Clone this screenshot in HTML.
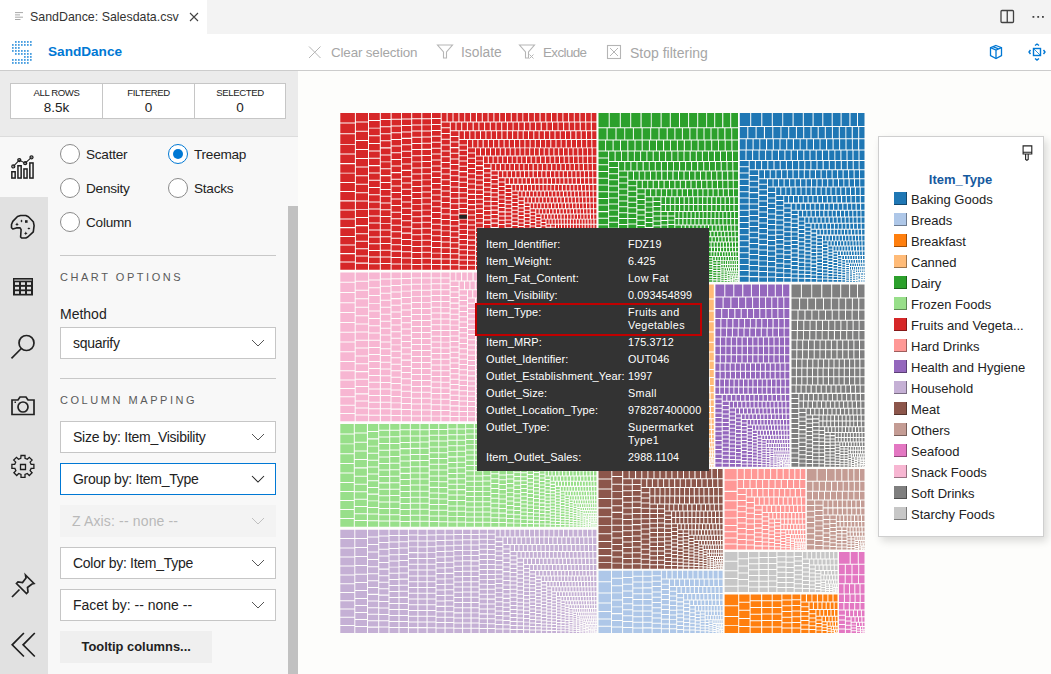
<!DOCTYPE html>
<html><head><meta charset="utf-8">
<style>
*{box-sizing:border-box;margin:0;padding:0}
html,body{width:1051px;height:674px;overflow:hidden;background:#fff;font-family:"Liberation Sans",sans-serif;color:#222}
.a{position:absolute}
.t{position:absolute;white-space:nowrap;line-height:1}
#tabbar{left:0;top:0;width:1051px;height:34px;background:#f3f3f3}
#tab{left:0;top:0;width:207px;height:34px;background:#fff}
#hdr{left:0;top:34px;width:1051px;height:37px;background:#fff;border-bottom:1px solid #cccccc}
.tb{color:#a6a6a6;font-size:14px}
#stats{left:0;top:71px;width:298px;height:66px;background:#ebebeb;border-bottom:1px solid #dcdcdc}
.box{position:absolute;top:83px;height:36px;background:#fff;border:1px solid #c6c6c6}
.box .l{position:absolute;left:0;right:0;top:3.7px;text-align:center;font-size:9.6px;letter-spacing:-0.4px;color:#222;line-height:1}
.box .v{position:absolute;left:0;right:0;top:16.8px;text-align:center;font-size:13.5px;color:#222;line-height:1}
#side{left:0;top:137px;width:48px;height:537px;background:#e1e1e1}
#sideact{left:0;top:137px;width:48px;height:60px;background:#f8f8f8}
#panel{left:48px;top:137px;width:250px;height:537px;background:#f8f8f8}
#sb{left:288px;top:206px;width:10px;height:468px;background:#c1c1c1}
#sbtrack{left:288px;top:137px;width:10px;height:537px;background:#f8f8f8}
.radio{position:absolute;width:20px;height:20px;border:1px solid #8a8a8a;border-radius:50%;background:#fff}
.radio.on{border-color:#0078d4}
.radio.on::after{content:"";position:absolute;left:4px;top:4px;width:10px;height:10px;border-radius:50%;background:#0078d4}
.rl{position:absolute;font-size:13.6px;letter-spacing:-0.25px;color:#222;line-height:1;white-space:nowrap}
.sep{position:absolute;left:60px;width:216px;height:1px;background:#c8c8c8}
.cap{position:absolute;left:60px;font-size:11px;letter-spacing:2.55px;color:#5a5a5a;line-height:1;white-space:nowrap}
.dd{position:absolute;left:60px;width:216px;height:32px;background:#fff;border:1px solid #c6c6c6}
.dd .x{position:absolute;left:12px;top:8.4px;font-size:14px;color:#222;line-height:1;white-space:nowrap}
.dd svg{position:absolute;left:189px;top:10px}
.leg{position:absolute;left:878px;top:136px;width:166px;height:401px;background:#fff;border:1px solid #cfcfcf;box-shadow:3px 4px 8px rgba(0,0,0,.14)}
.sw{position:absolute;left:15px;width:13px;height:13px;border-right:1.5px solid rgba(0,0,0,.38);border-bottom:1.5px solid rgba(0,0,0,.38)}
.ll{position:absolute;left:32px;font-size:13px;color:#222;line-height:1;white-space:nowrap}
#tip{left:477px;top:228px;width:232px;height:243px;background:#333333;color:#fff}
.tk{position:absolute;left:9px;font-size:11px;letter-spacing:0.1px;margin-top:-1px;line-height:1;white-space:nowrap;color:#fff}
.tv{position:absolute;left:151px;font-size:10.8px;letter-spacing:0.1px;line-height:13px;white-space:nowrap;color:#fff}
</style></head><body>
<div class="a" style="left:298px;top:71px;width:753px;height:603px;background:#fdfdfb"></div><div id="tabbar" class="a"></div>
<div id="tab" class="a"></div>
<div id="hdr" class="a"></div>
<div id="stats" class="a"></div>
<div id="side" class="a"></div>
<div id="sideact" class="a"></div>
<div id="panel" class="a"></div>
<div id="sbtrack" class="a"></div>
<div id="sb" class="a"></div>
<!-- tab -->
<svg class="a" style="left:14px;top:11px" width="10" height="10" viewBox="0 0 10 10"><g stroke="#a8a8a8" stroke-width="1"><path d="M1 1.6h8M1 3.9h5M1 6.2h8M1 8.5h5.5"/></g></svg>
<div class="t" style="left:30px;top:10.6px;font-size:12.4px;color:#333">SandDance: Salesdata.csv</div>
<svg class="a" style="left:189px;top:12px" width="10" height="10" viewBox="0 0 10 10"><path d="M1 1l8 8M9 1L1 9" stroke="#424242" stroke-width="1.1"/></svg>
<!-- split + more -->
<svg class="a" style="left:1000px;top:9px" width="15" height="15" viewBox="0 0 15 15"><rect x="1" y="1.5" width="12.5" height="12" rx="1" fill="none" stroke="#424242" stroke-width="1.3"/><path d="M7.25 1.5v12" stroke="#424242" stroke-width="1.3"/></svg>
<svg class="a" style="left:1030px;top:15px" width="16" height="4" viewBox="0 0 16 4"><rect x="2.5" y="1" width="1.8" height="1.8" fill="#424242"/><rect x="7.3" y="1" width="1.8" height="1.8" fill="#424242"/><rect x="12" y="1" width="1.8" height="1.8" fill="#424242"/></svg>
<!-- logo -->
<svg class="a" style="left:11.2px;top:40.2px" width="24" height="26" viewBox="0 0 24 26" fill="#0078d4"><rect x="4.1" y="1.2" width="1.5" height="1.5"/><rect x="7.1" y="1.2" width="1.5" height="1.5"/><rect x="10.1" y="1.2" width="1.5" height="1.5"/><rect x="13.1" y="1.2" width="1.5" height="1.5"/><rect x="16.1" y="1.2" width="1.5" height="1.5"/><rect x="19.1" y="1.2" width="1.5" height="1.5"/><rect x="1.1" y="4.2" width="1.5" height="1.5"/><rect x="4.1" y="4.2" width="1.5" height="1.5"/><rect x="7.1" y="4.2" width="1.5" height="1.5"/><rect x="10.1" y="4.2" width="1.5" height="1.5"/><rect x="13.1" y="4.2" width="1.5" height="1.5"/><rect x="16.1" y="4.2" width="1.5" height="1.5"/><rect x="19.1" y="4.2" width="1.5" height="1.5"/><rect x="1.1" y="7.2" width="1.5" height="1.5"/><rect x="4.1" y="7.2" width="1.5" height="1.5"/><rect x="7.1" y="7.2" width="1.5" height="1.5"/><rect x="1.1" y="10.2" width="1.5" height="1.5"/><rect x="4.1" y="10.2" width="1.5" height="1.5"/><rect x="7.1" y="10.2" width="1.5" height="1.5"/><rect x="10.1" y="10.2" width="1.5" height="1.5"/><rect x="13.1" y="10.2" width="1.5" height="1.5"/><rect x="16.1" y="10.2" width="1.5" height="1.5"/><rect x="4.1" y="13.2" width="1.5" height="1.5"/><rect x="7.1" y="13.2" width="1.5" height="1.5"/><rect x="10.1" y="13.2" width="1.5" height="1.5"/><rect x="13.1" y="13.2" width="1.5" height="1.5"/><rect x="16.1" y="13.2" width="1.5" height="1.5"/><rect x="19.1" y="13.2" width="1.5" height="1.5"/><rect x="13.1" y="16.2" width="1.5" height="1.5"/><rect x="16.1" y="16.2" width="1.5" height="1.5"/><rect x="19.1" y="16.2" width="1.5" height="1.5"/><rect x="1.1" y="19.2" width="1.5" height="1.5"/><rect x="4.1" y="19.2" width="1.5" height="1.5"/><rect x="7.1" y="19.2" width="1.5" height="1.5"/><rect x="10.1" y="19.2" width="1.5" height="1.5"/><rect x="13.1" y="19.2" width="1.5" height="1.5"/><rect x="16.1" y="19.2" width="1.5" height="1.5"/><rect x="19.1" y="19.2" width="1.5" height="1.5"/><rect x="1.1" y="22.2" width="1.5" height="1.5"/><rect x="4.1" y="22.2" width="1.5" height="1.5"/><rect x="7.1" y="22.2" width="1.5" height="1.5"/><rect x="10.1" y="22.2" width="1.5" height="1.5"/><rect x="13.1" y="22.2" width="1.5" height="1.5"/><rect x="16.1" y="22.2" width="1.5" height="1.5"/></svg>
<div class="t" style="left:48px;top:45.3px;font-size:13.6px;font-weight:bold;color:#0078d4">SandDance</div>
<!-- toolbar -->
<svg class="a" style="left:308px;top:45px" width="14" height="14" viewBox="0 0 14 14"><path d="M1 1.5l11.5 11.5M12.5 1.5L1 13" stroke="#b5b5b5" stroke-width="1"/></svg>
<div class="t tb" style="left:331px;top:46px;font-size:13.4px;letter-spacing:-0.15px">Clear selection</div>
<svg class="a" style="left:436px;top:44px" width="18" height="16" viewBox="0 0 18 16"><path d="M1.5 1h15L10.5 8v6H7.5V8z" fill="none" stroke="#b5b5b5" stroke-width="1.1"/></svg>
<div class="t tb" style="left:461px;top:46px;font-size:13.8px">Isolate</div>
<svg class="a" style="left:518px;top:44px" width="18" height="16" viewBox="0 0 18 16"><path d="M1.5 1h15L10.5 8v6H7.5V8z" fill="none" stroke="#b5b5b5" stroke-width="1.1"/><path d="M11.5 10.5l4 4M15.5 10.5l-4 4" stroke="#b5b5b5" stroke-width="1"/></svg>
<div class="t tb" style="left:543px;top:46px;font-size:13.4px;letter-spacing:-0.6px">Exclude</div>
<svg class="a" style="left:606px;top:44px" width="16" height="16" viewBox="0 0 16 16"><rect x="1.5" y="1.5" width="13" height="13" fill="none" stroke="#b5b5b5" stroke-width="1.1"/><path d="M4 4l8 8M12 4l-8 8" stroke="#b5b5b5" stroke-width="1"/></svg>
<div class="t tb" style="left:630px;top:46px;font-size:14px">Stop filtering</div>
<!-- right blue icons -->
<svg class="a" style="left:988px;top:44px" width="16" height="16" viewBox="0 0 16 16"><g fill="none" stroke="#0078d4" stroke-width="1.3"><path d="M8 1.5l5.5 2.2v8L8 14.5 2.5 11.7v-8z"/><path d="M2.5 3.7L8 6l5.5-2.3M8 6v8.5M5 2.6l5.5 2.3"/></g></svg>
<svg class="a" style="left:1028px;top:43px" width="18" height="18" viewBox="0 0 18 18"><g fill="none" stroke="#0078d4" stroke-width="1.4"><rect x="5.5" y="5.5" width="7" height="7"/><path d="M7 2.5l2-1.5 2 1.5M7 15.5l2 1.5 2-1.5M2.5 7L1 9l1.5 2M15.5 7l1.5 2-1.5 2"/></g><path d="M6 6l6 6" stroke="#0078d4" stroke-width="0.8"/></svg>
<!-- stats -->
<div class="box" style="left:10px;width:93px"><div class="l">ALL ROWS</div><div class="v">8.5k</div></div>
<div class="box" style="left:102px;width:93px"><div class="l">FILTERED</div><div class="v">0</div></div>
<div class="box" style="left:194px;width:92px"><div class="l">SELECTED</div><div class="v">0</div></div>
<!-- side icons -->
<svg class="a" style="left:9px;top:154px" width="28" height="28" viewBox="0 0 28 28"><g fill="none" stroke="#1e1e1e" stroke-width="1.5"><rect x="2.85" y="17.75" width="3.3" height="6.3"/><rect x="8.95" y="11.75" width="3.2" height="12.3"/><rect x="14.95" y="14.95" width="3.1" height="9.1"/><rect x="20.85" y="8.95" width="3.2" height="15.1"/><path d="M4.3 12.4L10.3 6.1L16.2 9.2L22.5 3.3" stroke-width="1.1"/><circle cx="4.3" cy="12.4" r="1.5" stroke-width="1.3"/><circle cx="10.3" cy="6.1" r="1.5" stroke-width="1.3"/><circle cx="16.2" cy="9.2" r="1.5" stroke-width="1.3"/><circle cx="22.5" cy="3.3" r="1.5" stroke-width="1.3"/></g></svg>
<svg class="a" style="left:9px;top:213px" width="28" height="28" viewBox="0 0 28 28"><path d="M11.6 2.5H16.8L19.4 3.8L24.3 8.7L25.1 12.6L24.3 18.8L18.8 24L16.8 25H12.6L11.6 24L12.1 16.7L11.1 14.9H7.4L3.8 16L2.5 14.7V11.5L3.8 8.4L8.5 3.5Z" fill="none" stroke="#1e1e1e" stroke-width="1.6" stroke-linejoin="round"/><g fill="#1e1e1e"><path d="M12.5 6.4l1 1.5-1 1.5-1-1.5z"/><rect x="16" y="7.2" width="2.6" height="2.6"/><path d="M8 9.6l.6 1.2 1.2.6-1.2.6-.6 1.2-.6-1.2-1.2-.6 1.2-.6z"/><path d="M19.9 14.4l1.5 1-1.5 1-1.5-1z"/><path d="M16.8 18.6l.6 1.2 1.2.6-1.2.6-.6 1.2-.6-1.2-1.2-.6 1.2-.6z"/></g></svg>
<svg class="a" style="left:12px;top:277px" width="22" height="20" viewBox="0 0 22 20"><rect x="1" y="1" width="20" height="17.5" fill="#222"/><rect x="2.3" y="2.6" width="17.4" height="1" fill="#e1e1e1"/><g fill="#e1e1e1"><rect x="3" y="5.3" width="4" height="2.6"/><rect x="9" y="5.3" width="4" height="2.6"/><rect x="15" y="5.3" width="4" height="2.6"/><rect x="3" y="9.8" width="4" height="2.6"/><rect x="9" y="9.8" width="4" height="2.6"/><rect x="15" y="9.8" width="4" height="2.6"/><rect x="3" y="14.2" width="4" height="2.6"/><rect x="9" y="14.2" width="4" height="2.6"/><rect x="15" y="14.2" width="4" height="2.6"/></g></svg>
<svg class="a" style="left:9px;top:333px" width="28" height="28" viewBox="0 0 28 28"><g fill="none" stroke="#222" stroke-width="1.7"><circle cx="17.5" cy="10" r="7.5"/><path d="M12.3 15.5L2.5 25.3"/></g></svg>
<svg class="a" style="left:9px;top:393px" width="28" height="26" viewBox="0 0 28 26"><g fill="none" stroke="#222" stroke-width="1.7"><path d="M3 7h6l2-3h6l2 3h6v14.5H3z"/><circle cx="14" cy="14" r="5"/></g><rect x="5.5" y="8.5" width="1.5" height="1.5" fill="#222"/></svg>
<svg class="a" style="left:9px;top:453px" width="28" height="28" viewBox="0 0 28 28"><g fill="none" stroke="#1e1e1e" stroke-width="1.3"><path d="M12 2.5h4v2.8l2.3 1 2-2 2.8 2.8-2 2 1 2.3h2.8v4h-2.8l-1 2.3 2 2-2.8 2.8-2-2-2.3 1v2.8h-4v-2.8l-2.3-1-2 2-2.8-2.8 2-2-1-2.3H2.9v-4h2.8l1-2.3-2-2 2.8-2.8 2 2 2.3-1z"/><path d="M11.5 11.5h5v5h-5z"/></g></svg>
<svg class="a" style="left:9px;top:572px" width="28" height="28" viewBox="0 0 28 28"><g fill="none" stroke="#222" stroke-width="1.7"><path d="M16.5 3l8.5 8.5-2 .5-4.5 3.5.5 4.5-1.5 1.5-10-10 1.5-1.5 4.5.5L17 6z"/><path d="M10.5 17.5L3 25"/></g></svg>
<svg class="a" style="left:10px;top:631px" width="28" height="28" viewBox="0 0 28 28"><g fill="none" stroke="#1e1e1e" stroke-width="1.7"><path d="M13.9 2L2.2 13.8l11.7 11.7M24.8 2L13.1 13.8l11.7 11.7"/></g></svg>
<!-- radios -->
<div class="radio" style="left:60px;top:144px"></div><div class="rl" style="left:86px;top:147.7px">Scatter</div>
<div class="radio on" style="left:168px;top:144px"></div><div class="rl" style="left:194px;top:147.7px">Treemap</div>
<div class="radio" style="left:60px;top:178px"></div><div class="rl" style="left:86px;top:181.7px">Density</div>
<div class="radio" style="left:168px;top:178px"></div><div class="rl" style="left:194px;top:181.7px">Stacks</div>
<div class="radio" style="left:60px;top:212px"></div><div class="rl" style="left:86px;top:215.7px">Column</div>
<div class="sep" style="top:255px"></div>
<div class="cap" style="top:272px">CHART OPTIONS</div>
<div class="t" style="left:60px;top:307px;font-size:14px;color:#222">Method</div>
<div class="dd" style="top:327px"><div class="x" style="letter-spacing:-0.3px">squarify</div><svg width="16" height="10" viewBox="0 0 16 10"><path d="M2 2l6 6 6-6" fill="none" stroke="#555" stroke-width="1"/></svg></div>
<div class="sep" style="top:378px"></div>
<div class="cap" style="top:395px">COLUMN MAPPING</div>
<div class="dd" style="top:421px"><div class="x" style="letter-spacing:-0.27px">Size by: Item_Visibility</div><svg width="16" height="10" viewBox="0 0 16 10"><path d="M2 2l6 6 6-6" fill="none" stroke="#555" stroke-width="1"/></svg></div>
<div class="dd" style="top:463px;border-color:#0078d4"><div class="x" style="letter-spacing:-0.28px">Group by: Item_Type</div><svg width="16" height="10" viewBox="0 0 16 10"><path d="M2 2l6 6 6-6" fill="none" stroke="#222" stroke-width="1.05"/></svg></div>
<div class="dd" style="top:505px;background:#f3f3f3;border-color:#f3f3f3"><div class="x" style="color:#b9b9b9;letter-spacing:0.15px;left:11px;top:8px">Z Axis: -- none --</div><svg width="16" height="10" viewBox="0 0 16 10"><path d="M2 2l6 6 6-6" fill="none" stroke="#c0c0c0" stroke-width="1"/></svg></div>
<div class="dd" style="top:547px"><div class="x" style="letter-spacing:-0.28px">Color by: Item_Type</div><svg width="16" height="10" viewBox="0 0 16 10"><path d="M2 2l6 6 6-6" fill="none" stroke="#555" stroke-width="1"/></svg></div>
<div class="dd" style="top:589px"><div class="x">Facet by: -- none --</div><svg width="16" height="10" viewBox="0 0 16 10"><path d="M2 2l6 6 6-6" fill="none" stroke="#555" stroke-width="1"/></svg></div>
<div class="a" style="left:60px;top:631px;width:152px;height:32px;background:#efefef"></div>
<div class="t" style="left:81.5px;top:640.5px;font-size:12.9px;font-weight:bold;color:#222">Tooltip columns...</div>
<svg class="a" style="left:0;top:0" width="1051" height="674"><path fill="#d62728" d="M340.3 113h14.6v9.6h-14.6zM340.3 123.6h14.6v9.6h-14.6zM340.3 134.3h14.6v9.6h-14.6zM340.3 144.8h14.6v8.7h-14.6zM340.3 154.5h14.6v8.6h-14.6zM340.3 164.2h14.6v8.5h-14.6zM340.3 173.6h14.6v8.3h-14.6zM340.3 182.9h14.6v8.2h-14.6zM340.3 192.1h14.6v8.2h-14.6zM340.3 201.4h14.6v8.1h-14.6zM340.3 210.5h14.6v8h-14.6zM340.3 219.4h14.6v7.7h-14.6zM340.3 228.2h14.6v7.7h-14.6zM340.3 236.9h14.6v7.7h-14.6zM340.3 245.5h14.6v7.6h-14.6zM340.3 254.2h14.6v7.3h-14.6zM340.3 262.5h14.6v7.3h-14.6zM355.9 113h12.1v8.5h-12.1zM355.9 122.5h12.1v8.3h-12.1zM355.9 131.8h12.1v8.2h-12.1zM355.9 141h12.1v8h-12.1zM355.9 150h12.1v8h-12.1zM355.9 159h12.1v7.6h-12.1zM355.9 167.6h12.1v7.6h-12.1zM355.9 176.2h12.1v7.6h-12.1zM355.9 184.8h12.1v7.5h-12.1zM355.9 193.3h12.1v7.3h-12.1zM355.9 201.6h12.1v7.3h-12.1zM355.9 209.8h12.1v7.2h-12.1zM355.9 218h12.1v7.1h-12.1zM355.9 226.2h12.1v7h-12.1zM355.9 234.2h12.1v6.6h-12.1zM355.9 241.8h12.1v6.4h-12.1zM355.9 249.2h12.1v6.3h-12.1zM355.9 256.5h12.1v6.1h-12.1zM355.9 263.7h12.1v6.1h-12.1zM369 113h10.8v6.9h-10.8zM369 120.9h10.8v6.8h-10.8zM369 128.6h10.8v6.7h-10.8zM369 136.3h10.8v6.6h-10.8zM369 143.9h10.8v6.5h-10.8zM369 151.4h10.8v6.4h-10.8zM369 158.8h10.8v6.3h-10.8zM369 166.2h10.8v6.3h-10.8zM369 173.5h10.8v6.3h-10.8zM369 180.8h10.8v6.3h-10.8zM369 188h10.8v6.2h-10.8zM369 195.3h10.8v6.1h-10.8zM369 202.4h10.8v6.1h-10.8zM369 209.5h10.8v6.1h-10.8zM369 216.6h10.8v6h-10.8zM369 223.6h10.8v5.9h-10.8zM369 230.5h10.8v5.9h-10.8zM369 237.4h10.8v5.8h-10.8zM369 244.3h10.8v5.7h-10.8zM369 250.9h10.8v5.6h-10.8zM369 257.6h10.8v5.6h-10.8zM369 264.2h10.8v5.6h-10.8zM380.8 113h9.8v6.1h-9.8zM380.8 120.1h9.8v6.1h-9.8zM380.8 127.2h9.8v6.1h-9.8zM380.8 134.3h9.8v6h-9.8zM380.8 141.3h9.8v6h-9.8zM380.8 148.4h9.8v6h-9.8zM380.8 155.4h9.8v6h-9.8zM380.8 162.3h9.8v5.9h-9.8zM380.8 169.2h9.8v5.9h-9.8zM380.8 176.2h9.8v5.9h-9.8zM380.8 183h9.8v5.9h-9.8zM380.8 189.9h9.8v5.8h-9.8zM380.8 196.7h9.8v5.8h-9.8zM380.8 203.5h9.8v5.8h-9.8zM380.8 210.3h9.8v5.8h-9.8zM380.8 217.1h9.8v5.8h-9.8zM380.8 223.8h9.8v5.7h-9.8zM380.8 230.6h9.8v5.7h-9.8zM380.8 237.3h9.8v5.7h-9.8zM380.8 244h9.8v5.7h-9.8zM380.8 250.7h9.8v5.7h-9.8zM380.8 257.4h9.8v5.7h-9.8zM380.8 264.1h9.8v5.7h-9.8zM391.6 113h9.5v5.8h-9.5zM391.6 119.8h9.5v5.8h-9.5zM391.6 126.5h9.5v5.7h-9.5zM391.6 133.3h9.5v5.7h-9.5zM391.6 139.9h9.5v5.7h-9.5zM391.6 146.6h9.5v5.7h-9.5zM391.6 153.3h9.5v5.6h-9.5zM391.6 159.9h9.5v5.6h-9.5zM391.6 166.5h9.5v5.6h-9.5zM391.6 173.2h9.5v5.6h-9.5zM391.6 179.8h9.5v5.6h-9.5zM391.6 186.4h9.5v5.6h-9.5zM391.6 193h9.5v5.6h-9.5zM391.6 199.5h9.5v5.6h-9.5zM391.6 206.1h9.5v5.6h-9.5zM391.6 212.7h9.5v5.6h-9.5zM391.6 219.2h9.5v5.5h-9.5zM391.6 225.8h9.5v5.5h-9.5zM391.6 232.3h9.5v5.5h-9.5zM391.6 238.8h9.5v5.5h-9.5zM391.6 245.2h9.5v5.4h-9.5zM391.6 251.7h9.5v5.4h-9.5zM391.6 258.1h9.5v5.4h-9.5zM391.6 264.5h9.5v5.3h-9.5zM402 113h9.2v5.5h-9.2zM402 119.5h9.2v5.5h-9.2zM402 126h9.2v5.5h-9.2zM402 132.4h9.2v5.4h-9.2zM402 138.9h9.2v5.4h-9.2zM402 145.3h9.2v5.4h-9.2zM402 151.8h9.2v5.4h-9.2zM402 158.1h9.2v5.4h-9.2zM402 164.5h9.2v5.3h-9.2zM402 170.9h9.2v5.3h-9.2zM402 177.2h9.2v5.3h-9.2zM402 183.5h9.2v5.3h-9.2zM402 189.8h9.2v5.3h-9.2zM402 196.1h9.2v5.3h-9.2zM402 202.4h9.2v5.3h-9.2zM402 208.7h9.2v5.3h-9.2zM402 214.9h9.2v5.3h-9.2zM402 221.2h9.2v5.2h-9.2zM402 227.4h9.2v5.2h-9.2zM402 233.7h9.2v5.2h-9.2zM402 239.9h9.2v5.2h-9.2zM402 246.1h9.2v5.2h-9.2zM402 252.3h9.2v5.2h-9.2zM402 258.5h9.2v5.2h-9.2zM402 264.6h9.2v5.2h-9.2zM412.2 113h9.1v5.2h-9.1zM412.2 119.2h9.1v5.2h-9.1zM412.2 125.4h9.1v5.2h-9.1zM412.2 131.5h9.1v5.2h-9.1zM412.2 137.7h9.1v5.2h-9.1zM412.2 143.9h9.1v5.2h-9.1zM412.2 150h9.1v5.2h-9.1zM412.2 156.2h9.1v5.2h-9.1zM412.2 162.3h9.1v5.1h-9.1zM412.2 168.5h9.1v5.1h-9.1zM412.2 174.6h9.1v5.1h-9.1zM412.2 180.8h9.1v5.1h-9.1zM412.2 186.9h9.1v5.1h-9.1zM412.2 193h9.1v5.1h-9.1zM412.2 199.1h9.1v5.1h-9.1zM412.2 205.1h9.1v5.1h-9.1zM412.2 211.2h9.1v5h-9.1zM412.2 217.2h9.1v5h-9.1zM412.2 223.2h9.1v5h-9.1zM412.2 229.2h9.1v5h-9.1zM412.2 235.2h9.1v5h-9.1zM412.2 241.1h9.1v5h-9.1zM412.2 247.1h9.1v4.9h-9.1zM412.2 253h9.1v4.9h-9.1zM412.2 259h9.1v4.9h-9.1zM412.2 264.9h9.1v4.9h-9.1zM422.3 113h8.7v5.2h-8.7zM422.3 119.2h8.7v5.2h-8.7zM422.3 125.3h8.7v5.1h-8.7zM422.3 131.5h8.7v5.1h-8.7zM422.3 137.6h8.7v5.1h-8.7zM422.3 143.7h8.7v5.1h-8.7zM422.3 149.9h8.7v5.1h-8.7zM422.3 156h8.7v5.1h-8.7zM422.3 162.1h8.7v5.1h-8.7zM422.3 168.2h8.7v5.1h-8.7zM422.3 174.3h8.7v5.1h-8.7zM422.3 180.3h8.7v5.1h-8.7zM422.3 186.4h8.7v5.1h-8.7zM422.3 192.5h8.7v5.1h-8.7zM422.3 198.5h8.7v5.1h-8.7zM422.3 204.6h8.7v5.1h-8.7zM422.3 210.6h8.7v5h-8.7zM422.3 216.7h8.7v5h-8.7zM422.3 222.7h8.7v5h-8.7zM422.3 228.8h8.7v5h-8.7zM422.3 234.8h8.7v5h-8.7zM422.3 240.8h8.7v5h-8.7zM422.3 246.8h8.7v5h-8.7zM422.3 252.8h8.7v5h-8.7zM422.3 258.8h8.7v5h-8.7zM422.3 264.8h8.7v5h-8.7zM432 113h8.7v5h-8.7zM432 119h8.7v5h-8.7zM432 124.9h8.7v5h-8.7zM432 130.9h8.7v4.9h-8.7zM432 136.8h8.7v4.9h-8.7zM432 142.8h8.7v4.9h-8.7zM432 148.7h8.7v4.9h-8.7zM432 154.6h8.7v4.9h-8.7zM432 160.5h8.7v4.9h-8.7zM432 166.4h8.7v4.9h-8.7zM432 172.2h8.7v4.9h-8.7zM432 178.1h8.7v4.9h-8.7zM432 184h8.7v4.8h-8.7zM432 189.8h8.7v4.8h-8.7zM432 195.6h8.7v4.8h-8.7zM432 201.4h8.7v4.8h-8.7zM432 207.3h8.7v4.8h-8.7zM432 213.1h8.7v4.8h-8.7zM432 218.9h8.7v4.8h-8.7zM432 224.7h8.7v4.8h-8.7zM432 230.5h8.7v4.8h-8.7zM432 236.3h8.7v4.8h-8.7zM432 242.1h8.7v4.8h-8.7zM432 247.9h8.7v4.8h-8.7zM432 253.6h8.7v4.7h-8.7zM432 259.4h8.7v4.7h-8.7zM432 265.1h8.7v4.7h-8.7zM441.7 113h4.9v8.4h-4.9zM447.6 113h4.9v8.4h-4.9zM453.5 113h4.9v8.4h-4.9zM459.4 113h4.9v8.4h-4.9zM465.2 113h4.9v8.4h-4.9zM471.1 113h4.8v8.4h-4.8zM477 113h4.8v8.4h-4.8zM482.8 113h4.8v8.4h-4.8zM488.6 113h4.8v8.4h-4.8zM494.4 113h4.8v8.4h-4.8zM500.2 113h4.8v8.4h-4.8zM506 113h4.8v8.4h-4.8zM511.8 113h4.8v8.4h-4.8zM517.6 113h4.8v8.4h-4.8zM523.3 113h4.8v8.4h-4.8zM529.1 113h4.8v8.4h-4.8zM534.8 113h4.7v8.4h-4.7zM540.6 113h4.7v8.4h-4.7zM546.3 113h4.7v8.4h-4.7zM552 113h4.7v8.4h-4.7zM557.7 113h4.7v8.4h-4.7zM563.4 113h4.7v8.4h-4.7zM569.1 113h4.7v8.4h-4.7zM574.7 113h4.7v8.4h-4.7zM580.4 113h4.7v8.4h-4.7zM586.1 113h4.7v8.4h-4.7zM591.7 113h4.7v8.4h-4.7zM441.7 122.4h8.1v4.8h-8.1zM441.7 128.2h8.1v4.8h-8.1zM441.7 134h8.1v4.8h-8.1zM441.7 139.8h8.1v4.8h-8.1zM441.7 145.6h8.1v4.8h-8.1zM441.7 151.4h8.1v4.8h-8.1zM441.7 157.2h8.1v4.8h-8.1zM441.7 162.9h8.1v4.8h-8.1zM441.7 168.7h8.1v4.8h-8.1zM441.7 174.5h8.1v4.7h-8.1zM441.7 180.2h8.1v4.7h-8.1zM441.7 185.9h8.1v4.7h-8.1zM441.7 191.6h8.1v4.7h-8.1zM441.7 197.3h8.1v4.7h-8.1zM441.7 203h8.1v4.7h-8.1zM441.7 208.7h8.1v4.7h-8.1zM441.7 214.4h8.1v4.7h-8.1zM441.7 220h8.1v4.7h-8.1zM441.7 225.7h8.1v4.7h-8.1zM441.7 231.3h8.1v4.7h-8.1zM441.7 237h8.1v4.6h-8.1zM441.7 242.6h8.1v4.6h-8.1zM441.7 248.3h8.1v4.6h-8.1zM441.7 253.9h8.1v4.6h-8.1zM441.7 259.5h8.1v4.6h-8.1zM441.7 265.2h8.1v4.6h-8.1zM450.8 122.4h4.7v7.9h-4.7zM456.5 122.4h4.7v7.9h-4.7zM462.2 122.4h4.7v7.9h-4.7zM467.9 122.4h4.7v7.9h-4.7zM473.7 122.4h4.7v7.9h-4.7zM479.4 122.4h4.7v7.9h-4.7zM485.1 122.4h4.7v7.9h-4.7zM490.8 122.4h4.7v7.9h-4.7zM496.5 122.4h4.7v7.9h-4.7zM502.2 122.4h4.7v7.9h-4.7zM507.9 122.4h4.7v7.9h-4.7zM513.5 122.4h4.7v7.9h-4.7zM519.2 122.4h4.6v7.9h-4.6zM524.9 122.4h4.6v7.9h-4.6zM530.5 122.4h4.6v7.9h-4.6zM536.1 122.4h4.6v7.9h-4.6zM541.8 122.4h4.6v7.9h-4.6zM547.4 122.4h4.6v7.9h-4.6zM553 122.4h4.6v7.9h-4.6zM558.5 122.4h4.6v7.9h-4.6zM564.1 122.4h4.6v7.9h-4.6zM569.7 122.4h4.6v7.9h-4.6zM575.2 122.4h4.5v7.9h-4.5zM580.8 122.4h4.5v7.9h-4.5zM586.3 122.4h4.5v7.9h-4.5zM591.9 122.4h4.5v7.9h-4.5zM450.8 131.2h7.7v4.7h-7.7zM450.8 136.9h7.7v4.6h-7.7zM450.8 142.5h7.7v4.6h-7.7zM450.8 148.2h7.7v4.6h-7.7zM450.8 153.8h7.7v4.6h-7.7zM450.8 159.5h7.7v4.6h-7.7zM450.8 165.1h7.7v4.6h-7.7zM450.8 170.7h7.7v4.6h-7.7zM450.8 176.3h7.7v4.6h-7.7zM450.8 181.9h7.7v4.6h-7.7zM450.8 187.5h7.7v4.6h-7.7zM450.8 193.1h7.7v4.6h-7.7zM450.8 198.7h7.7v4.6h-7.7zM450.8 204.3h7.7v4.6h-7.7zM450.8 209.9h7.7v4.6h-7.7zM450.8 215.5h7.7v4.6h-7.7zM450.8 221h7.7v4.6h-7.7zM450.8 226.6h7.7v4.6h-7.7zM450.8 232.2h7.7v4.5h-7.7zM450.8 237.7h7.7v4.5h-7.7zM450.8 243.3h7.7v4.5h-7.7zM450.8 248.8h7.7v4.5h-7.7zM450.8 254.3h7.7v4.5h-7.7zM450.8 259.8h7.7v4.5h-7.7zM450.8 265.3h7.7v4.5h-7.7zM459.5 131.2h4.4v7.8h-4.4zM464.9 131.2h4.4v7.8h-4.4zM470.3 131.2h4.4v7.8h-4.4zM475.6 131.2h4.4v7.8h-4.4zM481 131.2h4.4v7.8h-4.4zM486.4 131.2h4.4v7.8h-4.4zM491.7 131.2h4.4v7.8h-4.4zM497.1 131.2h4.3v7.8h-4.3zM502.4 131.2h4.3v7.8h-4.3zM507.8 131.2h4.3v7.8h-4.3zM513.1 131.2h4.3v7.8h-4.3zM518.4 131.2h4.3v7.8h-4.3zM523.7 131.2h4.3v7.8h-4.3zM529 131.2h4.3v7.8h-4.3zM534.3 131.2h4.3v7.8h-4.3zM539.6 131.2h4.3v7.8h-4.3zM544.9 131.2h4.3v7.8h-4.3zM550.2 131.2h4.3v7.8h-4.3zM555.5 131.2h4.3v7.8h-4.3zM560.7 131.2h4.3v7.8h-4.3zM566 131.2h4.2v7.8h-4.2zM571.2 131.2h4.2v7.8h-4.2zM576.5 131.2h4.2v7.8h-4.2zM581.7 131.2h4.2v7.8h-4.2zM587 131.2h4.2v7.8h-4.2zM592.2 131.2h4.2v7.8h-4.2zM459.5 140.1h7.5v4.4h-7.5zM459.5 145.4h7.5v4.4h-7.5zM459.5 150.8h7.5v4.4h-7.5zM459.5 156.2h7.5v4.3h-7.5zM459.5 161.5h7.5v4.3h-7.5zM459.5 166.8h7.5v4.3h-7.5zM459.5 172.2h7.5v4.3h-7.5zM459.5 177.4h7.5v4.3h-7.5zM459.5 182.7h7.5v4.3h-7.5zM459.5 188h7.5v4.3h-7.5zM459.5 193.3h7.5v4.3h-7.5zM459.5 198.5h7.5v4.3h-7.5zM459.5 203.8h7.5v4.2h-7.5zM459.5 209h7.5v4.2h-7.5zM459.5 214.3h7.5v4.2h-7.5zM459.5 219.5h7.5v4.2h-7.5zM459.5 224.7h7.5v4.2h-7.5zM459.5 229.8h7.5v4.1h-7.5zM459.5 235h7.5v4.1h-7.5zM459.5 240.1h7.5v4.1h-7.5zM459.5 245.2h7.5v4.1h-7.5zM459.5 250.3h7.5v4.1h-7.5zM459.5 255.5h7.5v4.1h-7.5zM459.5 260.6h7.5v4.1h-7.5zM459.5 265.7h7.5v4.1h-7.5zM468 140.1h4.2v7.3h-4.2zM473.2 140.1h4.2v7.3h-4.2zM478.4 140.1h4.2v7.3h-4.2zM483.7 140.1h4.2v7.3h-4.2zM488.9 140.1h4.2v7.3h-4.2zM494.1 140.1h4.2v7.3h-4.2zM499.4 140.1h4.2v7.3h-4.2zM504.6 140.1h4.2v7.3h-4.2zM509.8 140.1h4.2v7.3h-4.2zM515 140.1h4.2v7.3h-4.2zM520.2 140.1h4.2v7.3h-4.2zM525.4 140.1h4.2v7.3h-4.2zM530.6 140.1h4.2v7.3h-4.2zM535.8 140.1h4.2v7.3h-4.2zM541 140.1h4.2v7.3h-4.2zM546.1 140.1h4.2v7.3h-4.2zM551.3 140.1h4.2v7.3h-4.2zM556.5 140.1h4.2v7.3h-4.2zM561.6 140.1h4.1v7.3h-4.1zM566.8 140.1h4.1v7.3h-4.1zM571.9 140.1h4.1v7.3h-4.1zM577 140.1h4.1v7.3h-4.1zM582.1 140.1h4.1v7.3h-4.1zM587.2 140.1h4.1v7.3h-4.1zM592.3 140.1h4.1v7.3h-4.1zM468 148.3h7.1v4.2h-7.1zM468 153.6h7.1v4.2h-7.1zM468 158.8h7.1v4.2h-7.1zM468 163.9h7.1v4.2h-7.1zM468 169.1h7.1v4.2h-7.1zM468 174.3h7.1v4.2h-7.1zM468 179.4h7.1v4.2h-7.1zM468 184.6h7.1v4.1h-7.1zM468 189.7h7.1v4.1h-7.1zM468 194.9h7.1v4.1h-7.1zM468 200h7.1v4.1h-7.1zM468 205.2h7.1v4.1h-7.1zM468 210.3h7.1v4.1h-7.1zM468 215.4h7.1v4.1h-7.1zM468 220.4h7.1v4.1h-7.1zM468 225.5h7.1v4.1h-7.1zM468 230.6h7.1v4.1h-7.1zM468 235.6h7.1v4h-7.1zM468 240.7h7.1v4h-7.1zM468 245.7h7.1v4h-7.1zM468 250.8h7.1v4h-7.1zM468 255.8h7.1v4h-7.1zM468 260.8h7.1v4h-7.1zM468 265.8h7.1v4h-7.1zM476 148.3h4v7.1h-4zM481 148.3h4v7.1h-4zM486 148.3h4v7.1h-4zM491 148.3h4v7.1h-4zM495.9 148.3h3.9v7.1h-3.9zM500.8 148.3h3.9v7.1h-3.9zM505.8 148.3h3.9v7.1h-3.9zM510.7 148.3h3.9v7.1h-3.9zM515.6 148.3h3.9v7.1h-3.9zM520.5 148.3h3.9v7.1h-3.9zM525.3 148.3h3.9v7.1h-3.9zM530.2 148.3h3.9v7.1h-3.9zM535 148.3h3.8v7.1h-3.8zM539.9 148.3h3.8v7.1h-3.8zM544.7 148.3h3.8v7.1h-3.8zM549.6 148.3h3.8v7.1h-3.8zM554.4 148.3h3.8v7.1h-3.8zM559.2 148.3h3.8v7.1h-3.8zM564 148.3h3.8v7.1h-3.8zM568.8 148.3h3.8v7.1h-3.8zM573.6 148.3h3.8v7.1h-3.8zM578.4 148.3h3.8v7.1h-3.8zM583.2 148.3h3.8v7.1h-3.8zM587.9 148.3h3.7v7.1h-3.7zM592.7 148.3h3.7v7.1h-3.7zM476 156.5h6.9v3.9h-6.9zM476 161.3h6.9v3.8h-6.9zM476 166.2h6.9v3.8h-6.9zM476 171h6.9v3.8h-6.9zM476 175.8h6.9v3.8h-6.9zM476 180.6h6.9v3.8h-6.9zM476 185.4h6.9v3.8h-6.9zM476 190.2h6.9v3.8h-6.9zM476 195h6.9v3.8h-6.9zM476 199.8h6.9v3.8h-6.9zM476 204.5h6.9v3.8h-6.9zM476 209.3h6.9v3.8h-6.9zM476 214.1h6.9v3.8h-6.9zM476 218.8h6.9v3.8h-6.9zM476 223.6h6.9v3.8h-6.9zM476 228.3h6.9v3.7h-6.9zM476 233.1h6.9v3.7h-6.9zM476 237.8h6.9v3.7h-6.9zM476 242.6h6.9v3.7h-6.9zM476 247.3h6.9v3.7h-6.9zM476 252h6.9v3.7h-6.9zM476 256.7h6.9v3.7h-6.9zM476 261.4h6.9v3.7h-6.9zM476 266.1h6.9v3.7h-6.9zM484 156.5h3.8v6.7h-3.8zM488.8 156.5h3.8v6.7h-3.8zM493.6 156.5h3.8v6.7h-3.8zM498.4 156.5h3.8v6.7h-3.8zM503.2 156.5h3.8v6.7h-3.8zM508 156.5h3.8v6.7h-3.8zM512.7 156.5h3.8v6.7h-3.8zM517.5 156.5h3.8v6.7h-3.8zM522.2 156.5h3.7v6.7h-3.7zM527 156.5h3.7v6.7h-3.7zM531.7 156.5h3.7v6.7h-3.7zM536.4 156.5h3.7v6.7h-3.7zM541.1 156.5h3.7v6.7h-3.7zM545.9 156.5h3.7v6.7h-3.7zM550.6 156.5h3.7v6.7h-3.7zM555.3 156.5h3.7v6.7h-3.7zM560 156.5h3.7v6.7h-3.7zM564.7 156.5h3.7v6.7h-3.7zM569.4 156.5h3.7v6.7h-3.7zM574 156.5h3.7v6.7h-3.7zM578.7 156.5h3.7v6.7h-3.7zM583.4 156.5h3.7v6.7h-3.7zM588.1 156.5h3.7v6.7h-3.7zM592.7 156.5h3.7v6.7h-3.7zM484 164.1h6.5v3.7h-6.5zM484 168.9h6.5v3.7h-6.5zM484 173.6h6.5v3.7h-6.5zM484 178.3h6.5v3.7h-6.5zM484 183.1h6.5v3.7h-6.5zM484 187.7h6.5v3.7h-6.5zM484 192.4h6.5v3.7h-6.5zM484 197.1h6.5v3.7h-6.5zM484 201.8h6.5v3.7h-6.5zM484 206.5h6.5v3.6h-6.5zM484 211.1h6.5v3.6h-6.5zM484 215.7h6.5v3.6h-6.5zM484 220.4h6.5v3.6h-6.5zM484 225h6.5v3.6h-6.5zM491.5 164.1h3.7v6.2h-3.7zM496.2 164.1h3.7v6.2h-3.7zM501 164.1h3.7v6.2h-3.7zM505.6 164.1h3.7v6.2h-3.7zM510.3 164.1h3.7v6.2h-3.7zM515 164.1h3.7v6.2h-3.7zM519.7 164.1h3.7v6.2h-3.7zM524.4 164.1h3.7v6.2h-3.7zM529 164.1h3.6v6.2h-3.6zM533.7 164.1h3.6v6.2h-3.6zM538.3 164.1h3.6v6.2h-3.6zM542.9 164.1h3.6v6.2h-3.6zM547.5 164.1h3.6v6.2h-3.6zM552.2 164.1h3.6v6.2h-3.6zM556.7 164.1h3.6v6.2h-3.6zM561.3 164.1h3.6v6.2h-3.6zM565.9 164.1h3.5v6.2h-3.5zM570.4 164.1h3.5v6.2h-3.5zM574.9 164.1h3.5v6.2h-3.5zM579.4 164.1h3.5v6.2h-3.5zM584 164.1h3.5v6.2h-3.5zM588.4 164.1h3.5v6.2h-3.5zM592.9 164.1h3.5v6.2h-3.5zM491.5 171.3h6.3v3.4h-6.3zM491.5 175.7h6.3v3.4h-6.3zM491.5 180.1h6.3v3.4h-6.3zM491.5 184.5h6.3v3.4h-6.3zM491.5 188.9h6.3v3.4h-6.3zM491.5 193.2h6.3v3.4h-6.3zM491.5 197.6h6.3v3.4h-6.3zM491.5 202h6.3v3.3h-6.3zM491.5 206.3h6.3v3.3h-6.3zM491.5 210.7h6.3v3.3h-6.3zM491.5 215h6.3v3.3h-6.3zM491.5 219.3h6.3v3.3h-6.3zM491.5 223.7h6.3v3.3h-6.3zM491.5 228h6.3v3.3h-6.3zM498.8 171.3h3.4v6h-3.4zM503.2 171.3h3.4v6h-3.4zM507.6 171.3h3.4v6h-3.4zM511.9 171.3h3.4v6h-3.4zM516.3 171.3h3.4v6h-3.4zM520.7 171.3h3.3v6h-3.3zM525 171.3h3.3v6h-3.3zM529.3 171.3h3.3v6h-3.3zM533.7 171.3h3.3v6h-3.3zM538 171.3h3.3v6h-3.3zM542.3 171.3h3.3v6h-3.3zM546.7 171.3h3.3v6h-3.3zM551 171.3h3.3v6h-3.3zM555.2 171.3h3.3v6h-3.3zM559.5 171.3h3.3v6h-3.3zM563.8 171.3h3.3v6h-3.3zM568.1 171.3h3.2v6h-3.2zM572.3 171.3h3.2v6h-3.2zM576.5 171.3h3.2v6h-3.2zM580.7 171.3h3.2v6h-3.2zM584.9 171.3h3.2v6h-3.2zM589.1 171.3h3.2v6h-3.2zM593.2 171.3h3.2v6h-3.2zM498.8 178.3h5.8v3.3h-5.8zM498.8 182.6h5.8v3.3h-5.8zM498.8 186.9h5.8v3.3h-5.8zM498.8 191.1h5.8v3.3h-5.8zM498.8 195.4h5.8v3.3h-5.8zM498.8 199.6h5.8v3.3h-5.8zM498.8 203.9h5.8v3.2h-5.8zM498.8 208.1h5.8v3.2h-5.8zM498.8 212.4h5.8v3.2h-5.8zM498.8 216.6h5.8v3.2h-5.8zM498.8 220.8h5.8v3.2h-5.8zM498.8 225h5.8v3.2h-5.8zM505.6 178.3h3.3v5.5h-3.3zM509.9 178.3h3.3v5.5h-3.3zM514.2 178.3h3.2v5.5h-3.2zM518.4 178.3h3.2v5.5h-3.2zM522.6 178.3h3.2v5.5h-3.2zM526.8 178.3h3.2v5.5h-3.2zM531 178.3h3.2v5.5h-3.2zM535.2 178.3h3.2v5.5h-3.2zM539.4 178.3h3.2v5.5h-3.2zM543.6 178.3h3.2v5.5h-3.2zM547.8 178.3h3.2v5.5h-3.2zM552 178.3h3.2v5.5h-3.2zM556.2 178.3h3.2v5.5h-3.2zM560.3 178.3h3.1v5.5h-3.1zM564.5 178.3h3.1v5.5h-3.1zM568.6 178.3h3.1v5.5h-3.1zM572.7 178.3h3.1v5.5h-3.1zM576.9 178.3h3.1v5.5h-3.1zM581 178.3h3.1v5.5h-3.1zM585.1 178.3h3.1v5.5h-3.1zM589.2 178.3h3.1v5.5h-3.1zM593.3 178.3h3.1v5.5h-3.1zM505.6 184.9h5.7v3h-5.7zM505.6 188.9h5.7v3h-5.7zM505.6 192.9h5.7v3h-5.7zM505.6 196.9h5.7v2.9h-5.7zM505.6 200.8h5.7v2.9h-5.7zM505.6 204.8h5.7v2.9h-5.7zM505.6 208.7h5.7v2.9h-5.7zM505.6 212.6h5.7v2.9h-5.7zM505.6 216.5h5.7v2.9h-5.7zM505.6 220.4h5.7v2.9h-5.7zM505.6 224.3h5.7v2.9h-5.7zM512.3 184.9h3v5.5h-3zM516.2 184.9h2.9v5.5h-2.9zM520.2 184.9h2.9v5.5h-2.9zM524.1 184.9h2.9v5.5h-2.9zM528 184.9h2.9v5.5h-2.9zM531.9 184.9h2.9v5.5h-2.9zM535.8 184.9h2.9v5.5h-2.9zM539.7 184.9h2.9v5.5h-2.9zM543.6 184.9h2.9v5.5h-2.9zM547.5 184.9h2.9v5.5h-2.9zM551.3 184.9h2.9v5.5h-2.9zM555.2 184.9h2.9v5.5h-2.9zM559 184.9h2.8v5.5h-2.8zM562.9 184.9h2.8v5.5h-2.8zM566.7 184.9h2.8v5.5h-2.8zM570.6 184.9h2.8v5.5h-2.8zM574.4 184.9h2.8v5.5h-2.8zM578.2 184.9h2.8v5.5h-2.8zM582.1 184.9h2.8v5.5h-2.8zM585.9 184.9h2.8v5.5h-2.8zM589.8 184.9h2.8v5.5h-2.8zM593.6 184.9h2.8v5.5h-2.8zM512.3 191.4h5.4v2.9h-5.4zM512.3 195.3h5.4v2.9h-5.4zM512.3 199.1h5.4v2.9h-5.4zM512.3 203h5.4v2.9h-5.4zM512.3 206.9h5.4v2.9h-5.4zM512.3 210.8h5.4v2.8h-5.4zM512.3 214.6h5.4v2.8h-5.4zM512.3 218.4h5.4v2.8h-5.4zM512.3 222.2h5.4v2.8h-5.4zM512.3 226h5.4v2.8h-5.4zM518.6 191.4h2.8v5.2h-2.8zM522.4 191.4h2.8v5.2h-2.8zM526.3 191.4h2.8v5.2h-2.8zM530.1 191.4h2.8v5.2h-2.8zM533.8 191.4h2.8v5.2h-2.8zM537.6 191.4h2.8v5.2h-2.8zM541.4 191.4h2.8v5.2h-2.8zM545.2 191.4h2.8v5.2h-2.8zM548.9 191.4h2.8v5.2h-2.8zM552.7 191.4h2.8v5.2h-2.8zM556.5 191.4h2.8v5.2h-2.8zM560.2 191.4h2.7v5.2h-2.7zM564 191.4h2.7v5.2h-2.7zM567.7 191.4h2.7v5.2h-2.7zM571.5 191.4h2.7v5.2h-2.7zM575.2 191.4h2.7v5.2h-2.7zM578.9 191.4h2.7v5.2h-2.7zM582.6 191.4h2.7v5.2h-2.7zM586.3 191.4h2.7v5.2h-2.7zM590 191.4h2.7v5.2h-2.7zM593.7 191.4h2.7v5.2h-2.7zM518.6 197.5h5.1v2.7h-5.1zM518.6 201.2h5.1v2.7h-5.1zM518.6 204.9h5.1v2.7h-5.1zM518.6 208.6h5.1v2.7h-5.1zM518.6 212.3h5.1v2.7h-5.1zM518.6 216h5.1v2.7h-5.1zM518.6 219.7h5.1v2.7h-5.1zM518.6 223.4h5.1v2.7h-5.1zM518.6 227h5.1v2.7h-5.1zM524.8 197.5h2.7v5h-2.7zM528.4 197.5h2.7v5h-2.7zM532.1 197.5h2.7v5h-2.7zM535.8 197.5h2.7v5h-2.7zM539.5 197.5h2.7v5h-2.7zM543.2 197.5h2.7v5h-2.7zM546.8 197.5h2.7v5h-2.7zM550.5 197.5h2.7v5h-2.7zM554.1 197.5h2.6v5h-2.6zM557.8 197.5h2.6v5h-2.6zM561.4 197.5h2.6v5h-2.6zM565.1 197.5h2.6v5h-2.6zM568.7 197.5h2.6v5h-2.6zM572.3 197.5h2.6v5h-2.6zM575.9 197.5h2.6v5h-2.6zM579.5 197.5h2.6v5h-2.6zM583.1 197.5h2.6v5h-2.6zM586.7 197.5h2.6v5h-2.6zM590.3 197.5h2.6v5h-2.6zM593.8 197.5h2.6v5h-2.6zM524.8 203.5h4.8v2.6h-4.8zM524.8 207.1h4.8v2.6h-4.8zM524.8 210.7h4.8v2.6h-4.8zM524.8 214.3h4.8v2.6h-4.8zM524.8 217.9h4.8v2.6h-4.8zM524.8 221.5h4.8v2.6h-4.8zM524.8 225.1h4.8v2.6h-4.8zM530.6 203.5h2.6v4.7h-2.6zM534.2 203.5h2.6v4.7h-2.6zM537.7 203.5h2.6v4.7h-2.6zM541.3 203.5h2.6v4.7h-2.6zM544.8 203.5h2.6v4.7h-2.6zM548.4 203.5h2.6v4.7h-2.6zM552 203.5h2.5v4.7h-2.5zM555.5 203.5h2.5v4.7h-2.5zM559 203.5h2.5v4.7h-2.5zM562.5 203.5h2.5v4.7h-2.5zM566.1 203.5h2.5v4.7h-2.5zM569.6 203.5h2.5v4.7h-2.5zM573.1 203.5h2.5v4.7h-2.5zM576.6 203.5h2.5v4.7h-2.5zM580 203.5h2.5v4.7h-2.5zM583.5 203.5h2.5v4.7h-2.5zM587 203.5h2.5v4.7h-2.5zM590.5 203.5h2.5v4.7h-2.5zM593.9 203.5h2.5v4.7h-2.5zM530.6 209.2h4.6v2.5h-4.6zM530.6 212.7h4.6v2.5h-4.6zM530.6 216.2h4.6v2.5h-4.6zM530.6 219.6h4.6v2.4h-4.6zM530.6 223.1h4.6v2.4h-4.6zM530.6 226.5h4.6v2.4h-4.6zM536.2 209.2h2.5v4.4h-2.5zM539.7 209.2h2.5v4.4h-2.5zM543.1 209.2h2.5v4.4h-2.5zM546.6 209.2h2.5v4.4h-2.5zM550 209.2h2.4v4.4h-2.4zM553.5 209.2h2.4v4.4h-2.4zM556.9 209.2h2.4v4.4h-2.4zM560.4 209.2h2.4v4.4h-2.4zM563.8 209.2h2.4v4.4h-2.4zM567.2 209.2h2.4v4.4h-2.4zM570.6 209.2h2.4v4.4h-2.4zM574 209.2h2.4v4.4h-2.4zM577.4 209.2h2.4v4.4h-2.4zM580.7 209.2h2.4v4.4h-2.4zM584.1 209.2h2.3v4.4h-2.3zM587.4 209.2h2.3v4.4h-2.3zM590.8 209.2h2.3v4.4h-2.3zM594.1 209.2h2.3v4.4h-2.3zM536.2 214.6h4.3v2.4h-4.3zM536.2 217.9h4.3v2.4h-4.3zM536.2 221.3h4.3v2.4h-4.3zM536.2 224.6h4.3v2.4h-4.3zM541.5 214.6h2.3v4.1h-2.3zM544.8 214.6h2.3v4.1h-2.3zM548.2 214.6h2.3v4.1h-2.3zM551.5 214.6h2.3v4.1h-2.3zM554.8 214.6h2.3v4.1h-2.3zM558.1 214.6h2.3v4.1h-2.3zM561.5 214.6h2.3v4.1h-2.3zM564.8 214.6h2.3v4.1h-2.3zM568.1 214.6h2.3v4.1h-2.3zM571.4 214.6h2.3v4.1h-2.3zM574.7 214.6h2.3v4.1h-2.3zM578 214.6h2.3v4.1h-2.3zM581.2 214.6h2.3v4.1h-2.3zM584.5 214.6h2.2v4.1h-2.2zM587.7 214.6h2.2v4.1h-2.2zM591 214.6h2.2v4.1h-2.2zM594.2 214.6h2.2v4.1h-2.2zM541.5 219.6h4v2.3h-4zM541.5 222.9h4v2.3h-4zM541.5 226.2h4v2.3h-4zM546.5 219.6h2.1v4.1h-2.1zM549.5 219.6h2.1v4.1h-2.1zM552.6 219.6h2.1v4.1h-2.1zM555.7 219.6h2.1v4.1h-2.1zM558.7 219.6h2v4.1h-2zM561.7 219.6h2v4.1h-2zM564.8 219.6h2v4.1h-2zM567.8 219.6h2v4.1h-2zM570.9 219.6h2v4.1h-2zM573.8 219.6h2v4.1h-2zM576.8 219.6h2v4.1h-2zM579.8 219.6h1.9v4.1h-1.9zM582.7 219.6h1.9v4.1h-1.9zM585.6 219.6h1.9v4.1h-1.9zM588.6 219.6h1.9v4.1h-1.9zM591.5 219.6h1.9v4.1h-1.9zM594.5 219.6h1.9v4.1h-1.9zM546.5 224.7h3.7v2.1h-3.7zM546.5 227.8h3.7v2.1h-3.7zM551.2 224.7h3.8v2h-3.8zM551.2 227.6h3.8v1.9h-3.8zM556 224.7h2v3.5h-2zM559 224.7h2v3.5h-2zM562 224.7h2v3.5h-2zM564.9 224.7h2v3.5h-2zM567.9 224.7h2v3.5h-2zM570.9 224.7h2v3.5h-2zM573.9 224.7h2v3.5h-2zM576.8 224.7h2v3.5h-2zM579.8 224.7h2v3.5h-2zM582.7 224.7h1.9v3.5h-1.9zM585.7 224.7h1.9v3.5h-1.9zM588.6 224.7h1.9v3.5h-1.9zM591.5 224.7h1.9v3.5h-1.9zM594.5 224.7h1.9v3.5h-1.9z"/><path fill="#f7b6d2" d="M340.3 272.5h14.4v9.3h-14.4zM340.3 282.8h14.4v9.3h-14.4zM340.3 293h14.4v9.2h-14.4zM340.3 303.2h14.4v8.9h-14.4zM340.3 313.1h14.4v8.9h-14.4zM340.3 323h14.4v8.8h-14.4zM340.3 332.8h14.4v8.8h-14.4zM340.3 342.5h14.4v8.7h-14.4zM340.3 352.3h14.4v8.6h-14.4zM340.3 361.9h14.4v8.4h-14.4zM340.3 371.3h14.4v8.1h-14.4zM340.3 380.4h14.4v7.5h-14.4zM340.3 388.9h14.4v7.4h-14.4zM340.3 397.3h14.4v7.4h-14.4zM340.3 405.8h14.4v7.3h-14.4zM340.3 414.1h14.4v7.2h-14.4zM355.7 272.5h12.5v8.2h-12.5zM355.7 281.7h12.5v8h-12.5zM355.7 290.7h12.5v7.6h-12.5zM355.7 299.3h12.5v7.5h-12.5zM355.7 307.8h12.5v7.4h-12.5zM355.7 316.2h12.5v7.3h-12.5zM355.7 324.4h12.5v7.2h-12.5zM355.7 332.6h12.5v7.1h-12.5zM355.7 340.7h12.5v6.9h-12.5zM355.7 348.6h12.5v6.9h-12.5zM355.7 356.5h12.5v6.8h-12.5zM355.7 364.3h12.5v6.8h-12.5zM355.7 372.2h12.5v6.5h-12.5zM355.7 379.7h12.5v6.4h-12.5zM355.7 387h12.5v6.3h-12.5zM355.7 394.4h12.5v6.1h-12.5zM355.7 401.5h12.5v6h-12.5zM355.7 408.5h12.5v6h-12.5zM355.7 415.4h12.5v5.9h-12.5zM369.1 272.5h10.7v6.9h-10.7zM369.1 280.4h10.7v6.8h-10.7zM369.1 288.2h10.7v6.8h-10.7zM369.1 296.1h10.7v6.8h-10.7zM369.1 303.8h10.7v6.7h-10.7zM369.1 311.5h10.7v6.4h-10.7zM369.1 318.9h10.7v6.4h-10.7zM369.1 326.3h10.7v6.3h-10.7zM369.1 333.6h10.7v6.2h-10.7zM369.1 340.7h10.7v6.2h-10.7zM369.1 347.9h10.7v6.1h-10.7zM369.1 355h10.7v6.1h-10.7zM369.1 362.1h10.7v5.9h-10.7zM369.1 369h10.7v5.9h-10.7zM369.1 375.9h10.7v5.8h-10.7zM369.1 382.7h10.7v5.7h-10.7zM369.1 389.4h10.7v5.7h-10.7zM369.1 396.1h10.7v5.6h-10.7zM369.1 402.7h10.7v5.5h-10.7zM369.1 409.3h10.7v5.5h-10.7zM369.1 415.8h10.7v5.5h-10.7zM380.9 272.5h9.6v6.1h-9.6zM380.9 279.6h9.6v6.1h-9.6zM380.9 286.7h9.6v6.1h-9.6zM380.9 293.8h9.6v6h-9.6zM380.9 300.8h9.6v6h-9.6zM380.9 307.8h9.6v6h-9.6zM380.9 314.8h9.6v6h-9.6zM380.9 321.8h9.6v5.9h-9.6zM380.9 328.7h9.6v5.9h-9.6zM380.9 335.6h9.6v5.8h-9.6zM380.9 342.4h9.6v5.8h-9.6zM380.9 349.2h9.6v5.8h-9.6zM380.9 356h9.6v5.8h-9.6zM380.9 362.8h9.6v5.7h-9.6zM380.9 369.5h9.6v5.7h-9.6zM380.9 376.2h9.6v5.7h-9.6zM380.9 382.9h9.6v5.6h-9.6zM380.9 389.5h9.6v5.6h-9.6zM380.9 396.1h9.6v5.6h-9.6zM380.9 402.7h9.6v5.6h-9.6zM380.9 409.3h9.6v5.5h-9.6zM380.9 415.8h9.6v5.5h-9.6zM391.5 272.5h9.3v5.7h-9.3zM391.5 279.2h9.3v5.7h-9.3zM391.5 285.9h9.3v5.6h-9.3zM391.5 292.5h9.3v5.6h-9.3zM391.5 299.2h9.3v5.6h-9.3zM391.5 305.8h9.3v5.6h-9.3zM391.5 312.4h9.3v5.6h-9.3zM391.5 319h9.3v5.6h-9.3zM391.5 325.6h9.3v5.6h-9.3zM391.5 332.2h9.3v5.6h-9.3zM391.5 338.8h9.3v5.6h-9.3zM391.5 345.3h9.3v5.5h-9.3zM391.5 351.8h9.3v5.5h-9.3zM391.5 358.3h9.3v5.5h-9.3zM391.5 364.8h9.3v5.5h-9.3zM391.5 371.3h9.3v5.4h-9.3zM391.5 377.7h9.3v5.4h-9.3zM391.5 384.1h9.3v5.4h-9.3zM391.5 390.6h9.3v5.4h-9.3zM391.5 397h9.3v5.4h-9.3zM391.5 403.3h9.3v5.3h-9.3zM391.5 409.7h9.3v5.3h-9.3zM391.5 416h9.3v5.3h-9.3zM401.8 272.5h9.1v5.4h-9.1zM401.8 278.9h9.1v5.4h-9.1zM401.8 285.3h9.1v5.4h-9.1zM401.8 291.6h9.1v5.3h-9.1zM401.8 298h9.1v5.3h-9.1zM401.8 304.3h9.1v5.3h-9.1zM401.8 310.6h9.1v5.3h-9.1zM401.8 316.9h9.1v5.3h-9.1zM401.8 323.2h9.1v5.3h-9.1zM401.8 329.5h9.1v5.3h-9.1zM401.8 335.7h9.1v5.2h-9.1zM401.8 342h9.1v5.2h-9.1zM401.8 348.2h9.1v5.2h-9.1zM401.8 354.4h9.1v5.2h-9.1zM401.8 360.7h9.1v5.2h-9.1zM401.8 366.9h9.1v5.2h-9.1zM401.8 373.1h9.1v5.2h-9.1zM401.8 379.3h9.1v5.2h-9.1zM401.8 385.5h9.1v5.2h-9.1zM401.8 391.7h9.1v5.2h-9.1zM401.8 397.8h9.1v5.2h-9.1zM401.8 404h9.1v5.1h-9.1zM401.8 410.1h9.1v5.1h-9.1zM401.8 416.3h9.1v5h-9.1zM411.9 272.5h9.1v5.1h-9.1zM411.9 278.6h9.1v5.1h-9.1zM411.9 284.7h9.1v5.1h-9.1zM411.9 290.8h9.1v5.1h-9.1zM411.9 296.8h9.1v5.1h-9.1zM411.9 302.9h9.1v5.1h-9.1zM411.9 308.9h9.1v5h-9.1zM411.9 315h9.1v5h-9.1zM411.9 321h9.1v5h-9.1zM411.9 327.1h9.1v5h-9.1zM411.9 333.1h9.1v5h-9.1zM411.9 339.1h9.1v5h-9.1zM411.9 345.1h9.1v5h-9.1zM411.9 351.1h9.1v5h-9.1zM411.9 357.1h9.1v5h-9.1zM411.9 363.1h9.1v5h-9.1zM411.9 369.1h9.1v5h-9.1zM411.9 375h9.1v4.9h-9.1zM411.9 381h9.1v4.9h-9.1zM411.9 386.9h9.1v4.9h-9.1zM411.9 392.8h9.1v4.9h-9.1zM411.9 398.7h9.1v4.9h-9.1zM411.9 404.6h9.1v4.9h-9.1zM411.9 410.5h9.1v4.9h-9.1zM411.9 416.4h9.1v4.9h-9.1zM422 272.5h8.7v5.1h-8.7zM422 278.6h8.7v5.1h-8.7zM422 284.6h8.7v5.1h-8.7zM422 290.7h8.7v5.1h-8.7zM422 296.8h8.7v5.1h-8.7zM422 302.8h8.7v5.1h-8.7zM422 308.9h8.7v5h-8.7zM422 314.9h8.7v5h-8.7zM422 320.9h8.7v5h-8.7zM422 327h8.7v5h-8.7zM422 333h8.7v5h-8.7zM422 339h8.7v5h-8.7zM422 345.1h8.7v5h-8.7zM422 351.1h8.7v5h-8.7zM422 357.1h8.7v5h-8.7zM422 363h8.7v5h-8.7zM422 369h8.7v5h-8.7zM422 375h8.7v5h-8.7zM422 380.9h8.7v4.9h-8.7zM422 386.9h8.7v4.9h-8.7zM422 392.8h8.7v4.9h-8.7zM422 398.7h8.7v4.9h-8.7zM422 404.6h8.7v4.9h-8.7zM422 410.5h8.7v4.9h-8.7zM422 416.4h8.7v4.9h-8.7zM431.7 272.5h8.7v4.9h-8.7zM431.7 278.4h8.7v4.9h-8.7zM431.7 284.3h8.7v4.9h-8.7zM431.7 290.2h8.7v4.9h-8.7zM431.7 296.1h8.7v4.9h-8.7zM431.7 302h8.7v4.8h-8.7zM431.7 307.8h8.7v4.8h-8.7zM431.7 313.6h8.7v4.8h-8.7zM431.7 319.4h8.7v4.8h-8.7zM431.7 325.2h8.7v4.8h-8.7zM431.7 331h8.7v4.8h-8.7zM431.7 336.8h8.7v4.8h-8.7zM431.7 342.5h8.7v4.8h-8.7zM431.7 348.3h8.7v4.8h-8.7zM431.7 354.1h8.7v4.7h-8.7zM431.7 359.8h8.7v4.7h-8.7zM431.7 365.5h8.7v4.7h-8.7zM431.7 371.2h8.7v4.7h-8.7zM431.7 376.9h8.7v4.7h-8.7zM431.7 382.6h8.7v4.7h-8.7zM431.7 388.3h8.7v4.7h-8.7zM431.7 394h8.7v4.7h-8.7zM431.7 399.6h8.7v4.7h-8.7zM431.7 405.3h8.7v4.7h-8.7zM431.7 411h8.7v4.7h-8.7zM431.7 416.6h8.7v4.7h-8.7zM441.4 272.5h8.2v4.9h-8.2zM441.4 278.4h8.2v4.9h-8.2zM441.4 284.3h8.2v4.9h-8.2zM441.4 290.2h8.2v4.9h-8.2zM441.4 296.1h8.2v4.9h-8.2zM441.4 302h8.2v4.9h-8.2zM441.4 307.8h8.2v4.8h-8.2zM441.4 313.7h8.2v4.8h-8.2zM441.4 319.5h8.2v4.8h-8.2zM441.4 325.3h8.2v4.8h-8.2zM441.4 331.1h8.2v4.8h-8.2zM441.4 336.9h8.2v4.8h-8.2zM441.4 342.6h8.2v4.8h-8.2zM441.4 348.4h8.2v4.7h-8.2zM441.4 354.1h8.2v4.7h-8.2zM441.4 359.8h8.2v4.7h-8.2zM441.4 365.6h8.2v4.7h-8.2zM441.4 371.3h8.2v4.7h-8.2zM441.4 377h8.2v4.7h-8.2zM441.4 382.7h8.2v4.7h-8.2zM441.4 388.4h8.2v4.7h-8.2zM441.4 394h8.2v4.7h-8.2zM441.4 399.7h8.2v4.7h-8.2zM441.4 405.4h8.2v4.7h-8.2zM441.4 411h8.2v4.6h-8.2zM441.4 416.7h8.2v4.6h-8.2zM450.6 272.5h4.8v8h-4.8zM456.3 272.5h4.7v8h-4.7zM462.1 272.5h4.7v8h-4.7zM467.8 272.5h4.7v8h-4.7zM473.6 272.5h4.7v8h-4.7zM450.6 281.5h8v4.6h-8zM450.6 287.1h8v4.5h-8zM450.6 292.6h8v4.5h-8zM450.6 298.1h8v4.5h-8zM450.6 303.7h8v4.5h-8zM450.6 309.2h8v4.5h-8zM450.6 314.7h8v4.5h-8zM450.6 320.2h8v4.5h-8zM450.6 325.6h8v4.5h-8zM450.6 331.1h8v4.5h-8zM450.6 336.6h8v4.5h-8zM450.6 342h8v4.4h-8zM450.6 347.4h8v4.4h-8zM450.6 352.8h8v4.4h-8zM450.6 358.2h8v4.4h-8zM450.6 363.6h8v4.4h-8zM450.6 368.9h8v4.4h-8zM450.6 374.3h8v4.4h-8zM450.6 379.7h8v4.4h-8zM450.6 385h8v4.3h-8zM450.6 390.4h8v4.3h-8zM450.6 395.7h8v4.3h-8zM450.6 401h8v4.3h-8zM450.6 406.4h8v4.3h-8zM450.6 411.7h8v4.3h-8zM450.6 417h8v4.3h-8zM459.6 281.5h4.4v7.8h-4.4zM465 281.5h4.4v7.8h-4.4zM470.4 281.5h4.4v7.8h-4.4zM475.8 281.5h4.4v7.8h-4.4zM459.6 290.3h7.4v4.4h-7.4zM459.6 295.7h7.4v4.4h-7.4zM459.6 301.1h7.4v4.4h-7.4zM459.6 306.5h7.4v4.4h-7.4zM459.6 311.9h7.4v4.4h-7.4zM459.6 317.3h7.4v4.3h-7.4zM459.6 322.6h7.4v4.3h-7.4zM459.6 327.9h7.4v4.3h-7.4zM459.6 333.2h7.4v4.3h-7.4zM459.6 338.6h7.4v4.3h-7.4zM459.6 343.9h7.4v4.3h-7.4zM459.6 349.2h7.4v4.3h-7.4zM459.6 354.5h7.4v4.3h-7.4zM459.6 359.7h7.4v4.3h-7.4zM459.6 365h7.4v4.3h-7.4zM459.6 370.3h7.4v4.2h-7.4zM459.6 375.5h7.4v4.2h-7.4zM459.6 380.8h7.4v4.2h-7.4zM459.6 386h7.4v4.2h-7.4zM459.6 391.2h7.4v4.2h-7.4zM459.6 396.4h7.4v4.2h-7.4zM459.6 401.6h7.4v4.2h-7.4zM459.6 406.8h7.4v4.2h-7.4zM459.6 412h7.4v4.2h-7.4zM459.6 417.1h7.4v4.2h-7.4zM468 290.3h4.2v7.3h-4.2zM473.2 290.3h4.2v7.3h-4.2zM468 298.6h7v4.2h-7zM468 303.8h7v4.2h-7zM468 309h7v4.2h-7zM468 314.3h7v4.2h-7zM468 319.5h7v4.2h-7zM468 324.7h7v4.2h-7zM468 329.9h7v4.2h-7zM468 335.1h7v4.2h-7zM468 340.2h7v4.2h-7zM468 345.4h7v4.2h-7zM468 350.6h7v4.2h-7zM468 355.8h7v4.1h-7zM468 360.9h7v4.1h-7zM468 366.1h7v4.1h-7zM468 371.2h7v4.1h-7zM468 376.4h7v4.1h-7zM468 381.5h7v4.1h-7zM468 386.6h7v4.1h-7zM468 391.7h7v4.1h-7zM468 396.8h7v4.1h-7zM468 402h7v4.1h-7zM468 407.1h7v4.1h-7zM468 412.1h7v4.1h-7zM468 417.2h7v4.1h-7zM476 298.6h4.1v6.9h-4.1zM476 306.5h7v3.9h-7zM476 311.5h7v3.9h-7zM476 316.4h7v3.9h-7zM476 321.3h7v3.9h-7zM476 326.2h7v3.9h-7zM476 331.1h7v3.9h-7zM476 335.9h7v3.9h-7zM476 340.8h7v3.9h-7zM476 345.7h7v3.9h-7zM476 350.6h7v3.9h-7zM476 355.4h7v3.9h-7zM476 360.3h7v3.9h-7zM476 365.2h7v3.8h-7zM476 370h7v3.8h-7zM476 374.8h7v3.8h-7zM476 379.6h7v3.8h-7zM476 384.4h7v3.8h-7zM476 389.1h7v3.8h-7zM476 393.9h7v3.8h-7zM476 398.7h7v3.7h-7zM476 403.4h7v3.7h-7zM476 408.1h7v3.7h-7zM476 412.9h7v3.7h-7zM476 417.6h7v3.7h-7z"/><path fill="#98df8a" d="M340.3 424h13.5v9.4h-13.5zM340.3 434.4h13.5v9h-13.5zM340.3 444.3h13.5v8.9h-13.5zM340.3 454.2h13.5v8.8h-13.5zM340.3 464h13.5v8.6h-13.5zM340.3 473.6h13.5v8.3h-13.5zM340.3 482.9h13.5v8.1h-13.5zM340.3 492h13.5v8.1h-13.5zM340.3 501.1h13.5v8h-13.5zM340.3 510.1h13.5v7.9h-13.5zM340.3 519h13.5v7.8h-13.5zM354.8 424h12.1v8.5h-12.1zM354.8 433.5h12.1v8.3h-12.1zM354.8 442.8h12.1v7.7h-12.1zM354.8 451.6h12.1v7.5h-12.1zM354.8 460h12.1v7.3h-12.1zM354.8 468.4h12.1v7.3h-12.1zM354.8 476.7h12.1v7.1h-12.1zM354.8 484.7h12.1v6.6h-12.1zM354.8 492.3h12.1v6.5h-12.1zM354.8 499.8h12.1v6.3h-12.1zM354.8 507.1h12.1v6.1h-12.1zM354.8 514.2h12.1v5.8h-12.1zM354.8 521h12.1v5.8h-12.1zM368 424h10.2v6.9h-10.2zM368 431.9h10.2v6.4h-10.2zM368 439.4h10.2v6.3h-10.2zM368 446.6h10.2v6.2h-10.2zM368 453.8h10.2v5.9h-10.2zM368 460.7h10.2v5.9h-10.2zM368 467.5h10.2v5.9h-10.2zM368 474.4h10.2v5.8h-10.2zM368 481.2h10.2v5.7h-10.2zM368 487.9h10.2v5.7h-10.2zM368 494.7h10.2v5.7h-10.2zM368 501.3h10.2v5.6h-10.2zM368 508h10.2v5.6h-10.2zM368 514.6h10.2v5.6h-10.2zM368 521.2h10.2v5.6h-10.2zM379.2 424h10v5.7h-10zM379.2 430.7h10v5.7h-10zM379.2 437.4h10v5.7h-10zM379.2 444.1h10v5.7h-10zM379.2 450.8h10v5.6h-10zM379.2 457.5h10v5.5h-10zM379.2 464h10v5.5h-10zM379.2 470.5h10v5.5h-10zM379.2 476.9h10v5.4h-10zM379.2 483.4h10v5.4h-10zM379.2 489.8h10v5.4h-10zM379.2 496.2h10v5.4h-10zM379.2 502.6h10v5.4h-10zM379.2 508.9h10v5.3h-10zM379.2 515.3h10v5.3h-10zM379.2 521.5h10v5.3h-10zM390.2 424h9.3v5.7h-9.3zM390.2 430.7h9.3v5.6h-9.3zM390.2 437.3h9.3v5.6h-9.3zM390.2 443.9h9.3v5.6h-9.3zM390.2 450.5h9.3v5.6h-9.3zM390.2 457.1h9.3v5.6h-9.3zM390.2 463.7h9.3v5.5h-9.3zM390.2 470.2h9.3v5.5h-9.3zM390.2 476.7h9.3v5.5h-9.3zM390.2 483.2h9.3v5.5h-9.3zM390.2 489.7h9.3v5.4h-9.3zM390.2 496.1h9.3v5.4h-9.3zM390.2 502.5h9.3v5.4h-9.3zM390.2 508.9h9.3v5.3h-9.3zM390.2 515.2h9.3v5.3h-9.3zM390.2 521.5h9.3v5.3h-9.3zM400.5 424h9.3v5.3h-9.3zM400.5 430.3h9.3v5.3h-9.3zM400.5 436.6h9.3v5.3h-9.3zM400.5 442.9h9.3v5.2h-9.3zM400.5 449.2h9.3v5.2h-9.3zM400.5 455.4h9.3v5.2h-9.3zM400.5 461.6h9.3v5.1h-9.3zM400.5 467.7h9.3v5.1h-9.3zM400.5 473.9h9.3v5.1h-9.3zM400.5 479.9h9.3v5.1h-9.3zM400.5 486h9.3v5.1h-9.3zM400.5 492.1h9.3v5h-9.3zM400.5 498.1h9.3v5h-9.3zM400.5 504.1h9.3v5h-9.3zM400.5 510.1h9.3v4.9h-9.3zM400.5 516h9.3v4.9h-9.3zM400.5 521.9h9.3v4.9h-9.3zM410.8 424h8.7v5.3h-8.7zM410.8 430.3h8.7v5.2h-8.7zM410.8 436.5h8.7v5.2h-8.7zM410.8 442.7h8.7v5.1h-8.7zM410.8 448.9h8.7v5.1h-8.7zM410.8 455h8.7v5.1h-8.7zM410.8 461.2h8.7v5.1h-8.7zM410.8 467.3h8.7v5.1h-8.7zM410.8 473.4h8.7v5.1h-8.7zM410.8 479.5h8.7v5.1h-8.7zM410.8 485.6h8.7v5.1h-8.7zM410.8 491.7h8.7v5.1h-8.7zM410.8 497.8h8.7v5h-8.7zM410.8 503.8h8.7v5h-8.7zM410.8 509.8h8.7v5h-8.7zM410.8 515.8h8.7v5h-8.7zM410.8 521.8h8.7v5h-8.7zM420.4 424h8.3v5.2h-8.3zM420.4 430.2h8.3v5.2h-8.3zM420.4 436.4h8.3v5.2h-8.3zM420.4 442.6h8.3v5.2h-8.3zM420.4 448.8h8.3v5.2h-8.3zM420.4 454.9h8.3v5.2h-8.3zM420.4 461.1h8.3v5.2h-8.3zM420.4 467.2h8.3v5.2h-8.3zM420.4 473.4h8.3v5.1h-8.3zM420.4 479.5h8.3v5.1h-8.3zM420.4 485.6h8.3v5.1h-8.3zM420.4 491.7h8.3v5.1h-8.3zM420.4 497.7h8.3v5h-8.3zM420.4 503.8h8.3v5h-8.3zM420.4 509.8h8.3v5h-8.3zM420.4 515.8h8.3v5h-8.3zM420.4 521.8h8.3v5h-8.3zM429.8 424h8.5v4.9h-8.5zM429.8 429.9h8.5v4.9h-8.5zM429.8 435.7h8.5v4.8h-8.5zM429.8 441.6h8.5v4.8h-8.5zM429.8 447.4h8.5v4.8h-8.5zM429.8 453.2h8.5v4.8h-8.5zM429.8 459h8.5v4.8h-8.5zM429.8 464.8h8.5v4.8h-8.5zM429.8 470.6h8.5v4.8h-8.5zM429.8 476.4h8.5v4.8h-8.5zM429.8 482.1h8.5v4.7h-8.5zM429.8 487.9h8.5v4.7h-8.5zM429.8 493.6h8.5v4.7h-8.5zM429.8 499.3h8.5v4.7h-8.5zM429.8 505h8.5v4.7h-8.5zM429.8 510.7h8.5v4.7h-8.5zM429.8 516.4h8.5v4.7h-8.5zM429.8 522.1h8.5v4.7h-8.5zM439.2 424h8.1v4.9h-8.1zM439.2 429.9h8.1v4.9h-8.1zM439.2 435.7h8.1v4.8h-8.1zM439.2 441.6h8.1v4.8h-8.1zM439.2 447.4h8.1v4.8h-8.1zM439.2 453.2h8.1v4.8h-8.1zM439.2 459h8.1v4.8h-8.1zM439.2 464.8h8.1v4.8h-8.1zM439.2 470.6h8.1v4.8h-8.1zM439.2 476.4h8.1v4.8h-8.1zM439.2 482.2h8.1v4.8h-8.1zM439.2 488h8.1v4.7h-8.1zM439.2 493.7h8.1v4.7h-8.1zM439.2 499.4h8.1v4.7h-8.1zM439.2 505.1h8.1v4.7h-8.1zM439.2 510.8h8.1v4.7h-8.1zM439.2 516.5h8.1v4.7h-8.1zM439.2 522.2h8.1v4.6h-8.1zM448.3 424h8.2v4.6h-8.2zM448.3 429.6h8.2v4.6h-8.2zM448.3 435.2h8.2v4.6h-8.2zM448.3 440.7h8.2v4.6h-8.2zM448.3 446.3h8.2v4.6h-8.2zM448.3 451.8h8.2v4.5h-8.2zM448.3 457.4h8.2v4.5h-8.2zM448.3 462.9h8.2v4.5h-8.2zM448.3 468.4h8.2v4.5h-8.2zM448.3 473.9h8.2v4.4h-8.2zM448.3 479.4h8.2v4.4h-8.2zM448.3 484.8h8.2v4.4h-8.2zM448.3 490.2h8.2v4.4h-8.2zM448.3 495.6h8.2v4.4h-8.2zM448.3 501h8.2v4.4h-8.2zM448.3 506.4h8.2v4.4h-8.2zM448.3 511.8h8.2v4.4h-8.2zM448.3 517.1h8.2v4.3h-8.2zM448.3 522.5h8.2v4.3h-8.2zM457.5 424h7.7v4.6h-7.7zM457.5 429.6h7.7v4.6h-7.7zM457.5 435.2h7.7v4.6h-7.7zM457.5 440.7h7.7v4.5h-7.7zM457.5 446.2h7.7v4.5h-7.7zM457.5 451.8h7.7v4.5h-7.7zM457.5 457.3h7.7v4.5h-7.7zM457.5 462.8h7.7v4.5h-7.7zM457.5 468.3h7.7v4.5h-7.7zM457.5 473.8h7.7v4.5h-7.7zM457.5 479.3h7.7v4.5h-7.7zM457.5 484.7h7.7v4.4h-7.7zM457.5 490.2h7.7v4.4h-7.7zM457.5 495.6h7.7v4.4h-7.7zM457.5 501h7.7v4.4h-7.7zM457.5 506.4h7.7v4.4h-7.7zM457.5 511.7h7.7v4.4h-7.7zM457.5 517.1h7.7v4.4h-7.7zM457.5 522.5h7.7v4.3h-7.7zM466.1 424h7.7v4.3h-7.7zM466.1 429.3h7.7v4.3h-7.7zM466.1 434.6h7.7v4.3h-7.7zM466.1 439.9h7.7v4.3h-7.7zM466.1 445.1h7.7v4.3h-7.7zM466.1 450.4h7.7v4.2h-7.7zM466.1 455.6h7.7v4.2h-7.7zM466.1 460.8h7.7v4.2h-7.7zM466.1 466.1h7.7v4.2h-7.7zM466.1 471.3h7.7v4.2h-7.7zM466.1 476.5h7.7v4.2h-7.7zM466.1 481.7h7.7v4.2h-7.7zM466.1 486.8h7.7v4.2h-7.7zM466.1 492h7.7v4.1h-7.7zM466.1 497.1h7.7v4.1h-7.7zM466.1 502.3h7.7v4.1h-7.7zM466.1 507.4h7.7v4.1h-7.7zM466.1 512.5h7.7v4.1h-7.7zM466.1 517.6h7.7v4.1h-7.7zM466.1 522.7h7.7v4.1h-7.7zM474.9 424h7.4v4.3h-7.4zM474.9 429.3h7.4v4.3h-7.4zM474.9 434.6h7.4v4.3h-7.4zM474.9 439.9h7.4v4.3h-7.4zM474.9 445.1h7.4v4.3h-7.4zM474.9 450.4h7.4v4.2h-7.4zM474.9 455.6h7.4v4.2h-7.4zM474.9 460.8h7.4v4.2h-7.4zM474.9 466.1h7.4v4.2h-7.4zM474.9 471.3h7.4v4.2h-7.4zM474.9 476.5h7.4v4.2h-7.4zM474.9 481.7h7.4v4.2h-7.4zM474.9 486.8h7.4v4.2h-7.4zM474.9 492h7.4v4.2h-7.4zM474.9 497.1h7.4v4.1h-7.4zM474.9 502.3h7.4v4.1h-7.4zM474.9 507.4h7.4v4.1h-7.4zM474.9 512.5h7.4v4.1h-7.4zM474.9 517.6h7.4v4.1h-7.4zM474.9 522.7h7.4v4.1h-7.4zM483.3 471.1h7.1v4.2h-7.1zM483.3 476.3h7.1v4.2h-7.1zM483.3 481.5h7.1v4.2h-7.1zM483.3 486.7h7.1v4.2h-7.1zM483.3 491.8h7.1v4.2h-7.1zM483.3 497h7.1v4.2h-7.1zM483.3 502.2h7.1v4.1h-7.1zM483.3 507.3h7.1v4.1h-7.1zM483.3 512.5h7.1v4.1h-7.1zM483.3 517.6h7.1v4.1h-7.1zM483.3 522.7h7.1v4.1h-7.1zM491.3 469.2h7.1v4h-7.1zM491.3 474.2h7.1v4h-7.1zM491.3 479.2h7.1v3.9h-7.1zM491.3 484.1h7.1v3.9h-7.1zM491.3 489h7.1v3.9h-7.1zM491.3 493.9h7.1v3.9h-7.1zM491.3 498.8h7.1v3.9h-7.1zM491.3 503.7h7.1v3.9h-7.1zM491.3 508.6h7.1v3.8h-7.1zM491.3 513.4h7.1v3.8h-7.1zM491.3 518.2h7.1v3.8h-7.1zM491.3 523h7.1v3.8h-7.1zM499.4 470.7h6.5v3.8h-6.5zM499.4 475.5h6.5v3.8h-6.5zM499.4 480.3h6.5v3.8h-6.5zM499.4 485.1h6.5v3.8h-6.5zM499.4 489.9h6.5v3.8h-6.5zM499.4 494.6h6.5v3.8h-6.5zM499.4 499.4h6.5v3.8h-6.5zM499.4 504.2h6.5v3.8h-6.5zM499.4 508.9h6.5v3.7h-6.5zM499.4 513.7h6.5v3.7h-6.5zM499.4 518.4h6.5v3.7h-6.5zM499.4 523.1h6.5v3.7h-6.5zM506.9 470.8h6.4v3.4h-6.4zM506.9 475.2h6.4v3.4h-6.4zM506.9 479.6h6.4v3.4h-6.4zM506.9 484h6.4v3.4h-6.4zM506.9 488.5h6.4v3.4h-6.4zM506.9 492.8h6.4v3.4h-6.4zM506.9 497.2h6.4v3.4h-6.4zM506.9 501.6h6.4v3.4h-6.4zM506.9 506h6.4v3.4h-6.4zM506.9 510.4h6.4v3.4h-6.4zM506.9 514.7h6.4v3.4h-6.4zM506.9 519.1h6.4v3.4h-6.4zM506.9 523.5h6.4v3.3h-6.4zM514.3 468.4h5.9v3.3h-5.9zM514.3 472.7h5.9v3.3h-5.9zM514.3 477h5.9v3.3h-5.9zM514.3 481.4h5.9v3.3h-5.9zM514.3 485.7h5.9v3.3h-5.9zM514.3 489.9h5.9v3.3h-5.9zM514.3 494.2h5.9v3.2h-5.9zM514.3 498.5h5.9v3.2h-5.9zM514.3 502.7h5.9v3.2h-5.9zM514.3 506.9h5.9v3.2h-5.9zM514.3 511.1h5.9v3.2h-5.9zM514.3 515.3h5.9v3.2h-5.9zM514.3 519.5h5.9v3.2h-5.9zM514.3 523.6h5.9v3.2h-5.9zM521.2 469.2h5.6v3h-5.6zM521.2 473.2h5.6v3h-5.6zM521.2 477.2h5.6v3h-5.6zM521.2 481.2h5.6v2.9h-5.6zM521.2 485.1h5.6v2.9h-5.6zM521.2 489h5.6v2.9h-5.6zM521.2 492.9h5.6v2.9h-5.6zM521.2 496.8h5.6v2.9h-5.6zM521.2 500.7h5.6v2.9h-5.6zM521.2 504.6h5.6v2.9h-5.6zM521.2 508.5h5.6v2.9h-5.6zM521.2 512.4h5.6v2.9h-5.6zM521.2 516.3h5.6v2.9h-5.6zM521.2 520.1h5.6v2.9h-5.6zM521.2 524h5.6v2.8h-5.6zM527.8 471.2h5.2v2.9h-5.2zM527.8 475.1h5.2v2.8h-5.2zM527.8 478.9h5.2v2.8h-5.2zM527.8 482.7h5.2v2.8h-5.2zM527.8 486.5h5.2v2.8h-5.2zM527.8 490.3h5.2v2.8h-5.2zM527.8 494.1h5.2v2.8h-5.2zM527.8 497.9h5.2v2.8h-5.2zM527.8 501.6h5.2v2.8h-5.2zM527.8 505.4h5.2v2.8h-5.2zM527.8 509.1h5.2v2.8h-5.2zM527.8 512.9h5.2v2.7h-5.2zM527.8 516.6h5.2v2.7h-5.2zM527.8 520.4h5.2v2.7h-5.2zM527.8 524.1h5.2v2.7h-5.2zM534 469.3h4.9v2.8h-4.9zM534 473h4.9v2.7h-4.9zM534 476.8h4.9v2.7h-4.9zM534 480.5h4.9v2.7h-4.9zM534 484.2h4.9v2.7h-4.9zM534 487.9h4.9v2.7h-4.9zM534 491.6h4.9v2.7h-4.9zM534 495.3h4.9v2.7h-4.9zM534 499h4.9v2.7h-4.9zM534 502.7h4.9v2.7h-4.9zM534 506.3h4.9v2.6h-4.9zM534 510h4.9v2.6h-4.9zM534 513.6h4.9v2.6h-4.9zM534 517.1h4.9v2.6h-4.9zM534 520.7h4.9v2.6h-4.9zM534 524.3h4.9v2.5h-4.9zM539.9 471.2h4.6v2.6h-4.6zM539.9 474.8h4.6v2.6h-4.6zM539.9 478.4h4.6v2.6h-4.6zM539.9 482h4.6v2.6h-4.6zM539.9 485.6h4.6v2.6h-4.6zM539.9 489.2h4.6v2.6h-4.6zM539.9 492.7h4.6v2.6h-4.6zM539.9 496.3h4.6v2.5h-4.6zM539.9 499.8h4.6v2.5h-4.6zM539.9 503.4h4.6v2.5h-4.6zM539.9 506.9h4.6v2.5h-4.6zM539.9 510.4h4.6v2.5h-4.6zM539.9 513.9h4.6v2.5h-4.6zM539.9 517.4h4.6v2.5h-4.6zM539.9 520.9h4.6v2.5h-4.6zM539.9 524.3h4.6v2.5h-4.6zM545.5 471.2h2.6v4.4h-2.6zM549 471.2h2.5v4.4h-2.5zM552.5 471.2h2.5v4.4h-2.5zM556 471.2h2.5v4.4h-2.5zM559.5 471.2h2.5v4.4h-2.5zM563 471.2h2.5v4.4h-2.5zM566.5 471.2h2.5v4.4h-2.5zM570 471.2h2.5v4.4h-2.5zM573.4 471.2h2.5v4.4h-2.5zM576.9 471.2h2.5v4.4h-2.5zM580.3 471.2h2.4v4.4h-2.4zM583.8 471.2h2.4v4.4h-2.4zM587.2 471.2h2.4v4.4h-2.4zM590.6 471.2h2.4v4.4h-2.4zM594 471.2h2.4v4.4h-2.4zM545.5 476.6h4.3v2.5h-4.3zM545.5 480.1h4.3v2.5h-4.3zM545.5 483.6h4.3v2.5h-4.3zM545.5 487.1h4.3v2.5h-4.3zM545.5 490.5h4.3v2.4h-4.3zM545.5 494h4.3v2.4h-4.3zM545.5 497.4h4.3v2.4h-4.3zM545.5 500.8h4.3v2.4h-4.3zM545.5 504.2h4.3v2.4h-4.3zM545.5 507.7h4.3v2.4h-4.3zM545.5 511h4.3v2.4h-4.3zM545.5 514.4h4.3v2.4h-4.3zM545.5 517.8h4.3v2.4h-4.3zM545.5 521.1h4.3v2.3h-4.3zM545.5 524.5h4.3v2.3h-4.3zM550.7 476.6h2.4v4.1h-2.4zM554.2 476.6h2.4v4.1h-2.4zM557.6 476.6h2.4v4.1h-2.4zM561 476.6h2.4v4.1h-2.4zM564.3 476.6h2.4v4.1h-2.4zM567.7 476.6h2.4v4.1h-2.4zM571.1 476.6h2.4v4.1h-2.4zM574.5 476.6h2.3v4.1h-2.3zM577.8 476.6h2.3v4.1h-2.3zM581.1 476.6h2.3v4.1h-2.3zM584.4 476.6h2.3v4.1h-2.3zM587.7 476.6h2.3v4.1h-2.3zM590.9 476.6h2.3v4.1h-2.3zM594.2 476.6h2.2v4.1h-2.2zM550.7 481.7h4.2v2.1h-4.2zM550.7 484.9h4.2v2.1h-4.2zM550.7 488h4.2v2.1h-4.2zM550.7 491.2h4.2v2.1h-4.2zM550.7 494.3h4.2v2.1h-4.2zM550.7 497.4h4.2v2.1h-4.2zM550.7 500.5h4.2v2.1h-4.2zM550.7 503.6h4.2v2.1h-4.2zM550.7 506.7h4.2v2.1h-4.2zM550.7 509.7h4.2v2h-4.2zM550.7 512.8h4.2v2h-4.2zM550.7 515.8h4.2v2h-4.2zM550.7 518.8h4.2v2h-4.2zM550.7 521.8h4.2v2h-4.2zM550.7 524.8h4.2v2h-4.2zM555.9 481.7h2v4.1h-2zM559 481.7h2v4.1h-2zM562 481.7h2v4.1h-2zM565 481.7h2v4.1h-2zM568 481.7h2v4.1h-2zM571 481.7h2v4.1h-2zM574 481.7h2v4.1h-2zM577 481.7h1.9v4.1h-1.9zM579.9 481.7h1.9v4.1h-1.9zM582.9 481.7h1.9v4.1h-1.9zM585.8 481.7h1.9v4.1h-1.9zM588.7 481.7h1.9v4.1h-1.9zM591.6 481.7h1.9v4.1h-1.9zM594.5 481.7h1.9v4.1h-1.9zM555.9 486.9h3.9v2h-3.9zM555.9 489.8h3.9v2h-3.9zM555.9 492.8h3.9v2h-3.9zM555.9 495.8h3.9v2h-3.9zM555.9 498.8h3.9v2h-3.9zM555.9 501.8h3.9v2h-3.9zM555.9 504.7h3.9v2h-3.9zM555.9 507.7h3.9v1.9h-3.9zM555.9 510.6h3.9v1.9h-3.9zM555.9 513.5h3.9v1.9h-3.9zM555.9 516.4h3.9v1.9h-3.9zM555.9 519.2h3.9v1.9h-3.9zM555.9 522.1h3.9v1.9h-3.9zM555.9 525h3.9v1.8h-3.9zM560.9 486.9h1.9v3.8h-1.9zM563.7 486.9h1.9v3.8h-1.9zM566.6 486.9h1.8v3.8h-1.8zM569.5 486.9h1.8v3.8h-1.8zM572.3 486.9h1.8v3.8h-1.8zM575.1 486.9h1.8v3.8h-1.8zM577.9 486.9h1.8v3.8h-1.8zM580.7 486.9h1.8v3.8h-1.8zM583.5 486.9h1.8v3.8h-1.8zM586.3 486.9h1.8v3.8h-1.8zM589.1 486.9h1.8v3.8h-1.8zM591.9 486.9h1.8v3.8h-1.8zM594.6 486.9h1.8v3.8h-1.8zM560.9 491.7h3.6v1.9h-3.6zM560.9 494.5h3.6v1.9h-3.6zM560.9 497.4h3.6v1.9h-3.6zM560.9 500.2h3.6v1.8h-3.6zM560.9 503.1h3.6v1.8h-3.6zM560.9 505.9h3.6v1.8h-3.6zM560.9 508.7h3.6v1.8h-3.6zM560.9 511.5h3.6v1.8h-3.6zM560.9 514.3h3.6v1.7h-3.6zM560.9 517h3.6v1.7h-3.6zM560.9 519.7h3.6v1.7h-3.6zM560.9 522.4h3.6v1.7h-3.6zM560.9 525.1h3.6v1.7h-3.6zM565.5 491.7h1.8v3.5h-1.8zM568.3 491.7h1.7v3.5h-1.7zM571 491.7h1.7v3.5h-1.7zM573.7 491.7h1.7v3.5h-1.7zM576.4 491.7h1.7v3.5h-1.7zM579.1 491.7h1.7v3.5h-1.7zM581.8 491.7h1.7v3.5h-1.7zM584.4 491.7h1.6v3.5h-1.6zM587.1 491.7h1.6v3.5h-1.6zM589.7 491.7h1.6v3.5h-1.6zM592.3 491.7h1.6v3.5h-1.6zM594.8 491.7h1.6v3.5h-1.6zM565.5 496.2h3.3v1.7h-3.3zM565.5 498.9h3.3v1.7h-3.3zM565.5 501.6h3.3v1.7h-3.3zM565.5 504.2h3.3v1.7h-3.3zM565.5 506.9h3.3v1.6h-3.3zM565.5 509.6h3.3v1.6h-3.3zM565.5 512.2h3.3v1.6h-3.3zM565.5 514.8h3.3v1.6h-3.3zM565.5 517.4h3.3v1.6h-3.3zM565.5 520h3.3v1.6h-3.3zM565.5 522.6h3.3v1.6h-3.3zM565.5 525.2h3.3v1.6h-3.3zM569.8 496.2h1.6v3.2h-1.6zM572.3 496.2h1.5v3.2h-1.5zM574.9 496.2h1.5v3.2h-1.5zM577.4 496.2h1.5v3.2h-1.5zM579.9 496.2h1.5v3.2h-1.5zM582.5 496.2h1.5v3.2h-1.5zM585 496.2h1.5v3.2h-1.5zM587.5 496.2h1.5v3.2h-1.5zM590 496.2h1.5v3.2h-1.5zM592.5 496.2h1.5v3.2h-1.5zM595 496.2h1.4v3.2h-1.4zM569.8 500.4h2.9v1.5h-2.9zM569.8 502.9h2.9v1.5h-2.9zM569.8 505.5h2.9v1.5h-2.9zM569.8 508h2.9v1.5h-2.9zM569.8 510.5h2.9v1.5h-2.9zM569.8 513h2.9v1.5h-2.9zM569.8 515.5h2.9v1.5h-2.9zM569.8 518h2.9v1.5h-2.9zM569.8 520.5h2.9v1.5h-2.9zM569.8 522.9h2.9v1.4h-2.9zM569.8 525.4h2.9v1.4h-2.9zM573.7 500.4h1.4v2.9h-1.4zM576.1 500.4h1.4v2.9h-1.4zM578.5 500.4h1.4v2.9h-1.4zM580.9 500.4h1.4v2.9h-1.4zM583.3 500.4h1.4v2.9h-1.4zM585.7 500.4h1.4v2.9h-1.4zM588.1 500.4h1.4v2.9h-1.4zM590.5 500.4h1.3v2.9h-1.3zM592.8 500.4h1.3v2.9h-1.3zM595.1 500.4h1.3v2.9h-1.3zM573.7 504.3h2.7v1.4h-2.7zM573.7 506.7h2.7v1.4h-2.7zM573.7 509.1h2.7v1.4h-2.7zM573.7 511.5h2.7v1.4h-2.7zM573.7 513.9h2.7v1.3h-2.7zM573.7 516.3h2.7v1.3h-2.7zM573.7 518.6h2.7v1.3h-2.7zM573.7 520.9h2.7v1.3h-2.7zM573.7 523.2h2.7v1.3h-2.7zM573.7 525.5h2.7v1.3h-2.7zM577.4 504.3h1.3v2.6h-1.3zM579.7 504.3h1.3v2.6h-1.3zM582 504.3h1.3v2.6h-1.3zM584.2 504.3h1.2v2.6h-1.2zM586.5 504.3h1.2v2.6h-1.2zM588.7 504.3h1.2v2.6h-1.2zM590.9 504.3h1.2v2.6h-1.2zM593.1 504.3h1.2v2.6h-1.2zM595.3 504.3h1.1v2.6h-1.1zM577.4 507.9h2.3v1.2h-2.3zM577.4 510.2h2.3v1.2h-2.3zM577.4 512.4h2.3v1.2h-2.3zM577.4 514.6h2.3v1.2h-2.3zM577.4 516.9h2.3v1.2h-2.3zM577.4 519.1h2.3v1.2h-2.3zM577.4 521.3h2.3v1.2h-2.3zM577.4 523.5h2.3v1.2h-2.3zM577.4 525.7h2.3v1.1h-2.3zM580.6 507.9h1.2v2.2h-1.2zM582.8 507.9h1.2v2.2h-1.2zM585 507.9h1.1v2.2h-1.1zM587.1 507.9h1.1v2.2h-1.1zM589.2 507.9h1.1v2.2h-1.1zM591.3 507.9h1.1v2.2h-1.1zM593.3 507.9h1v2.2h-1zM595.4 507.9h1v2.2h-1zM580.6 511.1h2v1.2h-2zM580.6 513.3h2v1.1h-2zM580.6 515.4h2v1.1h-2zM580.6 517.5h2v1.1h-2zM580.6 519.6h2v1.1h-2zM580.6 521.7h2v1h-2zM580.6 523.7h2v1h-2zM580.6 525.8h2v1h-2zM583.6 511.1h1.1v1.8h-1.1zM585.7 511.1h1.1v1.8h-1.1zM587.8 511.1h1v1.8h-1zM589.7 511.1h1v1.8h-1zM591.7 511.1h1v1.8h-1zM593.7 511.1h0.9v1.8h-0.9zM595.5 511.1h0.9v1.8h-0.9zM583.6 513.9h0.8v1.9h-0.8zM585.4 513.9h0.8v1.9h-0.8zM587.1 513.9h0.8v1.9h-0.8zM588.9 513.9h0.7v1.9h-0.7zM590.6 513.9h0.7v1.9h-0.7zM592.4 513.9h0.7v1.9h-0.7zM594.1 513.9h0.7v1.9h-0.7zM595.7 513.9h0.7v1.9h-0.7zM583.6 516.9h1.6v0.9h-1.6zM583.6 518.7h1.6v0.9h-1.6zM583.6 520.6h1.6v0.8h-1.6zM583.6 522.4h1.6v0.8h-1.6zM583.6 524.2h1.6v0.8h-1.6zM583.6 526h1.6v0.8h-1.6zM586.2 516.8h1.8v0.6h-1.8zM586.2 518.4h1.8v0.6h-1.8zM586.2 520h1.8v0.6h-1.8zM586.2 521.6h1.8v0.6h-1.8zM586.2 523.2h1.8v0.6h-1.8zM586.2 524.7h1.8v0.6h-1.8zM586.2 526.2h1.8v0.6h-1.8zM589 516.9h0.7v1.4h-0.7zM590.8 516.9h0.7v1.4h-0.7zM592.5 516.9h0.7v1.4h-0.7zM594.1 516.9h0.7v1.4h-0.7zM595.8 516.9h0.6v1.4h-0.6zM589 519.3h0.7v1.3h-0.7zM590.7 519.3h0.7v1.3h-0.7zM592.4 519.3h0.7v1.3h-0.7zM594.1 519.3h0.7v1.3h-0.7zM595.8 519.3h0.7v1.3h-0.7zM589 521.5h1.2v0.6h-1.2zM589 523.1h1.2v0.6h-1.2zM589 524.7h1.2v0.6h-1.2zM589 526.3h1.2v0.6h-1.2zM591.2 521.6h0.5v1.4h-0.5zM592.5 521.6h0.5v1.4h-0.5zM593.7 521.6h0.5v1.4h-0.5zM594.9 521.6h0.5v1.4h-0.5zM596.1 521.6h0.5v1.4h-0.5zM591.3 523.9h1.2v0.5h-1.2zM591.3 525.2h1.2v0.5h-1.2zM591.3 526.4h1.2v0.5h-1.2zM593.5 523.9h1.1v0.5h-1.1zM593.5 525.2h1.1v0.5h-1.1zM593.5 526.4h1.1v0.5h-1.1zM595.3 524h0.4v1.6h-0.4zM596.3 524h0.4v1.6h-0.4zM595.5 526.4h0.9v0.5h-0.9z"/><path fill="#c5b0d5" d="M340.3 529.7h14v8.4h-14zM340.3 539.1h14v8.3h-14zM340.3 548.4h14v8.2h-14zM340.3 557.6h14v8h-14zM340.3 566.6h14v7.9h-14zM340.3 575.5h14v7.7h-14zM340.3 584.2h14v7.7h-14zM340.3 592.9h14v7.4h-14zM340.3 601.3h14v7.3h-14zM340.3 609.5h14v7.3h-14zM340.3 617.8h14v7.2h-14zM340.3 625.9h14v7h-14zM355.3 529.7h11.7v8.2h-11.7zM355.3 538.9h11.7v8.1h-11.7zM355.3 548h11.7v8h-11.7zM355.3 557h11.7v8h-11.7zM355.3 566h11.7v7.8h-11.7zM355.3 574.8h11.7v7.2h-11.7zM355.3 583h11.7v7h-11.7zM355.3 591h11.7v6.9h-11.7zM355.3 598.9h11.7v6.1h-11.7zM355.3 606.1h11.7v6h-11.7zM355.3 613.1h11.7v6h-11.7zM355.3 620.1h11.7v6h-11.7zM355.3 627.1h11.7v5.8h-11.7zM368 529.7h10.2v6.7h-10.2zM368 537.4h10.2v6.5h-10.2zM368 544.9h10.2v6.5h-10.2zM368 552.4h10.2v6.5h-10.2zM368 559.9h10.2v6.3h-10.2zM368 567.2h10.2v6.1h-10.2zM368 574.3h10.2v5.9h-10.2zM368 581.2h10.2v5.8h-10.2zM368 588h10.2v5.8h-10.2zM368 594.9h10.2v5.7h-10.2zM368 601.6h10.2v5.6h-10.2zM368 608.2h10.2v5.5h-10.2zM368 614.7h10.2v5.5h-10.2zM368 621.2h10.2v5.4h-10.2zM368 627.7h10.2v5.2h-10.2zM379.2 529.7h9.3v5.7h-9.3zM379.2 536.4h9.3v5.7h-9.3zM379.2 543.1h9.3v5.7h-9.3zM379.2 549.8h9.3v5.7h-9.3zM379.2 556.4h9.3v5.6h-9.3zM379.2 563h9.3v5.6h-9.3zM379.2 569.7h9.3v5.6h-9.3zM379.2 576.2h9.3v5.6h-9.3zM379.2 582.8h9.3v5.4h-9.3zM379.2 589.2h9.3v5.4h-9.3zM379.2 595.7h9.3v5.4h-9.3zM379.2 602.1h9.3v5.4h-9.3zM379.2 608.5h9.3v5.4h-9.3zM379.2 614.9h9.3v5.4h-9.3zM379.2 621.3h9.3v5.3h-9.3zM379.2 627.6h9.3v5.3h-9.3zM389.5 529.7h9v5.4h-9zM389.5 536.1h9v5.4h-9zM389.5 542.6h9v5.4h-9zM389.5 548.9h9v5.3h-9zM389.5 555.3h9v5.2h-9zM389.5 561.5h9v5.2h-9zM389.5 567.6h9v5.1h-9zM389.5 573.8h9v5.1h-9zM389.5 579.9h9v5.1h-9zM389.5 586h9v5.1h-9zM389.5 592h9v5h-9zM389.5 598.1h9v5h-9zM389.5 604.1h9v5h-9zM389.5 610.1h9v5h-9zM389.5 616.1h9v5h-9zM389.5 622h9v4.9h-9zM389.5 628h9v4.9h-9zM399.5 529.7h8.4v5.3h-8.4zM399.5 536h8.4v5.3h-8.4zM399.5 542.3h8.4v5.3h-8.4zM399.5 548.6h8.4v5.3h-8.4zM399.5 554.9h8.4v5.2h-8.4zM399.5 561.1h8.4v5.2h-8.4zM399.5 567.3h8.4v5.2h-8.4zM399.5 573.5h8.4v5.1h-8.4zM399.5 579.7h8.4v5.1h-8.4zM399.5 585.7h8.4v5.1h-8.4zM399.5 591.8h8.4v5h-8.4zM399.5 597.9h8.4v5h-8.4zM399.5 603.9h8.4v5h-8.4zM399.5 609.9h8.4v5h-8.4zM399.5 615.9h8.4v5h-8.4zM399.5 621.9h8.4v5h-8.4zM399.5 627.9h8.4v5h-8.4zM408.9 529.7h8.5v4.9h-8.5zM408.9 535.6h8.5v4.9h-8.5zM408.9 541.5h8.5v4.9h-8.5zM408.9 547.3h8.5v4.8h-8.5zM408.9 553.2h8.5v4.8h-8.5zM408.9 559h8.5v4.8h-8.5zM408.9 564.8h8.5v4.8h-8.5zM408.9 570.6h8.5v4.8h-8.5zM408.9 576.4h8.5v4.8h-8.5zM408.9 582.2h8.5v4.8h-8.5zM408.9 587.9h8.5v4.8h-8.5zM408.9 593.7h8.5v4.8h-8.5zM408.9 599.5h8.5v4.8h-8.5zM408.9 605.2h8.5v4.7h-8.5zM408.9 611h8.5v4.7h-8.5zM408.9 616.7h8.5v4.7h-8.5zM408.9 622.4h8.5v4.7h-8.5zM408.9 628.2h8.5v4.7h-8.5zM418.4 529.7h8.1v5h-8.1zM418.4 535.7h8.1v4.9h-8.1zM418.4 541.6h8.1v4.8h-8.1zM418.4 547.4h8.1v4.8h-8.1zM418.4 553.2h8.1v4.8h-8.1zM418.4 559h8.1v4.8h-8.1zM418.4 564.8h8.1v4.8h-8.1zM418.4 570.6h8.1v4.8h-8.1zM418.4 576.4h8.1v4.8h-8.1zM418.4 582.2h8.1v4.8h-8.1zM418.4 588h8.1v4.8h-8.1zM418.4 593.7h8.1v4.8h-8.1zM418.4 599.5h8.1v4.8h-8.1zM418.4 605.2h8.1v4.8h-8.1zM418.4 611h8.1v4.7h-8.1zM418.4 616.7h8.1v4.7h-8.1zM418.4 622.4h8.1v4.7h-8.1zM418.4 628.2h8.1v4.7h-8.1zM427.6 529.7h7.9v4.9h-7.9zM427.6 535.6h7.9v4.9h-7.9zM427.6 541.4h7.9v4.9h-7.9zM427.6 547.3h7.9v4.9h-7.9zM427.6 553.1h7.9v4.8h-7.9zM427.6 559h7.9v4.8h-7.9zM427.6 564.8h7.9v4.8h-7.9zM427.6 570.6h7.9v4.8h-7.9zM427.6 576.4h7.9v4.8h-7.9zM427.6 582.3h7.9v4.8h-7.9zM427.6 588.1h7.9v4.7h-7.9zM427.6 593.8h7.9v4.7h-7.9zM427.6 599.5h7.9v4.7h-7.9zM427.6 605.3h7.9v4.7h-7.9zM427.6 611h7.9v4.7h-7.9zM427.6 616.7h7.9v4.7h-7.9zM427.6 622.5h7.9v4.7h-7.9zM427.6 628.2h7.9v4.7h-7.9zM436.5 529.7h8v4.6h-8zM436.5 535.3h8v4.6h-8zM436.5 540.9h8v4.6h-8zM436.5 546.5h8v4.6h-8zM436.5 552.1h8v4.5h-8zM436.5 557.6h8v4.5h-8zM436.5 563.1h8v4.5h-8zM436.5 568.6h8v4.5h-8zM436.5 574.1h8v4.5h-8zM436.5 579.6h8v4.5h-8zM436.5 585.1h8v4.5h-8zM436.5 590.6h8v4.4h-8zM436.5 596h8v4.4h-8zM436.5 601.4h8v4.4h-8zM436.5 606.9h8v4.4h-8zM436.5 612.3h8v4.4h-8zM436.5 617.7h8v4.4h-8zM436.5 623.1h8v4.4h-8zM436.5 628.5h8v4.4h-8zM445.6 529.7h7.8v4.6h-7.8zM445.6 535.3h7.8v4.5h-7.8zM445.6 540.8h7.8v4.5h-7.8zM445.6 546.3h7.8v4.5h-7.8zM445.6 551.8h7.8v4.5h-7.8zM445.6 557.3h7.8v4.5h-7.8zM445.6 562.8h7.8v4.5h-7.8zM445.6 568.3h7.8v4.5h-7.8zM445.6 573.9h7.8v4.5h-7.8zM445.6 579.3h7.8v4.5h-7.8zM445.6 584.8h7.8v4.5h-7.8zM445.6 590.3h7.8v4.5h-7.8zM445.6 595.8h7.8v4.5h-7.8zM445.6 601.3h7.8v4.5h-7.8zM445.6 606.7h7.8v4.5h-7.8zM445.6 612.2h7.8v4.5h-7.8zM445.6 617.7h7.8v4.4h-7.8zM445.6 623.1h7.8v4.4h-7.8zM445.6 628.5h7.8v4.4h-7.8zM454.3 529.7h7.8v4.4h-7.8zM454.3 535.1h7.8v4.4h-7.8zM454.3 540.4h7.8v4.3h-7.8zM454.3 545.7h7.8v4.3h-7.8zM454.3 551.1h7.8v4.3h-7.8zM454.3 556.3h7.8v4.2h-7.8zM454.3 561.6h7.8v4.2h-7.8zM454.3 566.8h7.8v4.2h-7.8zM454.3 572h7.8v4.2h-7.8zM454.3 577.2h7.8v4.2h-7.8zM454.3 582.4h7.8v4.2h-7.8zM454.3 587.6h7.8v4.2h-7.8zM454.3 592.7h7.8v4.2h-7.8zM454.3 597.9h7.8v4.2h-7.8zM454.3 603.1h7.8v4.2h-7.8zM454.3 608.2h7.8v4.1h-7.8zM454.3 613.4h7.8v4.1h-7.8zM454.3 618.5h7.8v4.1h-7.8zM454.3 623.6h7.8v4.1h-7.8zM454.3 628.8h7.8v4.1h-7.8zM463.1 529.7h7.4v4.3h-7.4zM463.1 535h7.4v4.3h-7.4zM463.1 540.3h7.4v4.3h-7.4zM463.1 545.6h7.4v4.3h-7.4zM463.1 550.8h7.4v4.3h-7.4zM463.1 556.1h7.4v4.2h-7.4zM463.1 561.3h7.4v4.2h-7.4zM463.1 566.6h7.4v4.2h-7.4zM463.1 571.8h7.4v4.2h-7.4zM463.1 577h7.4v4.2h-7.4zM463.1 582.2h7.4v4.2h-7.4zM463.1 587.4h7.4v4.2h-7.4zM463.1 592.6h7.4v4.2h-7.4zM463.1 597.8h7.4v4.2h-7.4zM463.1 603h7.4v4.2h-7.4zM463.1 608.2h7.4v4.2h-7.4zM463.1 613.3h7.4v4.1h-7.4zM463.1 618.5h7.4v4.1h-7.4zM463.1 623.6h7.4v4.1h-7.4zM463.1 628.8h7.4v4.1h-7.4zM471.6 529.7h7.1v4.3h-7.1zM471.6 535h7.1v4.3h-7.1zM471.6 540.3h7.1v4.3h-7.1zM471.6 545.6h7.1v4.3h-7.1zM471.6 550.9h7.1v4.2h-7.1zM471.6 556.1h7.1v4.2h-7.1zM471.6 561.4h7.1v4.2h-7.1zM471.6 566.6h7.1v4.2h-7.1zM471.6 571.8h7.1v4.2h-7.1zM471.6 577h7.1v4.2h-7.1zM471.6 582.2h7.1v4.2h-7.1zM471.6 587.4h7.1v4.2h-7.1zM471.6 592.6h7.1v4.2h-7.1zM471.6 597.8h7.1v4.2h-7.1zM471.6 603h7.1v4.2h-7.1zM471.6 608.2h7.1v4.2h-7.1zM471.6 613.3h7.1v4.1h-7.1zM471.6 618.5h7.1v4.1h-7.1zM471.6 623.6h7.1v4.1h-7.1zM471.6 628.8h7.1v4.1h-7.1zM479.7 529.7h7.2v4.1h-7.2zM479.7 534.8h7.2v4h-7.2zM479.7 539.8h7.2v4h-7.2zM479.7 544.8h7.2v4h-7.2zM479.7 549.8h7.2v4h-7.2zM479.7 554.9h7.2v4h-7.2zM479.7 559.9h7.2v4h-7.2zM479.7 564.9h7.2v4h-7.2zM479.7 569.9h7.2v4h-7.2zM479.7 574.9h7.2v4h-7.2zM479.7 579.8h7.2v4h-7.2zM479.7 584.8h7.2v4h-7.2zM479.7 589.8h7.2v3.9h-7.2zM479.7 594.7h7.2v3.9h-7.2zM479.7 599.6h7.2v3.9h-7.2zM479.7 604.5h7.2v3.9h-7.2zM479.7 609.4h7.2v3.9h-7.2zM479.7 614.4h7.2v3.9h-7.2zM479.7 619.3h7.2v3.9h-7.2zM479.7 624.1h7.2v3.9h-7.2zM479.7 629h7.2v3.9h-7.2zM487.9 529.7h6.9v4.1h-6.9zM487.9 534.8h6.9v4.1h-6.9zM487.9 539.8h6.9v4.1h-6.9zM487.9 544.9h6.9v4h-6.9zM487.9 550h6.9v4h-6.9zM487.9 555h6.9v4h-6.9zM487.9 560h6.9v4h-6.9zM487.9 565h6.9v4h-6.9zM487.9 570h6.9v4h-6.9zM487.9 575h6.9v4h-6.9zM487.9 580h6.9v4h-6.9zM487.9 584.9h6.9v3.9h-6.9zM487.9 589.8h6.9v3.9h-6.9zM487.9 594.7h6.9v3.9h-6.9zM487.9 599.7h6.9v3.9h-6.9zM487.9 604.6h6.9v3.9h-6.9zM487.9 609.5h6.9v3.9h-6.9zM487.9 614.4h6.9v3.9h-6.9zM487.9 619.3h6.9v3.9h-6.9zM487.9 624.2h6.9v3.9h-6.9zM487.9 629h6.9v3.9h-6.9zM495.7 529.7h3.9v6.7h-3.9zM500.6 529.7h3.9v6.7h-3.9zM505.6 529.7h3.9v6.7h-3.9zM510.5 529.7h3.9v6.7h-3.9zM515.4 529.7h3.9v6.7h-3.9zM520.3 529.7h3.9v6.7h-3.9zM525.2 529.7h3.9v6.7h-3.9zM530.1 529.7h3.9v6.7h-3.9zM534.9 529.7h3.9v6.7h-3.9zM539.8 529.7h3.9v6.7h-3.9zM544.7 529.7h3.9v6.7h-3.9zM549.5 529.7h3.9v6.7h-3.9zM554.4 529.7h3.9v6.7h-3.9zM559.2 529.7h3.8v6.7h-3.8zM564 529.7h3.8v6.7h-3.8zM568.8 529.7h3.8v6.7h-3.8zM573.6 529.7h3.8v6.7h-3.8zM578.4 529.7h3.8v6.7h-3.8zM583.2 529.7h3.8v6.7h-3.8zM587.9 529.7h3.7v6.7h-3.7zM592.7 529.7h3.7v6.7h-3.7zM495.7 537.4h6.7v3.7h-6.7zM495.7 542.2h6.7v3.7h-6.7zM495.7 546.9h6.7v3.7h-6.7zM495.7 551.6h6.7v3.7h-6.7zM495.7 556.2h6.7v3.7h-6.7zM495.7 560.9h6.7v3.6h-6.7zM495.7 565.5h6.7v3.6h-6.7zM495.7 570.2h6.7v3.6h-6.7zM495.7 574.8h6.7v3.6h-6.7zM495.7 579.4h6.7v3.6h-6.7zM495.7 584h6.7v3.6h-6.7zM495.7 588.6h6.7v3.6h-6.7zM495.7 593.1h6.7v3.6h-6.7zM495.7 597.7h6.7v3.6h-6.7zM495.7 602.3h6.7v3.6h-6.7zM495.7 606.8h6.7v3.6h-6.7zM495.7 611.4h6.7v3.5h-6.7zM495.7 615.9h6.7v3.5h-6.7zM495.7 620.4h6.7v3.5h-6.7zM495.7 624.9h6.7v3.5h-6.7zM495.7 629.4h6.7v3.5h-6.7zM503.4 537.4h3.6v6.5h-3.6zM508 537.4h3.6v6.5h-3.6zM512.6 537.4h3.6v6.5h-3.6zM517.2 537.4h3.6v6.5h-3.6zM521.8 537.4h3.6v6.5h-3.6zM526.3 537.4h3.6v6.5h-3.6zM530.9 537.4h3.5v6.5h-3.5zM535.5 537.4h3.5v6.5h-3.5zM540 537.4h3.5v6.5h-3.5zM544.5 537.4h3.5v6.5h-3.5zM549 537.4h3.4v6.5h-3.4zM553.4 537.4h3.4v6.5h-3.4zM557.9 537.4h3.4v6.5h-3.4zM562.3 537.4h3.4v6.5h-3.4zM566.8 537.4h3.4v6.5h-3.4zM571.2 537.4h3.4v6.5h-3.4zM575.6 537.4h3.4v6.5h-3.4zM579.9 537.4h3.4v6.5h-3.4zM584.3 537.4h3.4v6.5h-3.4zM588.7 537.4h3.4v6.5h-3.4zM593.1 537.4h3.3v6.5h-3.3zM503.4 545h6.2v3.5h-6.2zM503.4 549.5h6.2v3.5h-6.2zM503.4 554.1h6.2v3.5h-6.2zM503.4 558.6h6.2v3.5h-6.2zM503.4 563.1h6.2v3.5h-6.2zM503.4 567.6h6.2v3.5h-6.2zM503.4 572.2h6.2v3.5h-6.2zM503.4 576.6h6.2v3.5h-6.2zM503.4 581.1h6.2v3.5h-6.2zM503.4 585.5h6.2v3.4h-6.2zM503.4 590h6.2v3.4h-6.2zM503.4 594.4h6.2v3.4h-6.2zM503.4 598.9h6.2v3.4h-6.2zM503.4 603.3h6.2v3.4h-6.2zM503.4 607.7h6.2v3.4h-6.2zM503.4 612.1h6.2v3.4h-6.2zM503.4 616.5h6.2v3.4h-6.2zM503.4 620.9h6.2v3.4h-6.2zM503.4 625.3h6.2v3.3h-6.2zM503.4 629.6h6.2v3.3h-6.2zM510.6 545h3.4v6h-3.4zM515 545h3.4v6h-3.4zM519.4 545h3.4v6h-3.4zM523.8 545h3.4v6h-3.4zM528.2 545h3.4v6h-3.4zM532.7 545h3.4v6h-3.4zM537.1 545h3.4v6h-3.4zM541.4 545h3.4v6h-3.4zM545.8 545h3.4v6h-3.4zM550.2 545h3.4v6h-3.4zM554.6 545h3.3v6h-3.3zM558.9 545h3.3v6h-3.3zM563.2 545h3.3v6h-3.3zM567.5 545h3.3v6h-3.3zM571.9 545h3.3v6h-3.3zM576.2 545h3.3v6h-3.3zM580.5 545h3.3v6h-3.3zM584.7 545h3.3v6h-3.3zM589 545h3.2v6h-3.2zM593.2 545h3.2v6h-3.2zM510.6 552h5.9v3.2h-5.9zM510.6 556.2h5.9v3.2h-5.9zM510.6 560.4h5.9v3.2h-5.9zM510.6 564.7h5.9v3.2h-5.9zM510.6 568.9h5.9v3.2h-5.9zM510.6 573.1h5.9v3.2h-5.9zM510.6 577.3h5.9v3.2h-5.9zM510.6 581.5h5.9v3.1h-5.9zM510.6 585.6h5.9v3.1h-5.9zM510.6 589.7h5.9v3.1h-5.9zM510.6 593.7h5.9v3.1h-5.9zM510.6 597.8h5.9v3.1h-5.9zM510.6 601.8h5.9v3.1h-5.9zM510.6 605.9h5.9v3.1h-5.9zM510.6 609.9h5.9v3h-5.9zM510.6 614h5.9v3h-5.9zM510.6 618h5.9v3h-5.9zM510.6 622h5.9v3h-5.9zM510.6 626h5.9v3h-5.9zM510.6 629.9h5.9v3h-5.9zM517.5 552h3.1v5.7h-3.1zM521.6 552h3.1v5.7h-3.1zM525.7 552h3.1v5.7h-3.1zM529.8 552h3v5.7h-3zM533.8 552h3v5.7h-3zM537.8 552h3v5.7h-3zM541.8 552h3v5.7h-3zM545.8 552h3v5.7h-3zM549.9 552h3v5.7h-3zM553.8 552h3v5.7h-3zM557.8 552h3v5.7h-3zM561.8 552h3v5.7h-3zM565.8 552h3v5.7h-3zM569.8 552h3v5.7h-3zM573.7 552h3v5.7h-3zM577.7 552h3v5.7h-3zM581.6 552h2.9v5.7h-2.9zM585.6 552h2.9v5.7h-2.9zM589.5 552h2.9v5.7h-2.9zM593.5 552h2.9v5.7h-2.9zM517.5 558.7h5.5v3h-5.5zM517.5 562.7h5.5v3h-5.5zM517.5 566.8h5.5v3h-5.5zM517.5 570.8h5.5v3h-5.5zM517.5 574.8h5.5v3h-5.5zM517.5 578.8h5.5v3h-5.5zM517.5 582.8h5.5v3h-5.5zM517.5 586.8h5.5v3h-5.5zM517.5 590.8h5.5v3h-5.5zM517.5 594.7h5.5v3h-5.5zM517.5 598.7h5.5v3h-5.5zM517.5 602.7h5.5v2.9h-5.5zM517.5 606.6h5.5v2.9h-5.5zM517.5 610.5h5.5v2.9h-5.5zM517.5 614.5h5.5v2.9h-5.5zM517.5 618.4h5.5v2.9h-5.5zM517.5 622.3h5.5v2.9h-5.5zM517.5 626.2h5.5v2.9h-5.5zM517.5 630h5.5v2.9h-5.5zM524.1 558.7h3v5.3h-3zM528 558.7h3v5.3h-3zM532 558.7h3v5.3h-3zM536 558.7h3v5.3h-3zM539.9 558.7h2.9v5.3h-2.9zM543.8 558.7h2.9v5.3h-2.9zM547.7 558.7h2.9v5.3h-2.9zM551.6 558.7h2.9v5.3h-2.9zM555.5 558.7h2.8v5.3h-2.8zM559.3 558.7h2.8v5.3h-2.8zM563.2 558.7h2.8v5.3h-2.8zM567 558.7h2.8v5.3h-2.8zM570.8 558.7h2.8v5.3h-2.8zM574.6 558.7h2.8v5.3h-2.8zM578.4 558.7h2.8v5.3h-2.8zM582.2 558.7h2.8v5.3h-2.8zM586 558.7h2.8v5.3h-2.8zM589.8 558.7h2.8v5.3h-2.8zM593.6 558.7h2.8v5.3h-2.8zM524.1 565h5.1v2.9h-5.1zM524.1 568.9h5.1v2.9h-5.1zM524.1 572.8h5.1v2.9h-5.1zM524.1 576.7h5.1v2.9h-5.1zM524.1 580.5h5.1v2.9h-5.1zM524.1 584.4h5.1v2.9h-5.1zM524.1 588.3h5.1v2.9h-5.1zM524.1 592.1h5.1v2.8h-5.1zM524.1 596h5.1v2.8h-5.1zM524.1 599.8h5.1v2.8h-5.1zM524.1 603.6h5.1v2.8h-5.1zM524.1 607.4h5.1v2.8h-5.1zM524.1 611.2h5.1v2.8h-5.1zM524.1 615.1h5.1v2.8h-5.1zM524.1 618.9h5.1v2.8h-5.1zM524.1 622.6h5.1v2.8h-5.1zM524.1 626.4h5.1v2.8h-5.1zM524.1 630.2h5.1v2.7h-5.1zM530.1 565h2.9v4.9h-2.9zM534 565h2.8v4.9h-2.8zM537.8 565h2.8v4.9h-2.8zM541.7 565h2.8v4.9h-2.8zM545.5 565h2.8v4.9h-2.8zM549.2 565h2.8v4.9h-2.8zM553 565h2.8v4.9h-2.8zM556.7 565h2.7v4.9h-2.7zM560.5 565h2.7v4.9h-2.7zM564.2 565h2.7v4.9h-2.7zM568 565h2.7v4.9h-2.7zM571.7 565h2.7v4.9h-2.7zM575.4 565h2.7v4.9h-2.7zM579.1 565h2.7v4.9h-2.7zM582.8 565h2.7v4.9h-2.7zM586.4 565h2.7v4.9h-2.7zM590.1 565h2.7v4.9h-2.7zM593.8 565h2.6v4.9h-2.6zM530.1 570.9h5v2.6h-5zM530.1 574.4h5v2.5h-5zM530.1 578h5v2.5h-5zM530.1 581.5h5v2.5h-5zM530.1 585h5v2.5h-5zM530.1 588.5h5v2.5h-5zM530.1 592.1h5v2.5h-5zM530.1 595.6h5v2.5h-5zM530.1 599.1h5v2.5h-5zM530.1 602.6h5v2.5h-5zM530.1 606.1h5v2.5h-5zM530.1 609.6h5v2.5h-5zM530.1 613.1h5v2.5h-5zM530.1 616.6h5v2.5h-5zM530.1 620h5v2.5h-5zM530.1 623.5h5v2.5h-5zM530.1 627h5v2.5h-5zM530.1 630.4h5v2.5h-5zM536.1 570.9h2.7v4.6h-2.7zM539.8 570.9h2.7v4.6h-2.7zM543.5 570.9h2.7v4.6h-2.7zM547.2 570.9h2.7v4.6h-2.7zM550.9 570.9h2.6v4.6h-2.6zM554.5 570.9h2.6v4.6h-2.6zM558.2 570.9h2.6v4.6h-2.6zM561.8 570.9h2.6v4.6h-2.6zM565.4 570.9h2.6v4.6h-2.6zM569 570.9h2.6v4.6h-2.6zM572.6 570.9h2.6v4.6h-2.6zM576.1 570.9h2.6v4.6h-2.6zM579.7 570.9h2.6v4.6h-2.6zM583.2 570.9h2.5v4.6h-2.5zM586.8 570.9h2.5v4.6h-2.5zM590.3 570.9h2.5v4.6h-2.5zM593.9 570.9h2.5v4.6h-2.5zM536.1 576.4h4.7v2.4h-4.7zM536.1 579.9h4.7v2.4h-4.7zM536.1 583.3h4.7v2.4h-4.7zM536.1 586.7h4.7v2.4h-4.7zM536.1 590.1h4.7v2.4h-4.7zM536.1 593.5h4.7v2.4h-4.7zM536.1 596.9h4.7v2.4h-4.7zM536.1 600.3h4.7v2.4h-4.7zM536.1 603.7h4.7v2.4h-4.7zM536.1 607.1h4.7v2.4h-4.7zM536.1 610.5h4.7v2.4h-4.7zM536.1 613.9h4.7v2.4h-4.7zM536.1 617.2h4.7v2.3h-4.7zM536.1 620.6h4.7v2.3h-4.7zM536.1 623.9h4.7v2.3h-4.7zM536.1 627.3h4.7v2.3h-4.7zM536.1 630.6h4.7v2.3h-4.7zM541.8 576.4h2.4v4.6h-2.4zM545.2 576.4h2.3v4.6h-2.3zM548.5 576.4h2.3v4.6h-2.3zM551.9 576.4h2.3v4.6h-2.3zM555.2 576.4h2.3v4.6h-2.3zM558.5 576.4h2.3v4.6h-2.3zM561.8 576.4h2.3v4.6h-2.3zM565.1 576.4h2.3v4.6h-2.3zM568.4 576.4h2.3v4.6h-2.3zM571.7 576.4h2.3v4.6h-2.3zM574.9 576.4h2.2v4.6h-2.2zM578.2 576.4h2.2v4.6h-2.2zM581.4 576.4h2.2v4.6h-2.2zM584.6 576.4h2.2v4.6h-2.2zM587.8 576.4h2.2v4.6h-2.2zM591 576.4h2.2v4.6h-2.2zM594.2 576.4h2.2v4.6h-2.2zM541.8 582h4.4v2.3h-4.4zM541.8 585.4h4.4v2.3h-4.4zM541.8 588.7h4.4v2.3h-4.4zM541.8 592h4.4v2.3h-4.4zM541.8 595.2h4.4v2.3h-4.4zM541.8 598.5h4.4v2.3h-4.4zM541.8 601.8h4.4v2.3h-4.4zM541.8 605h4.4v2.3h-4.4zM541.8 608.3h4.4v2.2h-4.4zM541.8 611.5h4.4v2.2h-4.4zM541.8 614.8h4.4v2.2h-4.4zM541.8 618h4.4v2.2h-4.4zM541.8 621.2h4.4v2.2h-4.4zM541.8 624.4h4.4v2.2h-4.4zM541.8 627.6h4.4v2.1h-4.4zM541.8 630.8h4.4v2.1h-4.4zM547.2 582h2.2v4.2h-2.2zM550.4 582h2.2v4.2h-2.2zM553.6 582h2.2v4.2h-2.2zM556.8 582h2.2v4.2h-2.2zM560 582h2.2v4.2h-2.2zM563.1 582h2.2v4.2h-2.2zM566.3 582h2.2v4.2h-2.2zM569.5 582h2.1v4.2h-2.1zM572.6 582h2.1v4.2h-2.1zM575.7 582h2.1v4.2h-2.1zM578.9 582h2.1v4.2h-2.1zM582 582h2.1v4.2h-2.1zM585.1 582h2.1v4.2h-2.1zM588.2 582h2.1v4.2h-2.1zM591.2 582h2.1v4.2h-2.1zM594.3 582h2.1v4.2h-2.1zM547.2 587.3h4v2.2h-4zM547.2 590.5h4v2.2h-4zM547.2 593.6h4v2.2h-4zM547.2 596.8h4v2.2h-4zM547.2 600h4v2.2h-4zM547.2 603.2h4v2.1h-4zM547.2 606.3h4v2.1h-4zM547.2 609.4h4v2.1h-4zM547.2 612.6h4v2.1h-4zM547.2 615.7h4v2.1h-4zM547.2 618.7h4v2.1h-4zM547.2 621.8h4v2h-4zM547.2 624.8h4v2h-4zM547.2 627.8h4v2h-4zM547.2 630.9h4v2h-4zM552.2 587.3h2.1v3.9h-2.1zM555.3 587.3h2.1v3.9h-2.1zM558.3 587.3h2.1v3.9h-2.1zM561.4 587.3h2v3.9h-2zM564.4 587.3h2v3.9h-2zM567.4 587.3h2v3.9h-2zM570.5 587.3h2v3.9h-2zM573.5 587.3h2v3.9h-2zM576.5 587.3h2v3.9h-2zM579.5 587.3h2v3.9h-2zM582.5 587.3h2v3.9h-2zM585.5 587.3h2v3.9h-2zM588.5 587.3h2v3.9h-2zM591.5 587.3h2v3.9h-2zM594.4 587.3h2v3.9h-2zM552.2 592.2h3.8v2h-3.8zM552.2 595.2h3.8v2h-3.8zM552.2 598.2h3.8v2h-3.8zM552.2 601.2h3.8v2h-3.8zM552.2 604.2h3.8v2h-3.8zM552.2 607.2h3.8v2h-3.8zM552.2 610.2h3.8v2h-3.8zM552.2 613.2h3.8v2h-3.8zM552.2 616.2h3.8v2h-3.8zM552.2 619.2h3.8v2h-3.8zM552.2 622.2h3.8v1.9h-3.8zM552.2 625.1h3.8v1.9h-3.8zM552.2 628h3.8v1.9h-3.8zM552.2 631h3.8v1.9h-3.8zM557 592.2h2v3.7h-2zM559.9 592.2h2v3.7h-2zM562.9 592.2h2v3.7h-2zM565.8 592.2h1.9v3.7h-1.9zM568.8 592.2h1.9v3.7h-1.9zM571.7 592.2h1.9v3.7h-1.9zM574.6 592.2h1.9v3.7h-1.9zM577.5 592.2h1.9v3.7h-1.9zM580.4 592.2h1.9v3.7h-1.9zM583.2 592.2h1.9v3.7h-1.9zM586.1 592.2h1.8v3.7h-1.8zM588.9 592.2h1.8v3.7h-1.8zM591.8 592.2h1.8v3.7h-1.8zM594.6 592.2h1.8v3.7h-1.8zM557 596.9h3.5v1.9h-3.5zM557 599.8h3.5v1.9h-3.5zM557 602.7h3.5v1.9h-3.5zM557 605.6h3.5v1.9h-3.5zM557 608.5h3.5v1.9h-3.5zM557 611.4h3.5v1.9h-3.5zM557 614.3h3.5v1.9h-3.5zM557 617.2h3.5v1.9h-3.5zM557 620h3.5v1.9h-3.5zM557 622.9h3.5v1.8h-3.5zM557 625.7h3.5v1.8h-3.5zM557 628.5h3.5v1.7h-3.5zM557 631.2h3.5v1.7h-3.5zM561.5 596.9h1.8v3.3h-1.8zM564.3 596.9h1.8v3.3h-1.8zM567.1 596.9h1.8v3.3h-1.8zM569.9 596.9h1.8v3.3h-1.8zM572.7 596.9h1.8v3.3h-1.8zM575.5 596.9h1.8v3.3h-1.8zM578.3 596.9h1.8v3.3h-1.8zM581 596.9h1.8v3.3h-1.8zM583.8 596.9h1.8v3.3h-1.8zM586.6 596.9h1.7v3.3h-1.7zM589.3 596.9h1.7v3.3h-1.7zM592 596.9h1.7v3.3h-1.7zM594.7 596.9h1.7v3.3h-1.7zM561.5 601.2h3.2v1.8h-3.2zM561.5 604h3.2v1.8h-3.2zM561.5 606.7h3.2v1.8h-3.2zM561.5 609.5h3.2v1.7h-3.2zM561.5 612.3h3.2v1.7h-3.2zM561.5 615h3.2v1.7h-3.2zM561.5 617.7h3.2v1.7h-3.2zM561.5 620.4h3.2v1.7h-3.2zM561.5 623.2h3.2v1.7h-3.2zM561.5 625.9h3.2v1.7h-3.2zM561.5 628.6h3.2v1.7h-3.2zM561.5 631.2h3.2v1.7h-3.2zM565.6 601.2h1.7v3.1h-1.7zM568.4 601.2h1.7v3.1h-1.7zM571.1 601.2h1.7v3.1h-1.7zM573.8 601.2h1.7v3.1h-1.7zM576.5 601.2h1.7v3.1h-1.7zM579.2 601.2h1.7v3.1h-1.7zM581.8 601.2h1.6v3.1h-1.6zM584.4 601.2h1.6v3.1h-1.6zM587.1 601.2h1.6v3.1h-1.6zM589.7 601.2h1.6v3.1h-1.6zM592.3 601.2h1.6v3.1h-1.6zM594.8 601.2h1.6v3.1h-1.6zM565.6 605.2h2.9v1.6h-2.9zM565.6 607.9h2.9v1.6h-2.9zM565.6 610.5h2.9v1.6h-2.9zM565.6 613.2h2.9v1.6h-2.9zM565.6 615.8h2.9v1.6h-2.9zM565.6 618.4h2.9v1.6h-2.9zM565.6 621h2.9v1.6h-2.9zM565.6 623.6h2.9v1.6h-2.9zM565.6 626.2h2.9v1.6h-2.9zM565.6 628.8h2.9v1.6h-2.9zM565.6 631.3h2.9v1.6h-2.9zM569.6 605.2h1.6v2.8h-1.6zM572.2 605.2h1.6v2.8h-1.6zM574.8 605.2h1.6v2.8h-1.6zM577.4 605.2h1.6v2.8h-1.6zM579.9 605.2h1.6v2.8h-1.6zM582.5 605.2h1.5v2.8h-1.5zM585 605.2h1.5v2.8h-1.5zM587.6 605.2h1.5v2.8h-1.5zM590 605.2h1.5v2.8h-1.5zM592.5 605.2h1.5v2.8h-1.5zM595 605.2h1.4v2.8h-1.4zM569.6 609h2.9v1.4h-2.9zM569.6 611.4h2.9v1.4h-2.9zM569.6 613.8h2.9v1.3h-2.9zM569.6 616.1h2.9v1.3h-2.9zM569.6 618.5h2.9v1.3h-2.9zM569.6 620.7h2.9v1.2h-2.9zM569.6 623h2.9v1.2h-2.9zM569.6 625.2h2.9v1.2h-2.9zM569.6 627.4h2.9v1.2h-2.9zM569.6 629.6h2.9v1.2h-2.9zM569.6 631.7h2.9v1.2h-2.9zM573.5 609h1.2v2.7h-1.2zM575.7 609h1.2v2.7h-1.2zM577.9 609h1.2v2.7h-1.2zM580.2 609h1.2v2.7h-1.2zM582.4 609h1.2v2.7h-1.2zM584.6 609h1.2v2.7h-1.2zM586.7 609h1.1v2.7h-1.1zM588.9 609h1.1v2.7h-1.1zM591 609h1.1v2.7h-1.1zM593.2 609h1.1v2.7h-1.1zM595.3 609h1.1v2.7h-1.1zM573.5 612.8h2.6v1.2h-2.6zM573.5 615h2.6v1.2h-2.6zM573.5 617.1h2.6v1.1h-2.6zM573.5 619.3h2.6v1.1h-2.6zM573.5 621.4h2.6v1.1h-2.6zM573.5 623.5h2.6v1.1h-2.6zM573.5 625.6h2.6v1.1h-2.6zM573.5 627.7h2.6v1.1h-2.6zM573.5 629.8h2.6v1.1h-2.6zM573.5 631.8h2.6v1.1h-2.6zM577 612.8h1.1v2.5h-1.1zM579.1 612.8h1.1v2.5h-1.1zM581.2 612.8h1.1v2.5h-1.1zM583.3 612.8h1.1v2.5h-1.1zM585.4 612.8h1.1v2.5h-1.1zM587.4 612.8h1v2.5h-1zM589.5 612.8h1v2.5h-1zM591.5 612.8h1v2.5h-1zM593.5 612.8h1v2.5h-1zM595.4 612.8h1v2.5h-1zM577 616.3h2.3v1h-2.3zM577 618.3h2.3v1h-2.3zM577 620.4h2.3v1h-2.3zM577 622.4h2.3v1h-2.3zM577 624.3h2.3v0.9h-2.3zM577 626.3h2.3v0.9h-2.3zM577 628.2h2.3v0.9h-2.3zM577 630.2h2.3v0.9h-2.3zM577 632h2.3v0.9h-2.3zM580.4 616.3h1v2.1h-1zM582.3 616.3h1v2.1h-1zM584.3 616.3h1v2.1h-1zM586.3 616.3h0.9v2.1h-0.9zM588.2 616.3h0.9v2.1h-0.9zM590 616.3h0.9v2.1h-0.9zM591.9 616.3h0.8v2.1h-0.8zM593.7 616.3h0.8v2.1h-0.8zM595.6 616.3h0.8v2.1h-0.8zM580.4 619.4h2v0.9h-2zM580.4 621.3h2v0.9h-2zM580.4 623.2h2v0.9h-2zM580.4 625h2v0.8h-2zM580.4 626.8h2v0.8h-2zM580.4 628.6h2v0.8h-2zM580.4 630.4h2v0.8h-2zM580.4 632.2h2v0.7h-2zM583.4 619.4h0.8v1.9h-0.8zM585.2 619.4h0.8v1.9h-0.8zM587 619.4h0.8v1.9h-0.8zM588.8 619.4h0.8v1.9h-0.8zM590.5 619.4h0.7v1.9h-0.7zM592.3 619.4h0.7v1.9h-0.7zM594 619.4h0.7v1.9h-0.7zM595.7 619.4h0.7v1.9h-0.7zM583.4 622.3h1.8v0.7h-1.8zM583.4 624h1.8v0.7h-1.8zM583.4 625.7h1.8v0.7h-1.8zM583.4 627.4h1.8v0.7h-1.8zM583.4 629h1.8v0.7h-1.8zM583.4 630.7h1.8v0.7h-1.8zM583.4 632.3h1.8v0.6h-1.8zM586.2 622.3h0.7v1.7h-0.7zM587.9 622.3h0.7v1.7h-0.7zM589.5 622.3h0.6v1.7h-0.6zM591.1 622.3h0.6v1.7h-0.6zM592.7 622.3h0.6v1.7h-0.6zM594.3 622.3h0.6v1.7h-0.6zM595.8 622.3h0.6v1.7h-0.6zM586.2 625h1.6v0.6h-1.6zM586.2 626.5h1.6v0.6h-1.6zM586.2 628h1.6v0.6h-1.6zM586.2 629.5h1.6v0.6h-1.6zM586.2 631h1.6v0.6h-1.6zM586.2 632.4h1.6v0.6h-1.6zM588.7 625h0.6v1.4h-0.6zM590.2 625h0.6v1.4h-0.6zM591.7 625h0.6v1.4h-0.6zM593.1 625h0.6v1.4h-0.6zM594.5 625h0.6v1.4h-0.6zM595.9 625h0.6v1.4h-0.6zM588.8 627.3h1.5v0.5h-1.5zM588.8 628.6h1.5v0.5h-1.5zM588.8 630h1.5v0.5h-1.5zM588.8 631.3h1.5v0.5h-1.5zM588.8 632.5h1.5v0.5h-1.5zM591.2 627.4h0.5v1.4h-0.5zM592.4 627.4h0.5v1.4h-0.5zM593.7 627.4h0.5v1.4h-0.5zM594.9 627.4h0.5v1.4h-0.5zM596.1 627.4h0.5v1.4h-0.5zM591.3 629.7h1v0.6h-1zM591.3 631.1h1v0.5h-1zM591.3 632.4h1v0.5h-1zM593.3 629.7h0.9v0.6h-0.9zM593.3 631.1h0.9v0.5h-0.9zM593.3 632.5h0.9v0.5h-0.9zM595 629.8h0.5v1.1h-0.5zM596.1 629.8h0.4v1.1h-0.4zM595.1 631.7h1.3v0.4h-1.3zM595.1 632.7h1.3v0.4h-1.3z"/><path fill="#2ca02c" d="M598.5 113h10.2v14.2h-10.2zM609.7 113h10.1v14.2h-10.1zM620.8 113h9.4v14.2h-9.4zM631.2 113h9.3v14.2h-9.3zM641.6 113h9.2v14.2h-9.2zM651.7 113h8.9v14.2h-8.9zM661.6 113h8.2v14.2h-8.2zM670.8 113h8.2v14.2h-8.2zM680 113h8.1v14.2h-8.1zM689.1 113h8.1v14.2h-8.1zM698.2 113h8v14.2h-8zM707.1 113h7.1v14.2h-7.1zM715.2 113h7v14.2h-7zM723.3 113h6.9v14.2h-6.9zM731.2 113h6.8v14.2h-6.8zM598.5 128.2h8.1v11.4h-8.1zM607.6 128.2h7.9v11.4h-7.9zM616.5 128.2h7.8v11.4h-7.8zM625.2 128.2h7.7v11.4h-7.7zM633.9 128.2h7.7v11.4h-7.7zM642.6 128.2h7.6v11.4h-7.6zM651.2 128.2h7.3v11.4h-7.3zM659.5 128.2h7.2v11.4h-7.2zM667.7 128.2h6.7v11.4h-6.7zM675.4 128.2h6.5v11.4h-6.5zM682.9 128.2h6.5v11.4h-6.5zM690.4 128.2h6.1v11.4h-6.1zM697.5 128.2h6v11.4h-6zM704.5 128.2h6v11.4h-6zM711.5 128.2h6v11.4h-6zM718.4 128.2h5.9v11.4h-5.9zM725.4 128.2h5.9v11.4h-5.9zM732.2 128.2h5.8v11.4h-5.8zM598.5 140.6h6.6v10h-6.6zM606.1 140.6h6.5v10h-6.5zM613.6 140.6h6.4v10h-6.4zM621 140.6h6.3v10h-6.3zM628.3 140.6h6.2v10h-6.2zM635.5 140.6h6.2v10h-6.2zM642.7 140.6h6.2v10h-6.2zM649.9 140.6h6.1v10h-6.1zM657 140.6h6v10h-6zM664.1 140.6h6v10h-6zM671 140.6h5.9v10h-5.9zM677.9 140.6h5.9v10h-5.9zM684.9 140.6h5.9v10h-5.9zM691.7 140.6h5.9v10h-5.9zM698.6 140.6h5.8v10h-5.8zM705.4 140.6h5.8v10h-5.8zM712.2 140.6h5.8v10h-5.8zM718.9 140.6h5.8v10h-5.8zM725.7 140.6h5.7v10h-5.7zM732.4 140.6h5.6v10h-5.6zM598.5 151.6h9.6v5.8h-9.6zM598.5 158.5h9.6v5.8h-9.6zM598.5 165.3h9.6v5.8h-9.6zM598.5 172.1h9.6v5.7h-9.6zM598.5 178.8h9.6v5.7h-9.6zM598.5 185.5h9.6v5.7h-9.6zM598.5 192.2h9.6v5.7h-9.6zM598.5 198.9h9.6v5.6h-9.6zM598.5 205.5h9.6v5.6h-9.6zM598.5 212.2h9.6v5.6h-9.6zM598.5 218.7h9.6v5.6h-9.6zM598.5 225.3h9.6v5.5h-9.6zM609.1 151.6h5.5v9.3h-5.5zM615.6 151.6h5.5v9.3h-5.5zM622 151.6h5.4v9.3h-5.4zM628.5 151.6h5.4v9.3h-5.4zM634.8 151.6h5.3v9.3h-5.3zM641.1 151.6h5.3v9.3h-5.3zM647.4 151.6h5.3v9.3h-5.3zM653.7 151.6h5.2v9.3h-5.2zM659.9 151.6h5.2v9.3h-5.2zM666.1 151.6h5.2v9.3h-5.2zM672.3 151.6h5.2v9.3h-5.2zM678.4 151.6h5.1v9.3h-5.1zM684.5 151.6h5.1v9.3h-5.1zM690.7 151.6h5.1v9.3h-5.1zM696.8 151.6h5.1v9.3h-5.1zM702.9 151.6h5.1v9.3h-5.1zM708.9 151.6h5v9.3h-5zM715 151.6h5v9.3h-5zM721 151.6h5v9.3h-5zM727 151.6h5v9.3h-5zM733 151.6h5v9.3h-5zM609.1 162h9v5.1h-9zM609.1 168.1h9v5.1h-9zM609.1 174.2h9v5.1h-9zM609.1 180.3h9v5.1h-9zM609.1 186.4h9v5.1h-9zM609.1 192.4h9v5.1h-9zM609.1 198.5h9v5.1h-9zM609.1 204.6h9v5.1h-9zM609.1 210.6h9v5.1h-9zM609.1 216.7h9v5h-9zM609.1 222.7h9v5h-9zM619.1 162h5.2v8.6h-5.2zM625.3 162h5.1v8.6h-5.1zM631.4 162h5.1v8.6h-5.1zM637.5 162h5.1v8.6h-5.1zM643.7 162h5.1v8.6h-5.1zM649.7 162h5.1v8.6h-5.1zM655.8 162h5.1v8.6h-5.1zM661.9 162h5.1v8.6h-5.1zM668 162h5.1v8.6h-5.1zM674 162h5v8.6h-5zM680.1 162h5v8.6h-5zM686.1 162h5v8.6h-5zM692.1 162h5v8.6h-5zM698.2 162h5v8.6h-5zM704.2 162h4.9v8.6h-4.9zM710 162h4.9v8.6h-4.9zM715.9 162h4.8v8.6h-4.8zM721.7 162h4.8v8.6h-4.8zM727.5 162h4.8v8.6h-4.8zM733.3 162h4.7v8.6h-4.7zM619.1 171.6h8.2v5h-8.2zM619.1 177.5h8.2v5h-8.2zM619.1 183.5h8.2v5h-8.2zM619.1 189.5h8.2v5h-8.2zM619.1 195.4h8.2v5h-8.2zM619.1 201.4h8.2v4.9h-8.2zM619.1 207.3h8.2v4.9h-8.2zM619.1 213.2h8.2v4.9h-8.2zM619.1 219.1h8.2v4.9h-8.2zM619.1 225h8.2v4.9h-8.2zM628.3 171.6h4.7v8.2h-4.7zM634 171.6h4.7v8.2h-4.7zM639.7 171.6h4.7v8.2h-4.7zM645.3 171.6h4.7v8.2h-4.7zM651 171.6h4.7v8.2h-4.7zM656.6 171.6h4.6v8.2h-4.6zM662.3 171.6h4.6v8.2h-4.6zM667.9 171.6h4.5v8.2h-4.5zM673.5 171.6h4.5v8.2h-4.5zM679 171.6h4.5v8.2h-4.5zM684.5 171.6h4.5v8.2h-4.5zM690 171.6h4.5v8.2h-4.5zM695.5 171.6h4.5v8.2h-4.5zM701 171.6h4.5v8.2h-4.5zM706.5 171.6h4.4v8.2h-4.4zM711.9 171.6h4.4v8.2h-4.4zM717.3 171.6h4.4v8.2h-4.4zM722.8 171.6h4.4v8.2h-4.4zM728.2 171.6h4.4v8.2h-4.4zM733.6 171.6h4.4v8.2h-4.4zM628.3 180.8h8v4.5h-8zM628.3 186.3h8v4.5h-8zM628.3 191.8h8v4.5h-8zM628.3 197.3h8v4.5h-8zM628.3 202.7h8v4.5h-8zM628.3 208.2h8v4.5h-8zM628.3 213.7h8v4.4h-8zM628.3 219.1h8v4.4h-8zM628.3 224.5h8v4.4h-8zM637.3 180.8h4.5v7.5h-4.5zM642.8 180.8h4.5v7.5h-4.5zM648.2 180.8h4.5v7.5h-4.5zM653.7 180.8h4.4v7.5h-4.4zM659.2 180.8h4.4v7.5h-4.4zM664.6 180.8h4.4v7.5h-4.4zM670 180.8h4.4v7.5h-4.4zM675.4 180.8h4.4v7.5h-4.4zM680.8 180.8h4.3v7.5h-4.3zM686.2 180.8h4.3v7.5h-4.3zM691.5 180.8h4.3v7.5h-4.3zM696.8 180.8h4.3v7.5h-4.3zM702.1 180.8h4.3v7.5h-4.3zM707.4 180.8h4.3v7.5h-4.3zM712.7 180.8h4.3v7.5h-4.3zM718 180.8h4.3v7.5h-4.3zM723.2 180.8h4.3v7.5h-4.3zM728.5 180.8h4.3v7.5h-4.3zM733.7 180.8h4.3v7.5h-4.3zM637.3 189.3h7.4v4.3h-7.4zM637.3 194.6h7.4v4.3h-7.4zM637.3 199.9h7.4v4.3h-7.4zM637.3 205.1h7.4v4.2h-7.4zM637.3 210.4h7.4v4.2h-7.4zM637.3 215.6h7.4v4.2h-7.4zM637.3 220.8h7.4v4.2h-7.4zM637.3 226h7.4v4.2h-7.4zM645.7 189.3h4.4v7h-4.4zM651.1 189.3h4.4v7h-4.4zM656.5 189.3h4.3v7h-4.3zM661.8 189.3h4.3v7h-4.3zM667.1 189.3h4.3v7h-4.3zM672.3 189.3h4.3v7h-4.3zM677.6 189.3h4.2v7h-4.2zM682.8 189.3h4.2v7h-4.2zM688 189.3h4.2v7h-4.2zM693.2 189.3h4.1v7h-4.1zM698.3 189.3h4.1v7h-4.1zM703.4 189.3h4.1v7h-4.1zM708.5 189.3h4.1v7h-4.1zM713.6 189.3h4.1v7h-4.1zM718.7 189.3h4.1v7h-4.1zM723.8 189.3h4.1v7h-4.1zM728.9 189.3h4.1v7h-4.1zM733.9 189.3h4.1v7h-4.1zM645.7 197.3h6.8v4.2h-6.8zM645.7 202.5h6.8v4.2h-6.8zM645.7 207.6h6.8v4.1h-6.8zM645.7 212.8h6.8v4.1h-6.8zM645.7 217.9h6.8v4.1h-6.8zM645.7 222.9h6.8v4h-6.8zM645.7 228h6.8v4h-6.8zM653.5 197.3h6.9v3.8h-6.9zM653.5 202.1h6.9v3.8h-6.9zM653.5 207h6.9v3.8h-6.9zM653.5 211.8h6.9v3.8h-6.9zM653.5 216.6h6.9v3.8h-6.9zM653.5 221.4h6.9v3.8h-6.9zM653.5 226.2h6.9v3.8h-6.9zM661.4 197.3h3.7v6.7h-3.7zM666.1 197.3h3.7v6.7h-3.7zM670.7 197.3h3.7v6.7h-3.7zM675.4 197.3h3.6v6.7h-3.6zM680 197.3h3.6v6.7h-3.6zM684.7 197.3h3.6v6.7h-3.6zM689.3 197.3h3.6v6.7h-3.6zM693.9 197.3h3.6v6.7h-3.6zM698.5 197.3h3.6v6.7h-3.6zM703.1 197.3h3.6v6.7h-3.6zM707.7 197.3h3.5v6.7h-3.5zM712.3 197.3h3.5v6.7h-3.5zM716.8 197.3h3.5v6.7h-3.5zM721.2 197.3h3.4v6.7h-3.4zM725.7 197.3h3.4v6.7h-3.4zM730.1 197.3h3.4v6.7h-3.4zM734.6 197.3h3.4v6.7h-3.4zM661.4 205h3.7v6.1h-3.7zM666.1 205h3.7v6.1h-3.7zM670.8 205h3.6v6.1h-3.6zM675.4 205h3.6v6.1h-3.6zM680.1 205h3.6v6.1h-3.6zM684.7 205h3.6v6.1h-3.6zM689.3 205h3.6v6.1h-3.6zM693.9 205h3.6v6.1h-3.6zM698.5 205h3.6v6.1h-3.6zM703.1 205h3.6v6.1h-3.6zM707.7 205h3.5v6.1h-3.5zM712.2 205h3.5v6.1h-3.5zM716.7 205h3.5v6.1h-3.5zM721.2 205h3.5v6.1h-3.5zM725.7 205h3.5v6.1h-3.5zM730.1 205h3.4v6.1h-3.4zM734.6 205h3.4v6.1h-3.4zM661.4 212.1h5.9v3.5h-5.9zM661.4 216.6h5.9v3.5h-5.9zM661.4 221.1h5.9v3.5h-5.9zM661.4 225.6h5.9v3.4h-5.9zM668.3 212.1h6v3.3h-6zM668.3 216.4h6v3.3h-6zM668.3 220.6h6v3.3h-6zM668.3 224.9h6v3.3h-6zM675.3 212.1h3.1v5.8h-3.1zM679.4 212.1h3.1v5.8h-3.1zM683.5 212.1h3.1v5.8h-3.1zM687.5 212.1h3.1v5.8h-3.1zM691.6 212.1h3.1v5.8h-3.1zM695.7 212.1h3v5.8h-3zM699.7 212.1h3v5.8h-3zM703.6 212.1h3v5.8h-3zM707.6 212.1h3v5.8h-3zM711.6 212.1h3v5.8h-3zM715.6 212.1h2.9v5.8h-2.9zM719.5 212.1h2.9v5.8h-2.9zM723.4 212.1h2.9v5.8h-2.9zM727.3 212.1h2.9v5.8h-2.9zM731.2 212.1h2.9v5.8h-2.9zM735.1 212.1h2.9v5.8h-2.9zM675.3 218.9h3v5.6h-3zM679.3 218.9h3v5.6h-3zM683.4 218.9h3v5.6h-3zM687.4 218.9h3v5.6h-3zM691.4 218.9h3v5.6h-3zM695.4 218.9h3v5.6h-3zM699.4 218.9h3v5.6h-3zM703.4 218.9h3v5.6h-3zM707.4 218.9h3v5.6h-3zM711.4 218.9h3v5.6h-3zM715.4 218.9h3v5.6h-3zM719.4 218.9h3v5.6h-3zM723.4 218.9h3v5.6h-3zM727.3 218.9h2.9v5.6h-2.9zM731.2 218.9h2.9v5.6h-2.9zM735.1 218.9h2.9v5.6h-2.9zM675.3 225.5h5.6v2.9h-5.6zM681.8 225.5h2.9v5.2h-2.9zM685.8 225.5h2.9v5.2h-2.9zM689.7 225.5h2.9v5.2h-2.9zM693.6 225.5h2.9v5.2h-2.9zM697.5 225.5h2.9v5.2h-2.9zM701.4 225.5h2.8v5.2h-2.8zM705.2 225.5h2.8v5.2h-2.8zM709 225.5h2.8v5.2h-2.8zM712.8 225.5h2.8v5.2h-2.8zM716.6 225.5h2.8v5.2h-2.8zM720.4 225.5h2.8v5.2h-2.8zM724.1 225.5h2.8v5.2h-2.8zM727.9 225.5h2.7v5.2h-2.7zM731.6 225.5h2.7v5.2h-2.7zM735.3 225.5h2.7v5.2h-2.7zM707.7 231.7h2.5v4.5h-2.5zM711.2 231.7h2.5v4.5h-2.5zM714.7 231.7h2.5v4.5h-2.5zM718.2 231.7h2.5v4.5h-2.5zM721.7 231.7h2.5v4.5h-2.5zM725.2 231.7h2.5v4.5h-2.5zM728.7 231.7h2.5v4.5h-2.5zM732.1 231.7h2.5v4.5h-2.5zM735.6 231.7h2.4v4.5h-2.4zM709.1 237.2h2.4v4.3h-2.4zM712.5 237.2h2.4v4.3h-2.4zM715.8 237.2h2.4v4.3h-2.4zM719.2 237.2h2.3v4.3h-2.3zM722.5 237.2h2.3v4.3h-2.3zM725.8 237.2h2.3v4.3h-2.3zM729.2 237.2h2.3v4.3h-2.3zM732.5 237.2h2.3v4.3h-2.3zM735.8 237.2h2.2v4.3h-2.2zM708.4 242.5h2.2v4.3h-2.2zM711.6 242.5h2.1v4.3h-2.1zM714.7 242.5h2.1v4.3h-2.1zM717.8 242.5h2.1v4.3h-2.1zM720.8 242.5h2v4.3h-2zM723.9 242.5h2v4.3h-2zM726.9 242.5h2v4.3h-2zM729.9 242.5h2v4.3h-2zM733 242.5h2v4.3h-2zM736 242.5h2v4.3h-2zM708.8 247.8h2.1v3.5h-2.1zM711.9 247.8h2.1v3.5h-2.1zM715 247.8h2v3.5h-2zM718 247.8h2v3.5h-2zM721.1 247.8h2v3.5h-2zM724.1 247.8h2v3.5h-2zM727.1 247.8h2v3.5h-2zM730.1 247.8h2v3.5h-2zM733.1 247.8h1.9v3.5h-1.9zM736.1 247.8h1.9v3.5h-1.9zM708.8 252.3h1.9v3.6h-1.9zM711.6 252.3h1.9v3.6h-1.9zM714.5 252.3h1.8v3.6h-1.8zM717.3 252.3h1.8v3.6h-1.8zM720.1 252.3h1.8v3.6h-1.8zM722.9 252.3h1.7v3.6h-1.7zM725.6 252.3h1.7v3.6h-1.7zM728.3 252.3h1.7v3.6h-1.7zM731 252.3h1.7v3.6h-1.7zM733.7 252.3h1.7v3.6h-1.7zM736.3 252.3h1.7v3.6h-1.7zM708.8 256.9h3.5v1.7h-3.5zM708.8 259.6h3.5v1.7h-3.5zM708.8 262.2h3.5v1.6h-3.5zM708.8 264.9h3.5v1.6h-3.5zM708.8 267.5h3.5v1.6h-3.5zM708.8 270.1h3.5v1.6h-3.5zM708.8 272.6h3.5v1.5h-3.5zM708.8 275.1h3.5v1.5h-3.5zM708.8 277.7h3.5v1.5h-3.5zM708.8 280.2h3.5v1.5h-3.5zM713.2 256.9h1.6v3.3h-1.6zM715.9 256.9h1.6v3.3h-1.6zM718.5 256.9h1.6v3.3h-1.6zM721.1 256.9h1.6v3.3h-1.6zM723.7 256.9h1.6v3.3h-1.6zM726.4 256.9h1.6v3.3h-1.6zM729 256.9h1.6v3.3h-1.6zM731.5 256.9h1.5v3.3h-1.5zM734 256.9h1.5v3.3h-1.5zM736.5 256.9h1.5v3.3h-1.5zM713.2 261.1h3.2v1.5h-3.2zM713.2 263.6h3.2v1.5h-3.2zM713.2 266.1h3.2v1.4h-3.2zM713.2 268.5h3.2v1.4h-3.2zM713.2 270.9h3.2v1.4h-3.2zM713.2 273.3h3.2v1.4h-3.2zM713.2 275.7h3.2v1.3h-3.2zM713.2 278h3.2v1.3h-3.2zM713.2 280.4h3.2v1.3h-3.2zM717.4 261.1h2.9v1.5h-2.9zM717.4 263.6h2.9v1.5h-2.9zM717.4 266.1h2.9v1.5h-2.9zM717.4 268.5h2.9v1.4h-2.9zM717.4 270.9h2.9v1.4h-2.9zM717.4 273.4h2.9v1.4h-2.9zM717.4 275.8h2.9v1.4h-2.9zM717.4 278.2h2.9v1.3h-2.9zM717.4 280.4h2.9v1.3h-2.9zM721.3 261.1h1.3v2.8h-1.3zM723.6 261.1h1.3v2.8h-1.3zM725.9 261.1h1.2v2.8h-1.2zM728.2 261.1h1.2v2.8h-1.2zM730.4 261.1h1.2v2.8h-1.2zM732.6 261.1h1.2v2.8h-1.2zM734.7 261.1h1.1v2.8h-1.1zM736.9 261.1h1.1v2.8h-1.1zM721.3 264.9h1.3v2.4h-1.3zM723.6 264.9h1.3v2.4h-1.3zM725.9 264.9h1.2v2.4h-1.2zM728.2 264.9h1.2v2.4h-1.2zM730.4 264.9h1.2v2.4h-1.2zM732.6 264.9h1.2v2.4h-1.2zM734.8 264.9h1.1v2.4h-1.1zM736.9 264.9h1.1v2.4h-1.1zM721.3 268.3h2.4v1.2h-2.4zM721.3 270.5h2.4v1.1h-2.4zM721.3 272.6h2.4v1.1h-2.4zM721.3 274.7h2.4v1.1h-2.4zM721.3 276.8h2.4v1h-2.4zM721.3 278.8h2.4v1h-2.4zM721.3 280.7h2.4v1h-2.4zM724.7 268.3h1.2v2.1h-1.2zM726.9 268.3h1.1v2.1h-1.1zM729 268.3h1v2.1h-1zM731 268.3h1v2.1h-1zM733 268.3h1v2.1h-1zM735 268.3h1v2.1h-1zM737 268.3h1v2.1h-1zM724.7 271.4h2.1v1h-2.1zM724.7 273.3h2.1v1h-2.1zM724.7 275.3h2.1v0.9h-2.1zM724.7 277.2h2.1v0.9h-2.1zM724.7 279.1h2.1v0.8h-2.1zM724.7 280.9h2.1v0.8h-2.1zM727.8 271.4h0.9v1.8h-0.9zM729.7 271.4h0.9v1.8h-0.9zM731.6 271.4h0.9v1.8h-0.9zM733.4 271.4h0.9v1.8h-0.9zM735.3 271.4h0.9v1.8h-0.9zM737.2 271.4h0.8v1.8h-0.8zM727.8 274.1h1.8v0.8h-1.8zM727.8 275.9h1.8v0.8h-1.8zM727.8 277.6h1.8v0.7h-1.8zM727.8 279.4h1.8v0.7h-1.8zM727.8 281.1h1.8v0.6h-1.8zM730.6 274.1h0.8v1.5h-0.8zM732.4 274.1h0.8v1.5h-0.8zM734.1 274.1h0.7v1.5h-0.7zM735.8 274.1h0.6v1.5h-0.6zM737.4 274.1h0.6v1.5h-0.6zM730.6 276.6h1.5v0.6h-1.5zM730.6 278.1h1.5v0.6h-1.5zM730.6 279.7h1.5v0.6h-1.5zM730.6 281.2h1.5v0.6h-1.5zM733.1 276.6h0.6v1.3h-0.6zM734.6 276.6h0.6v1.3h-0.6zM736.1 276.6h0.6v1.3h-0.6zM737.6 276.6h0.5v1.3h-0.5zM733.1 278.8h1.4v0.5h-1.4zM733.1 280.1h1.4v0.5h-1.4zM733.1 281.3h1.4v0.5h-1.4zM735.3 279h0.5v1.3h-0.5zM736.5 279h0.5v1.3h-0.5zM737.7 279h0.5v1.3h-0.5zM735.5 281.2h0.8v0.6h-0.8zM737.3 281.2h0.7v0.6h-0.7z"/><path fill="#1f77b4" d="M739.8 113h10.4v13.1h-10.4zM751.2 113h10.1v13.1h-10.1zM762.3 113h9.5v13.1h-9.5zM772.8 113h9.5v13.1h-9.5zM783.2 113h9.4v13.1h-9.4zM793.6 113h9.2v13.1h-9.2zM803.8 113h8.8v13.1h-8.8zM813.6 113h8.7v13.1h-8.7zM823.3 113h8.4v13.1h-8.4zM832.7 113h7.9v13.1h-7.9zM841.6 113h7.8v13.1h-7.8zM850.5 113h6.5v13.1h-6.5zM858 113h6.5v13.1h-6.5zM739.8 127.1h7.5v11.2h-7.5zM748.3 127.1h7.3v11.2h-7.3zM756.6 127.1h7.3v11.2h-7.3zM765 127.1h7.3v11.2h-7.3zM773.3 127.1h7.2v11.2h-7.2zM781.4 127.1h6.8v11.2h-6.8zM789.2 127.1h6.7v11.2h-6.7zM796.9 127.1h6.3v11.2h-6.3zM804.2 127.1h6.3v11.2h-6.3zM811.5 127.1h6.2v11.2h-6.2zM818.7 127.1h6.1v11.2h-6.1zM825.8 127.1h6.1v11.2h-6.1zM832.9 127.1h5.9v11.2h-5.9zM839.8 127.1h5.6v11.2h-5.6zM846.3 127.1h5.4v11.2h-5.4zM852.8 127.1h5.4v11.2h-5.4zM859.2 127.1h5.3v11.2h-5.3zM739.8 139.3h5.9v10.2h-5.9zM746.7 139.3h5.9v10.2h-5.9zM753.6 139.3h5.8v10.2h-5.8zM760.3 139.3h5.7v10.2h-5.7zM767.1 139.3h5.7v10.2h-5.7zM773.8 139.3h5.7v10.2h-5.7zM780.5 139.3h5.7v10.2h-5.7zM787.2 139.3h5.7v10.2h-5.7zM794 139.3h5.7v10.2h-5.7zM800.6 139.3h5.7v10.2h-5.7zM807.3 139.3h5.7v10.2h-5.7zM814 139.3h5.6v10.2h-5.6zM820.5 139.3h5.5v10.2h-5.5zM827.1 139.3h5.5v10.2h-5.5zM833.6 139.3h5.5v10.2h-5.5zM840.1 139.3h5.4v10.2h-5.4zM846.5 139.3h5.4v10.2h-5.4zM852.8 139.3h5.3v10.2h-5.3zM859.2 139.3h5.3v10.2h-5.3zM739.8 150.5h5.7v9.4h-5.7zM746.5 150.5h5.6v9.4h-5.6zM753.1 150.5h5.5v9.4h-5.5zM759.6 150.5h5.5v9.4h-5.5zM766.1 150.5h5.5v9.4h-5.5zM772.6 150.5h5.4v9.4h-5.4zM779 150.5h5.4v9.4h-5.4zM785.4 150.5h5.3v9.4h-5.3zM791.7 150.5h5.3v9.4h-5.3zM798 150.5h5.3v9.4h-5.3zM804.3 150.5h5.2v9.4h-5.2zM810.5 150.5h5.2v9.4h-5.2zM816.7 150.5h5.2v9.4h-5.2zM823 150.5h5.2v9.4h-5.2zM829.2 150.5h5.2v9.4h-5.2zM835.3 150.5h5.1v9.4h-5.1zM841.4 150.5h5.1v9.4h-5.1zM847.5 150.5h5v9.4h-5zM853.5 150.5h5v9.4h-5zM859.5 150.5h5v9.4h-5zM739.8 160.9h8.9v5.3h-8.9zM739.8 167.2h8.9v5.3h-8.9zM739.8 173.5h8.9v5.3h-8.9zM739.8 179.7h8.9v5.3h-8.9zM739.8 186h8.9v5.2h-8.9zM739.8 192.2h8.9v5.2h-8.9zM739.8 198.4h8.9v5.2h-8.9zM739.8 204.6h8.9v5.2h-8.9zM739.8 210.7h8.9v5.2h-8.9zM739.8 216.9h8.9v5.1h-8.9zM739.8 223h8.9v5.1h-8.9zM739.8 229.1h8.9v5.1h-8.9zM739.8 235.2h8.9v5h-8.9zM739.8 241.2h8.9v5h-8.9zM739.8 247.2h8.9v5h-8.9zM739.8 253.2h8.9v5h-8.9zM739.8 259.1h8.9v4.9h-8.9zM739.8 265h8.9v4.9h-8.9zM739.8 270.9h8.9v4.9h-8.9zM739.8 276.8h8.9v4.9h-8.9zM749.7 160.9h5.2v8.3h-5.2zM755.9 160.9h5.2v8.3h-5.2zM762.1 160.9h5.2v8.3h-5.2zM768.3 160.9h5.2v8.3h-5.2zM774.5 160.9h5.2v8.3h-5.2zM780.7 160.9h5.2v8.3h-5.2zM786.9 160.9h5.2v8.3h-5.2zM793 160.9h5.2v8.3h-5.2zM799.2 160.9h5.1v8.3h-5.1zM805.3 160.9h5.1v8.3h-5.1zM811.4 160.9h5.1v8.3h-5.1zM817.5 160.9h5.1v8.3h-5.1zM823.7 160.9h5.1v8.3h-5.1zM829.8 160.9h5v8.3h-5zM835.8 160.9h5v8.3h-5zM841.8 160.9h5v8.3h-5zM847.8 160.9h4.9v8.3h-4.9zM853.7 160.9h4.9v8.3h-4.9zM859.6 160.9h4.9v8.3h-4.9zM749.7 170.2h8.5v4.8h-8.5zM749.7 176h8.5v4.7h-8.5zM749.7 181.7h8.5v4.7h-8.5zM749.7 187.4h8.5v4.7h-8.5zM749.7 193.2h8.5v4.7h-8.5zM749.7 198.8h8.5v4.7h-8.5zM749.7 204.5h8.5v4.7h-8.5zM749.7 210.2h8.5v4.7h-8.5zM749.7 215.9h8.5v4.6h-8.5zM749.7 221.5h8.5v4.6h-8.5zM749.7 227.1h8.5v4.6h-8.5zM749.7 232.7h8.5v4.6h-8.5zM749.7 238.3h8.5v4.6h-8.5zM749.7 243.9h8.5v4.6h-8.5zM749.7 249.5h8.5v4.5h-8.5zM749.7 255h8.5v4.5h-8.5zM749.7 260.6h8.5v4.5h-8.5zM749.7 266.1h8.5v4.5h-8.5zM749.7 271.6h8.5v4.5h-8.5zM749.7 277.2h8.5v4.5h-8.5zM759.2 170.2h4.8v8h-4.8zM765 170.2h4.7v8h-4.7zM770.7 170.2h4.7v8h-4.7zM776.4 170.2h4.7v8h-4.7zM782.1 170.2h4.7v8h-4.7zM787.8 170.2h4.7v8h-4.7zM793.5 170.2h4.7v8h-4.7zM799.2 170.2h4.6v8h-4.6zM804.8 170.2h4.6v8h-4.6zM810.4 170.2h4.6v8h-4.6zM816 170.2h4.6v8h-4.6zM821.6 170.2h4.6v8h-4.6zM827.1 170.2h4.5v8h-4.5zM832.6 170.2h4.5v8h-4.5zM838.1 170.2h4.5v8h-4.5zM843.6 170.2h4.5v8h-4.5zM849.1 170.2h4.5v8h-4.5zM854.6 170.2h4.5v8h-4.5zM860 170.2h4.5v8h-4.5zM759.2 179.2h7.8v4.6h-7.8zM759.2 184.8h7.8v4.5h-7.8zM759.2 190.3h7.8v4.5h-7.8zM759.2 195.9h7.8v4.5h-7.8zM759.2 201.4h7.8v4.5h-7.8zM759.2 206.9h7.8v4.5h-7.8zM759.2 212.4h7.8v4.5h-7.8zM759.2 217.9h7.8v4.5h-7.8zM759.2 223.4h7.8v4.5h-7.8zM759.2 228.9h7.8v4.4h-7.8zM759.2 234.3h7.8v4.4h-7.8zM759.2 239.7h7.8v4.4h-7.8zM759.2 245.2h7.8v4.4h-7.8zM759.2 250.6h7.8v4.4h-7.8zM759.2 256h7.8v4.4h-7.8zM759.2 261.3h7.8v4.4h-7.8zM759.2 266.7h7.8v4.4h-7.8zM759.2 272.1h7.8v4.3h-7.8zM759.2 277.4h7.8v4.3h-7.8zM768 179.2h4.6v7.4h-4.6zM773.5 179.2h4.6v7.4h-4.6zM779.1 179.2h4.5v7.4h-4.5zM784.6 179.2h4.5v7.4h-4.5zM790.1 179.2h4.5v7.4h-4.5zM795.6 179.2h4.5v7.4h-4.5zM801.1 179.2h4.5v7.4h-4.5zM806.6 179.2h4.4v7.4h-4.4zM812 179.2h4.4v7.4h-4.4zM817.4 179.2h4.4v7.4h-4.4zM822.8 179.2h4.4v7.4h-4.4zM828.2 179.2h4.4v7.4h-4.4zM833.6 179.2h4.4v7.4h-4.4zM839 179.2h4.4v7.4h-4.4zM844.3 179.2h4.3v7.4h-4.3zM849.7 179.2h4.3v7.4h-4.3zM855 179.2h4.3v7.4h-4.3zM860.2 179.2h4.3v7.4h-4.3zM768 187.6h7.2v4.4h-7.2zM768 193h7.2v4.4h-7.2zM768 198.4h7.2v4.4h-7.2zM768 203.7h7.2v4.4h-7.2zM768 209.1h7.2v4.4h-7.2zM768 214.4h7.2v4.3h-7.2zM768 219.8h7.2v4.3h-7.2zM768 225.1h7.2v4.3h-7.2zM768 230.5h7.2v4.3h-7.2zM768 235.7h7.2v4.3h-7.2zM768 241h7.2v4.3h-7.2zM768 246.3h7.2v4.3h-7.2zM768 251.6h7.2v4.2h-7.2zM768 256.8h7.2v4.2h-7.2zM768 262h7.2v4.2h-7.2zM768 267.2h7.2v4.2h-7.2zM768 272.4h7.2v4.2h-7.2zM768 277.5h7.2v4.2h-7.2zM776.2 187.6h4.1v7.3h-4.1zM781.3 187.6h4.1v7.3h-4.1zM786.3 187.6h4.1v7.3h-4.1zM791.4 187.6h4.1v7.3h-4.1zM796.5 187.6h4.1v7.3h-4.1zM801.5 187.6h4.1v7.3h-4.1zM806.6 187.6h4.1v7.3h-4.1zM811.6 187.6h4v7.3h-4zM816.7 187.6h4v7.3h-4zM821.6 187.6h3.9v7.3h-3.9zM826.6 187.6h3.9v7.3h-3.9zM831.5 187.6h3.9v7.3h-3.9zM836.4 187.6h3.9v7.3h-3.9zM841.3 187.6h3.9v7.3h-3.9zM846.2 187.6h3.8v7.3h-3.8zM851 187.6h3.8v7.3h-3.8zM855.9 187.6h3.8v7.3h-3.8zM860.7 187.6h3.8v7.3h-3.8zM776.2 195.9h7.1v4h-7.1zM776.2 200.9h7.1v4h-7.1zM776.2 205.8h7.1v3.9h-7.1zM776.2 210.8h7.1v3.9h-7.1zM776.2 215.7h7.1v3.9h-7.1zM776.2 220.6h7.1v3.9h-7.1zM776.2 225.5h7.1v3.9h-7.1zM776.2 230.4h7.1v3.9h-7.1zM776.2 235.2h7.1v3.8h-7.1zM776.2 240h7.1v3.8h-7.1zM776.2 244.8h7.1v3.8h-7.1zM776.2 249.6h7.1v3.8h-7.1zM776.2 254.4h7.1v3.8h-7.1zM776.2 259.1h7.1v3.7h-7.1zM776.2 263.8h7.1v3.7h-7.1zM776.2 268.6h7.1v3.7h-7.1zM776.2 273.3h7.1v3.7h-7.1zM776.2 278h7.1v3.7h-7.1zM784.2 195.9h3.9v6.7h-3.9zM789.1 195.9h3.9v6.7h-3.9zM794 195.9h3.9v6.7h-3.9zM798.9 195.9h3.9v6.7h-3.9zM803.7 195.9h3.9v6.7h-3.9zM808.6 195.9h3.8v6.7h-3.8zM813.4 195.9h3.8v6.7h-3.8zM818.2 195.9h3.8v6.7h-3.8zM823 195.9h3.8v6.7h-3.8zM827.8 195.9h3.8v6.7h-3.8zM832.6 195.9h3.7v6.7h-3.7zM837.3 195.9h3.7v6.7h-3.7zM842.1 195.9h3.7v6.7h-3.7zM846.8 195.9h3.7v6.7h-3.7zM851.5 195.9h3.7v6.7h-3.7zM856.1 195.9h3.7v6.7h-3.7zM860.8 195.9h3.7v6.7h-3.7zM784.2 203.7h6.5v3.8h-6.5zM784.2 208.5h6.5v3.8h-6.5zM784.2 213.3h6.5v3.8h-6.5zM784.2 218.1h6.5v3.7h-6.5zM784.2 222.8h6.5v3.7h-6.5zM784.2 227.5h6.5v3.7h-6.5zM784.2 232.2h6.5v3.7h-6.5zM784.2 236.8h6.5v3.6h-6.5zM784.2 241.5h6.5v3.6h-6.5zM784.2 246.1h6.5v3.6h-6.5zM784.2 250.7h6.5v3.6h-6.5zM784.2 255.3h6.5v3.6h-6.5zM784.2 259.9h6.5v3.6h-6.5zM784.2 264.5h6.5v3.6h-6.5zM784.2 269.1h6.5v3.6h-6.5zM784.2 273.6h6.5v3.5h-6.5zM784.2 278.2h6.5v3.5h-6.5zM791.7 203.7h3.8v6.1h-3.8zM796.5 203.7h3.8v6.1h-3.8zM801.3 203.7h3.8v6.1h-3.8zM806.1 203.7h3.7v6.1h-3.7zM810.8 203.7h3.7v6.1h-3.7zM815.5 203.7h3.7v6.1h-3.7zM820.2 203.7h3.7v6.1h-3.7zM824.9 203.7h3.6v6.1h-3.6zM829.5 203.7h3.6v6.1h-3.6zM834.1 203.7h3.6v6.1h-3.6zM838.7 203.7h3.6v6.1h-3.6zM843.3 203.7h3.5v6.1h-3.5zM847.8 203.7h3.5v6.1h-3.5zM852.2 203.7h3.4v6.1h-3.4zM856.7 203.7h3.4v6.1h-3.4zM861.1 203.7h3.4v6.1h-3.4zM791.7 210.7h6v3.4h-6zM791.7 215.1h6v3.3h-6zM791.7 219.4h6v3.3h-6zM791.7 223.8h6v3.3h-6zM791.7 228.1h6v3.3h-6zM791.7 232.4h6v3.3h-6zM791.7 236.6h6v3.3h-6zM791.7 240.9h6v3.2h-6zM791.7 245.1h6v3.2h-6zM791.7 249.3h6v3.2h-6zM791.7 253.5h6v3.2h-6zM791.7 257.7h6v3.2h-6zM791.7 261.9h6v3.2h-6zM791.7 266.1h6v3.2h-6zM791.7 270.3h6v3.2h-6zM791.7 274.4h6v3.1h-6zM791.7 278.6h6v3.1h-6zM798.8 210.7h3.3v5.8h-3.3zM803.1 210.7h3.3v5.8h-3.3zM807.3 210.7h3.3v5.8h-3.3zM811.6 210.7h3.3v5.8h-3.3zM815.9 210.7h3.3v5.8h-3.3zM820.1 210.7h3.2v5.8h-3.2zM824.4 210.7h3.2v5.8h-3.2zM828.6 210.7h3.2v5.8h-3.2zM832.7 210.7h3.1v5.8h-3.1zM836.9 210.7h3.1v5.8h-3.1zM841 210.7h3.1v5.8h-3.1zM845.1 210.7h3.1v5.8h-3.1zM849.2 210.7h3.1v5.8h-3.1zM853.3 210.7h3.1v5.8h-3.1zM857.4 210.7h3.1v5.8h-3.1zM861.4 210.7h3.1v5.8h-3.1zM798.8 217.5h5.5v3.2h-5.5zM798.8 221.6h5.5v3.2h-5.5zM798.8 225.8h5.5v3.1h-5.5zM798.8 229.9h5.5v3.1h-5.5zM798.8 234.1h5.5v3.1h-5.5zM798.8 238.2h5.5v3.1h-5.5zM798.8 242.3h5.5v3.1h-5.5zM798.8 246.5h5.5v3.1h-5.5zM798.8 250.6h5.5v3.1h-5.5zM798.8 254.6h5.5v3.1h-5.5zM798.8 258.7h5.5v3.1h-5.5zM798.8 262.8h5.5v3.1h-5.5zM798.8 266.8h5.5v3h-5.5zM798.8 270.8h5.5v3h-5.5zM798.8 274.8h5.5v3h-5.5zM798.8 278.7h5.5v3h-5.5zM805.3 217.5h3.1v5.3h-3.1zM809.4 217.5h3.1v5.3h-3.1zM813.5 217.5h3.1v5.3h-3.1zM817.5 217.5h3.1v5.3h-3.1zM821.6 217.5h3v5.3h-3zM825.6 217.5h3v5.3h-3zM829.7 217.5h3v5.3h-3zM833.7 217.5h3v5.3h-3zM837.7 217.5h3v5.3h-3zM841.7 217.5h3v5.3h-3zM845.7 217.5h3v5.3h-3zM849.6 217.5h3v5.3h-3zM853.6 217.5h3v5.3h-3zM857.6 217.5h3v5.3h-3zM861.5 217.5h3v5.3h-3zM805.3 223.8h5.2v3h-5.2zM805.3 227.8h5.2v3h-5.2zM805.3 231.8h5.2v3h-5.2zM805.3 235.8h5.2v3h-5.2zM805.3 239.8h5.2v3h-5.2zM805.3 243.8h5.2v3h-5.2zM805.3 247.7h5.2v2.9h-5.2zM805.3 251.7h5.2v2.9h-5.2zM805.3 255.6h5.2v2.9h-5.2zM805.3 259.6h5.2v2.9h-5.2zM805.3 263.5h5.2v2.9h-5.2zM805.3 267.3h5.2v2.9h-5.2zM805.3 271.2h5.2v2.8h-5.2zM805.3 275h5.2v2.8h-5.2zM805.3 278.9h5.2v2.8h-5.2zM811.5 223.8h2.9v5h-2.9zM815.4 223.8h2.9v5h-2.9zM819.4 223.8h2.9v5h-2.9zM823.3 223.8h2.9v5h-2.9zM827.2 223.8h2.9v5h-2.9zM831 223.8h2.9v5h-2.9zM834.9 223.8h2.9v5h-2.9zM838.7 223.8h2.9v5h-2.9zM842.6 223.8h2.8v5h-2.8zM846.4 223.8h2.8v5h-2.8zM850.3 223.8h2.8v5h-2.8zM854.1 223.8h2.8v5h-2.8zM857.9 223.8h2.8v5h-2.8zM861.7 223.8h2.8v5h-2.8zM811.5 229.7h4.7v2.9h-4.7zM811.5 233.7h4.7v2.9h-4.7zM811.5 237.6h4.7v2.9h-4.7zM811.5 241.5h4.7v2.9h-4.7zM811.5 245.4h4.7v2.8h-4.7zM811.5 249.2h4.7v2.8h-4.7zM811.5 253h4.7v2.8h-4.7zM811.5 256.8h4.7v2.8h-4.7zM811.5 260.6h4.7v2.7h-4.7zM811.5 264.4h4.7v2.7h-4.7zM811.5 268h4.7v2.7h-4.7zM811.5 271.7h4.7v2.7h-4.7zM811.5 275.4h4.7v2.7h-4.7zM811.5 279h4.7v2.7h-4.7zM817.2 229.7h2.5v4.9h-2.5zM820.7 229.7h2.5v4.9h-2.5zM824.2 229.7h2.5v4.9h-2.5zM827.7 229.7h2.5v4.9h-2.5zM831.2 229.7h2.5v4.9h-2.5zM834.7 229.7h2.5v4.9h-2.5zM838.1 229.7h2.5v4.9h-2.5zM841.6 229.7h2.4v4.9h-2.4zM845 229.7h2.4v4.9h-2.4zM848.4 229.7h2.4v4.9h-2.4zM851.9 229.7h2.4v4.9h-2.4zM855.3 229.7h2.4v4.9h-2.4zM858.7 229.7h2.4v4.9h-2.4zM862.1 229.7h2.4v4.9h-2.4zM817.2 235.7h4.8v2.5h-4.8zM817.2 239.1h4.8v2.4h-4.8zM817.2 242.6h4.8v2.4h-4.8zM817.2 246h4.8v2.4h-4.8zM817.2 249.4h4.8v2.4h-4.8zM817.2 252.8h4.8v2.4h-4.8zM817.2 256.2h4.8v2.4h-4.8zM817.2 259.6h4.8v2.3h-4.8zM817.2 262.9h4.8v2.3h-4.8zM817.2 266.2h4.8v2.3h-4.8zM817.2 269.6h4.8v2.3h-4.8zM817.2 272.9h4.8v2.3h-4.8zM817.2 276.1h4.8v2.3h-4.8zM817.2 279.4h4.8v2.3h-4.8zM823 235.7h2.3v4.7h-2.3zM826.3 235.7h2.3v4.7h-2.3zM829.7 235.7h2.3v4.7h-2.3zM833 235.7h2.3v4.7h-2.3zM836.3 235.7h2.3v4.7h-2.3zM839.6 235.7h2.3v4.7h-2.3zM842.9 235.7h2.3v4.7h-2.3zM846.1 235.7h2.3v4.7h-2.3zM849.4 235.7h2.3v4.7h-2.3zM852.7 235.7h2.3v4.7h-2.3zM855.9 235.7h2.2v4.7h-2.2zM859.1 235.7h2.2v4.7h-2.2zM862.3 235.7h2.2v4.7h-2.2zM823 241.3h4.4v2.3h-4.4zM823 244.6h4.4v2.3h-4.4zM823 247.9h4.4v2.3h-4.4zM823 251.2h4.4v2.3h-4.4zM823 254.4h4.4v2.2h-4.4zM823 257.7h4.4v2.2h-4.4zM823 260.8h4.4v2.2h-4.4zM823 264h4.4v2.1h-4.4zM823 267.1h4.4v2.1h-4.4zM823 270.3h4.4v2.1h-4.4zM823 273.4h4.4v2.1h-4.4zM823 276.5h4.4v2.1h-4.4zM823 279.6h4.4v2.1h-4.4zM828.4 241.3h2.2v4.3h-2.2zM831.6 241.3h2.2v4.3h-2.2zM834.8 241.3h2.2v4.3h-2.2zM838 241.3h2.2v4.3h-2.2zM841.1 241.3h2.1v4.3h-2.1zM844.3 241.3h2.1v4.3h-2.1zM847.4 241.3h2.1v4.3h-2.1zM850.4 241.3h2.1v4.3h-2.1zM853.5 241.3h2v4.3h-2zM856.5 241.3h2v4.3h-2zM859.5 241.3h2v4.3h-2zM862.5 241.3h2v4.3h-2zM828.4 246.6h4v2.1h-4zM828.4 249.6h4v2.1h-4zM828.4 252.7h4v2.1h-4zM828.4 255.8h4v2.1h-4zM828.4 258.8h4v2h-4zM828.4 261.9h4v2h-4zM828.4 264.9h4v2h-4zM828.4 267.9h4v2h-4zM828.4 270.9h4v2h-4zM828.4 273.9h4v2h-4zM828.4 276.8h4v1.9h-4zM828.4 279.8h4v1.9h-4zM833.5 246.6h2v3.8h-2zM836.5 246.6h2v3.8h-2zM839.5 246.6h2v3.8h-2zM842.5 246.6h1.9v3.8h-1.9zM845.4 246.6h1.9v3.8h-1.9zM848.3 246.6h1.9v3.8h-1.9zM851.2 246.6h1.9v3.8h-1.9zM854.1 246.6h1.9v3.8h-1.9zM857 246.6h1.9v3.8h-1.9zM859.8 246.6h1.8v3.8h-1.8zM862.7 246.6h1.8v3.8h-1.8zM833.5 251.4h3.7v1.9h-3.7zM833.5 254.3h3.7v1.9h-3.7zM833.5 257.2h3.7v1.9h-3.7zM833.5 260.1h3.7v1.9h-3.7zM833.5 263h3.7v1.9h-3.7zM833.5 265.9h3.7v1.8h-3.7zM833.5 268.7h3.7v1.8h-3.7zM833.5 271.6h3.7v1.8h-3.7zM833.5 274.4h3.7v1.8h-3.7zM833.5 277.1h3.7v1.8h-3.7zM833.5 279.9h3.7v1.8h-3.7zM838.1 251.4h1.8v3.6h-1.8zM841 251.4h1.8v3.6h-1.8zM843.8 251.4h1.8v3.6h-1.8zM846.5 251.4h1.8v3.6h-1.8zM849.3 251.4h1.8v3.6h-1.8zM852 251.4h1.7v3.6h-1.7zM854.8 251.4h1.7v3.6h-1.7zM857.5 251.4h1.7v3.6h-1.7zM860.1 251.4h1.7v3.6h-1.7zM862.8 251.4h1.7v3.6h-1.7zM838.1 256h3.2v1.8h-3.2zM838.1 258.7h3.2v1.7h-3.2zM838.1 261.5h3.2v1.7h-3.2zM838.1 264.2h3.2v1.7h-3.2zM838.1 266.9h3.2v1.7h-3.2zM838.1 269.5h3.2v1.7h-3.2zM838.1 272.2h3.2v1.7h-3.2zM838.1 274.9h3.2v1.6h-3.2zM838.1 277.5h3.2v1.6h-3.2zM838.1 280.1h3.2v1.6h-3.2zM842.3 256h1.7v3h-1.7zM845 256h1.7v3h-1.7zM847.7 256h1.6v3h-1.6zM850.3 256h1.6v3h-1.6zM852.9 256h1.5v3h-1.5zM855.4 256h1.5v3h-1.5zM858 256h1.5v3h-1.5zM860.5 256h1.5v3h-1.5zM863 256h1.5v3h-1.5zM842.3 260h2.8v1.6h-2.8zM842.3 262.6h2.8v1.6h-2.8zM842.3 265.2h2.8v1.6h-2.8zM842.3 267.7h2.8v1.6h-2.8zM842.3 270.3h2.8v1.5h-2.8zM842.3 272.8h2.8v1.5h-2.8zM842.3 275.4h2.8v1.5h-2.8zM842.3 277.8h2.8v1.4h-2.8zM842.3 280.3h2.8v1.4h-2.8zM846.2 260h1.5v2.7h-1.5zM848.7 260h1.5v2.7h-1.5zM851.1 260h1.4v2.7h-1.4zM853.6 260h1.4v2.7h-1.4zM856 260h1.4v2.7h-1.4zM858.4 260h1.4v2.7h-1.4zM860.8 260h1.3v2.7h-1.3zM863.2 260h1.3v2.7h-1.3zM846.2 263.7h2.8v1.2h-2.8zM846.2 265.9h2.8v1.2h-2.8zM846.2 268h2.8v1.2h-2.8zM846.2 270.2h2.8v1.1h-2.8zM846.2 272.3h2.8v1.1h-2.8zM846.2 274.4h2.8v1.1h-2.8zM846.2 276.5h2.8v1.1h-2.8zM846.2 278.6h2.8v1.1h-2.8zM846.2 280.7h2.8v1h-2.8zM850 263.7h1.4v2.3h-1.4zM852.4 263.7h1.4v2.3h-1.4zM854.7 263.7h1.2v2.3h-1.2zM856.9 263.7h1.2v2.3h-1.2zM859.1 263.7h1.1v2.3h-1.1zM861.2 263.7h1.1v2.3h-1.1zM863.4 263.7h1.1v2.3h-1.1zM850 266.9h1v2.5h-1zM852 266.9h1v2.5h-1zM853.9 266.9h1v2.5h-1zM855.9 266.9h1v2.5h-1zM857.9 266.9h1v2.5h-1zM859.8 266.9h0.9v2.5h-0.9zM861.8 266.9h0.9v2.5h-0.9zM863.6 266.9h0.9v2.5h-0.9zM850 270.4h2v1.1h-2zM850 272.5h2v1.1h-2zM850 274.6h2v1.1h-2zM850 276.7h2v1h-2zM850 278.7h2v1h-2zM850 280.7h2v1h-2zM853 270.4h2.1v0.8h-2.1zM853 272.2h2.1v0.8h-2.1zM853 274h2.1v0.8h-2.1zM853 275.8h2.1v0.8h-2.1zM853 277.6h2.1v0.7h-2.1zM853 279.3h2.1v0.7h-2.1zM853 281h2.1v0.7h-2.1zM856.1 270.4h1v1.6h-1zM858.1 270.4h1v1.6h-1zM860 270.4h0.8v1.6h-0.8zM861.9 270.4h0.8v1.6h-0.8zM863.7 270.4h0.8v1.6h-0.8zM856.1 273h0.6v1.9h-0.6zM857.7 273h0.6v1.9h-0.6zM859.3 273h0.6v1.9h-0.6zM860.9 273h0.6v1.9h-0.6zM862.4 273h0.6v1.9h-0.6zM863.9 273h0.6v1.9h-0.6zM856.1 275.9h1.4v0.8h-1.4zM856.1 277.7h1.4v0.7h-1.4zM856.1 279.4h1.4v0.7h-1.4zM856.1 281.1h1.4v0.6h-1.4zM858.5 275.8h1.6v0.6h-1.6zM858.5 277.3h1.6v0.6h-1.6zM858.5 278.6h1.6v0.5h-1.6zM858.5 280h1.6v0.5h-1.6zM858.5 281.3h1.6v0.5h-1.6zM861 275.9h0.6v1.2h-0.6zM862.5 275.9h0.6v1.2h-0.6zM864 275.9h0.6v1.2h-0.6zM861 278.1h0.6v1h-0.6zM862.5 278.1h0.6v1h-0.6zM864 278.1h0.6v1h-0.6zM861.1 280.1h1.3v0.5h-1.3zM861.1 281.3h1.3v0.5h-1.3zM863.3 280.2h0.4v1.5h-0.4zM864.3 280.2h0.4v1.5h-0.4z"/><path fill="#ffbb78" d="M707.5 284.5h6.3v13.9h-6.3zM708.2 299.4h5.6v11h-5.6zM708.4 311.4h5.4v9.9h-5.4zM708.6 322.3h5.2v9.3h-5.2zM708.9 332.6h4.9v9.2h-4.9zM708.9 342.8h4.9v8.6h-4.9zM709.3 352.4h4.5v8.2h-4.5zM709.5 361.6h4.3v7.5h-4.3zM704.4 370.1h4.2v7h-4.2zM709.6 370.1h4.2v7h-4.2zM705.2 378.1h3.8v7h-3.8zM710 378.1h3.8v7h-3.8zM705.8 386.1h3.5v6.1h-3.5zM710.3 386.1h3.5v6.1h-3.5zM706.3 393.2h3.3v6.1h-3.3zM710.6 393.2h3.2v6.1h-3.2zM706.6 400.3h3.1v5.6h-3.1zM710.7 400.3h3.1v5.6h-3.1zM707.2 406.9h2.8v5.1h-2.8zM711 406.9h2.8v5.1h-2.8zM707.7 413.1h2.6v5.2h-2.6zM711.2 413.1h2.6v5.2h-2.6zM708.4 419.2h2.2v4.6h-2.2zM711.6 419.2h2.2v4.6h-2.2zM708.5 424.8h2.1v4.2h-2.1zM711.7 424.8h2.1v4.2h-2.1zM708.9 430h2v3.8h-2zM711.9 430h1.9v3.8h-1.9zM709.2 434.8h1.8v3.4h-1.8zM712 434.8h1.8v3.4h-1.8zM706.9 439.2h1.7v3.1h-1.7zM709.6 439.2h1.6v3.1h-1.6zM712.2 439.2h1.6v3.1h-1.6zM707.7 443.3h1.4v3.2h-1.4zM710.1 443.3h1.4v3.2h-1.4zM712.4 443.3h1.4v3.2h-1.4zM708.5 447.5h1.2v2.9h-1.2zM710.6 447.5h1.1v2.9h-1.1zM712.7 447.5h1.1v2.9h-1.1zM708.8 451.3h1v2.3h-1zM710.8 451.3h1v2.3h-1zM712.8 451.3h1v2.3h-1zM709.4 454.6h0.8v2.1h-0.8zM711.2 454.6h0.8v2.1h-0.8zM713 454.6h0.8v2.1h-0.8zM708.8 457.7h0.6v1.8h-0.6zM710.4 457.7h0.6v1.8h-0.6zM711.8 457.7h0.6v1.8h-0.6zM713.3 457.7h0.6v1.8h-0.6zM707.3 460.5h1.6v0.6h-1.6zM707.3 462h1.6v0.6h-1.6zM707.3 463.5h1.6v0.6h-1.6zM707.3 465h1.6v0.6h-1.6zM707.3 466.3h1.6v0.5h-1.6zM709.9 460.5h0.7v1.1h-0.7zM711.5 460.5h0.7v1.1h-0.7zM713.2 460.5h0.6v1.1h-0.6zM709.7 462.6h0.5v1.5h-0.5zM711 462.6h0.5v1.5h-0.5zM712.2 462.6h0.5v1.5h-0.5zM713.5 462.6h0.5v1.5h-0.5zM709.9 465h1.2v0.6h-1.2zM709.9 466.4h1.2v0.5h-1.2zM712 465h0.9v0.5h-0.9zM712 466.4h0.9v0.5h-0.9zM713.7 465.1h0.3v1.7h-0.3z"/><path fill="#9467bd" d="M715.4 284.5h8.9v12h-8.9zM725.3 284.5h8v12h-8zM734.3 284.5h7.9v12h-7.9zM743.3 284.5h7.6v12h-7.6zM751.9 284.5h7.1v12h-7.1zM760 284.5h7.1v12h-7.1zM768.1 284.5h6.7v12h-6.7zM775.8 284.5h6.3v12h-6.3zM783.1 284.5h6.2v12h-6.2zM715.4 297.5h7.2v10.4h-7.2zM723.6 297.5h6.8v10.4h-6.8zM731.4 297.5h6.7v10.4h-6.7zM739.1 297.5h6.1v10.4h-6.1zM746.2 297.5h5.9v10.4h-5.9zM753.1 297.5h5.8v10.4h-5.8zM759.9 297.5h5.2v10.4h-5.2zM766.1 297.5h5.2v10.4h-5.2zM772.3 297.5h5v10.4h-5zM778.3 297.5h5v10.4h-5zM784.3 297.5h5v10.4h-5zM715.4 308.9h5.8v9h-5.8zM722.2 308.9h5.7v9h-5.7zM728.9 308.9h5.4v9h-5.4zM735.4 308.9h5.3v9h-5.3zM741.7 308.9h5.2v9h-5.2zM747.9 308.9h5.2v9h-5.2zM754.1 308.9h5.2v9h-5.2zM760.3 308.9h5.1v9h-5.1zM766.4 308.9h5v9h-5zM772.4 308.9h5v9h-5zM778.4 308.9h5v9h-5zM784.4 308.9h4.9v9h-4.9zM715.4 318.9h5v8.7h-5zM721.4 318.9h5v8.7h-5zM727.4 318.9h4.9v8.7h-4.9zM733.4 318.9h4.9v8.7h-4.9zM739.3 318.9h4.8v8.7h-4.8zM745.1 318.9h4.8v8.7h-4.8zM750.8 318.9h4.7v8.7h-4.7zM756.6 318.9h4.7v8.7h-4.7zM762.3 318.9h4.7v8.7h-4.7zM767.9 318.9h4.6v8.7h-4.6zM773.6 318.9h4.6v8.7h-4.6zM779.2 318.9h4.6v8.7h-4.6zM784.8 318.9h4.5v8.7h-4.5zM715.4 328.5h4.9v8h-4.9zM721.3 328.5h4.8v8h-4.8zM727.1 328.5h4.8v8h-4.8zM732.9 328.5h4.8v8h-4.8zM738.7 328.5h4.8v8h-4.8zM744.5 328.5h4.8v8h-4.8zM750.3 328.5h4.8v8h-4.8zM756.1 328.5h4.7v8h-4.7zM761.8 328.5h4.7v8h-4.7zM767.6 328.5h4.7v8h-4.7zM773.3 328.5h4.7v8h-4.7zM779 328.5h4.7v8h-4.7zM784.6 328.5h4.7v8h-4.7zM715.4 337.5h4.5v8.1h-4.5zM720.9 337.5h4.5v8.1h-4.5zM726.4 337.5h4.4v8.1h-4.4zM731.8 337.5h4.4v8.1h-4.4zM737.2 337.5h4.4v8.1h-4.4zM742.6 337.5h4.3v8.1h-4.3zM748 337.5h4.3v8.1h-4.3zM753.3 337.5h4.3v8.1h-4.3zM758.6 337.5h4.3v8.1h-4.3zM763.9 337.5h4.3v8.1h-4.3zM769.2 337.5h4.3v8.1h-4.3zM774.5 337.5h4.3v8.1h-4.3zM779.8 337.5h4.3v8.1h-4.3zM785.1 337.5h4.2v8.1h-4.2zM715.4 346.6h4.5v7.6h-4.5zM720.9 346.6h4.5v7.6h-4.5zM726.3 346.6h4.4v7.6h-4.4zM731.8 346.6h4.4v7.6h-4.4zM737.2 346.6h4.4v7.6h-4.4zM742.6 346.6h4.4v7.6h-4.4zM748 346.6h4.4v7.6h-4.4zM753.4 346.6h4.3v7.6h-4.3zM758.7 346.6h4.3v7.6h-4.3zM764 346.6h4.3v7.6h-4.3zM769.3 346.6h4.3v7.6h-4.3zM774.6 346.6h4.2v7.6h-4.2zM779.8 346.6h4.2v7.6h-4.2zM785.1 346.6h4.2v7.6h-4.2zM715.4 355.2h4.4v7.2h-4.4zM720.8 355.2h4.4v7.2h-4.4zM726.3 355.2h4.4v7.2h-4.4zM731.7 355.2h4.4v7.2h-4.4zM737.1 355.2h4.4v7.2h-4.4zM742.5 355.2h4.4v7.2h-4.4zM747.9 355.2h4.3v7.2h-4.3zM753.3 355.2h4.3v7.2h-4.3zM758.6 355.2h4.3v7.2h-4.3zM763.9 355.2h4.3v7.2h-4.3zM769.2 355.2h4.3v7.2h-4.3zM774.5 355.2h4.3v7.2h-4.3zM779.8 355.2h4.3v7.2h-4.3zM785.1 355.2h4.2v7.2h-4.2zM715.4 363.4h4.1v7.4h-4.1zM720.5 363.4h4.1v7.4h-4.1zM725.6 363.4h4.1v7.4h-4.1zM730.7 363.4h4.1v7.4h-4.1zM735.8 363.4h4.1v7.4h-4.1zM740.8 363.4h4.1v7.4h-4.1zM745.9 363.4h4.1v7.4h-4.1zM751 363.4h4v7.4h-4zM756 363.4h4v7.4h-4zM760.9 363.4h3.9v7.4h-3.9zM765.9 363.4h3.9v7.4h-3.9zM770.8 363.4h3.9v7.4h-3.9zM775.7 363.4h3.9v7.4h-3.9zM780.6 363.4h3.9v7.4h-3.9zM785.5 363.4h3.8v7.4h-3.8zM715.4 371.8h4.2v6.8h-4.2zM720.6 371.8h4.2v6.8h-4.2zM725.8 371.8h4.1v6.8h-4.1zM730.9 371.8h4.1v6.8h-4.1zM736 371.8h4v6.8h-4zM741 371.8h4v6.8h-4zM746 371.8h4v6.8h-4zM751 371.8h4v6.8h-4zM755.9 371.8h3.9v6.8h-3.9zM760.9 371.8h3.9v6.8h-3.9zM765.8 371.8h3.9v6.8h-3.9zM770.7 371.8h3.9v6.8h-3.9zM775.7 371.8h3.9v6.8h-3.9zM780.5 371.8h3.9v6.8h-3.9zM785.4 371.8h3.9v6.8h-3.9zM715.4 379.6h3.8v6.9h-3.8zM720.2 379.6h3.8v6.9h-3.8zM725 379.6h3.8v6.9h-3.8zM729.8 379.6h3.8v6.9h-3.8zM734.6 379.6h3.7v6.9h-3.7zM739.3 379.6h3.7v6.9h-3.7zM744 379.6h3.7v6.9h-3.7zM748.7 379.6h3.7v6.9h-3.7zM753.4 379.6h3.7v6.9h-3.7zM758.1 379.6h3.7v6.9h-3.7zM762.7 379.6h3.6v6.9h-3.6zM767.4 379.6h3.6v6.9h-3.6zM772 379.6h3.6v6.9h-3.6zM776.6 379.6h3.6v6.9h-3.6zM781.2 379.6h3.6v6.9h-3.6zM785.8 379.6h3.5v6.9h-3.5zM715.4 387.4h3.8v6.4h-3.8zM720.2 387.4h3.8v6.4h-3.8zM724.9 387.4h3.8v6.4h-3.8zM729.7 387.4h3.7v6.4h-3.7zM734.4 387.4h3.7v6.4h-3.7zM739.2 387.4h3.7v6.4h-3.7zM743.9 387.4h3.7v6.4h-3.7zM748.6 387.4h3.7v6.4h-3.7zM753.3 387.4h3.7v6.4h-3.7zM758 387.4h3.7v6.4h-3.7zM762.6 387.4h3.6v6.4h-3.6zM767.3 387.4h3.6v6.4h-3.6zM771.9 387.4h3.6v6.4h-3.6zM776.5 387.4h3.6v6.4h-3.6zM781.1 387.4h3.6v6.4h-3.6zM785.7 387.4h3.6v6.4h-3.6zM715.4 394.9h6.3v3.7h-6.3zM715.4 399.6h6.3v3.7h-6.3zM715.4 404.2h6.3v3.6h-6.3zM715.4 408.8h6.3v3.6h-6.3zM715.4 413.4h6.3v3.6h-6.3zM715.4 418.1h6.3v3.6h-6.3zM715.4 422.7h6.3v3.6h-6.3zM715.4 427.2h6.3v3.6h-6.3zM715.4 431.8h6.3v3.6h-6.3zM715.4 436.3h6.3v3.6h-6.3zM715.4 440.9h6.3v3.6h-6.3zM715.4 445.5h6.3v3.5h-6.3zM715.4 450h6.3v3.5h-6.3zM715.4 454.5h6.3v3.5h-6.3zM715.4 459h6.3v3.4h-6.3zM715.4 463.4h6.3v3.4h-6.3zM722.7 394.9h3.6v5.9h-3.6zM727.3 394.9h3.6v5.9h-3.6zM731.9 394.9h3.6v5.9h-3.6zM736.5 394.9h3.6v5.9h-3.6zM741 394.9h3.5v5.9h-3.5zM745.6 394.9h3.5v5.9h-3.5zM750.1 394.9h3.5v5.9h-3.5zM754.6 394.9h3.5v5.9h-3.5zM759.1 394.9h3.5v5.9h-3.5zM763.6 394.9h3.5v5.9h-3.5zM768.1 394.9h3.5v5.9h-3.5zM772.6 394.9h3.4v5.9h-3.4zM777 394.9h3.4v5.9h-3.4zM781.5 394.9h3.4v5.9h-3.4zM785.9 394.9h3.4v5.9h-3.4zM722.7 401.8h6.1v3.2h-6.1zM722.7 406h6.1v3.2h-6.1zM722.7 410.3h6.1v3.2h-6.1zM722.7 414.5h6.1v3.2h-6.1zM722.7 418.7h6.1v3.2h-6.1zM722.7 422.9h6.1v3.2h-6.1zM722.7 427.1h6.1v3.2h-6.1zM722.7 431.3h6.1v3.2h-6.1zM722.7 435.4h6.1v3.1h-6.1zM722.7 439.6h6.1v3.1h-6.1zM722.7 443.6h6.1v3.1h-6.1zM722.7 447.7h6.1v3h-6.1zM722.7 451.7h6.1v3h-6.1zM722.7 455.8h6.1v3h-6.1zM722.7 459.8h6.1v3h-6.1zM722.7 463.8h6.1v3h-6.1zM729.8 401.8h3.2v5.7h-3.2zM733.9 401.8h3.2v5.7h-3.2zM738.1 401.8h3.2v5.7h-3.2zM742.3 401.8h3.1v5.7h-3.1zM746.4 401.8h3.1v5.7h-3.1zM750.5 401.8h3.1v5.7h-3.1zM754.6 401.8h3v5.7h-3zM758.6 401.8h3v5.7h-3zM762.6 401.8h3v5.7h-3zM766.6 401.8h3v5.7h-3zM770.6 401.8h3v5.7h-3zM774.6 401.8h2.9v5.7h-2.9zM778.6 401.8h2.9v5.7h-2.9zM782.5 401.8h2.9v5.7h-2.9zM786.4 401.8h2.9v5.7h-2.9zM729.8 408.5h5.3v3.1h-5.3zM729.8 412.6h5.3v3h-5.3zM729.8 416.6h5.3v3h-5.3zM729.8 420.7h5.3v3h-5.3zM729.8 424.7h5.3v3h-5.3zM729.8 428.7h5.3v3h-5.3zM729.8 432.6h5.3v3h-5.3zM729.8 436.6h5.3v3h-5.3zM729.8 440.6h5.3v2.9h-5.3zM729.8 444.5h5.3v2.9h-5.3zM729.8 448.4h5.3v2.9h-5.3zM729.8 452.3h5.3v2.9h-5.3zM729.8 456.2h5.3v2.9h-5.3zM729.8 460.1h5.3v2.9h-5.3zM729.8 464h5.3v2.8h-5.3zM736 408.5h3v5h-3zM740 408.5h3v5h-3zM744 408.5h2.9v5h-2.9zM747.9 408.5h2.9v5h-2.9zM751.8 408.5h2.9v5h-2.9zM755.8 408.5h2.9v5h-2.9zM759.7 408.5h2.9v5h-2.9zM763.6 408.5h2.9v5h-2.9zM767.4 408.5h2.8v5h-2.8zM771.3 408.5h2.8v5h-2.8zM775.1 408.5h2.8v5h-2.8zM778.9 408.5h2.8v5h-2.8zM782.7 408.5h2.8v5h-2.8zM786.5 408.5h2.8v5h-2.8zM736 414.5h4.8v2.9h-4.8zM736 418.4h4.8v2.9h-4.8zM736 422.3h4.8v2.9h-4.8zM736 426.2h4.8v2.9h-4.8zM736 430h4.8v2.8h-4.8zM736 433.9h4.8v2.8h-4.8zM736 437.7h4.8v2.8h-4.8zM736 441.5h4.8v2.8h-4.8zM736 445.3h4.8v2.8h-4.8zM736 449.1h4.8v2.8h-4.8zM736 452.9h4.8v2.8h-4.8zM736 456.6h4.8v2.7h-4.8zM736 460.4h4.8v2.7h-4.8zM736 464.1h4.8v2.7h-4.8zM741.9 414.5h2.8v4.6h-2.8zM745.7 414.5h2.8v4.6h-2.8zM749.5 414.5h2.8v4.6h-2.8zM753.3 414.5h2.8v4.6h-2.8zM757.1 414.5h2.7v4.6h-2.7zM760.8 414.5h2.7v4.6h-2.7zM764.5 414.5h2.7v4.6h-2.7zM768.2 414.5h2.7v4.6h-2.7zM772 414.5h2.7v4.6h-2.7zM775.6 414.5h2.7v4.6h-2.7zM779.3 414.5h2.7v4.6h-2.7zM783 414.5h2.7v4.6h-2.7zM786.7 414.5h2.6v4.6h-2.6zM741.9 420.1h4.8v2.5h-4.8zM741.9 423.6h4.8v2.5h-4.8zM741.9 427.1h4.8v2.5h-4.8zM741.9 430.6h4.8v2.5h-4.8zM741.9 434h4.8v2.4h-4.8zM741.9 437.5h4.8v2.4h-4.8zM741.9 440.9h4.8v2.4h-4.8zM741.9 444.3h4.8v2.4h-4.8zM741.9 447.7h4.8v2.4h-4.8zM741.9 451.1h4.8v2.4h-4.8zM741.9 454.5h4.8v2.4h-4.8zM741.9 457.8h4.8v2.3h-4.8zM741.9 461.2h4.8v2.3h-4.8zM741.9 464.5h4.8v2.3h-4.8zM747.7 420.1h2.4v4.5h-2.4zM751.1 420.1h2.4v4.5h-2.4zM754.5 420.1h2.4v4.5h-2.4zM757.9 420.1h2.4v4.5h-2.4zM761.3 420.1h2.3v4.5h-2.3zM764.6 420.1h2.3v4.5h-2.3zM767.9 420.1h2.3v4.5h-2.3zM771.1 420.1h2.2v4.5h-2.2zM774.4 420.1h2.2v4.5h-2.2zM777.6 420.1h2.2v4.5h-2.2zM780.8 420.1h2.2v4.5h-2.2zM784 420.1h2.2v4.5h-2.2zM787.1 420.1h2.2v4.5h-2.2zM747.7 425.6h4.3v2.3h-4.3zM747.7 428.9h4.3v2.3h-4.3zM747.7 432.2h4.3v2.3h-4.3zM747.7 435.5h4.3v2.3h-4.3zM747.7 438.8h4.3v2.3h-4.3zM747.7 442.1h4.3v2.3h-4.3zM747.7 445.4h4.3v2.2h-4.3zM747.7 448.6h4.3v2.2h-4.3zM747.7 451.9h4.3v2.2h-4.3zM747.7 455.1h4.3v2.2h-4.3zM747.7 458.3h4.3v2.2h-4.3zM747.7 461.4h4.3v2.2h-4.3zM747.7 464.6h4.3v2.2h-4.3zM752.9 425.6h2.2v4.2h-2.2zM756.2 425.6h2.2v4.2h-2.2zM759.4 425.6h2.2v4.2h-2.2zM762.5 425.6h2.2v4.2h-2.2zM765.7 425.6h2.2v4.2h-2.2zM768.9 425.6h2.1v4.2h-2.1zM772 425.6h2.1v4.2h-2.1zM775.1 425.6h2.1v4.2h-2.1zM778.2 425.6h2.1v4.2h-2.1zM781.2 425.6h2.1v4.2h-2.1zM784.3 425.6h2v4.2h-2zM787.3 425.6h2v4.2h-2zM752.9 430.8h3.9v2.1h-3.9zM752.9 434h3.9v2.1h-3.9zM752.9 437.1h3.9v2.1h-3.9zM752.9 440.2h3.9v2.1h-3.9zM752.9 443.3h3.9v2.1h-3.9zM752.9 446.4h3.9v2.1h-3.9zM752.9 449.5h3.9v2.1h-3.9zM752.9 452.6h3.9v2.1h-3.9zM752.9 455.6h3.9v2h-3.9zM752.9 458.7h3.9v2h-3.9zM752.9 461.7h3.9v2h-3.9zM752.9 464.8h3.9v2h-3.9zM757.8 430.8h2.1v3.9h-2.1zM760.9 430.8h2v3.9h-2zM763.9 430.8h2v3.9h-2zM767 430.8h2v3.9h-2zM770 430.8h2v3.9h-2zM773 430.8h2v3.9h-2zM775.9 430.8h2v3.9h-2zM778.9 430.8h1.9v3.9h-1.9zM781.8 430.8h1.9v3.9h-1.9zM784.7 430.8h1.8v3.9h-1.8zM787.5 430.8h1.8v3.9h-1.8zM757.8 435.7h3.5v2h-3.5zM757.8 438.7h3.5v2h-3.5zM757.8 441.7h3.5v2h-3.5zM757.8 444.7h3.5v2h-3.5zM757.8 447.7h3.5v2h-3.5zM757.8 450.7h3.5v2h-3.5zM757.8 453.7h3.5v1.9h-3.5zM757.8 456.6h3.5v1.9h-3.5zM757.8 459.5h3.5v1.8h-3.5zM757.8 462.3h3.5v1.8h-3.5zM757.8 465h3.5v1.8h-3.5zM762.3 435.7h1.9v3.3h-1.9zM765.2 435.7h1.9v3.3h-1.9zM768.1 435.7h1.9v3.3h-1.9zM770.9 435.7h1.8v3.3h-1.8zM773.7 435.7h1.8v3.3h-1.8zM776.5 435.7h1.8v3.3h-1.8zM779.3 435.7h1.7v3.3h-1.7zM782.1 435.7h1.7v3.3h-1.7zM784.8 435.7h1.7v3.3h-1.7zM787.6 435.7h1.7v3.3h-1.7zM762.3 440h3.5v1.6h-3.5zM762.3 442.6h3.5v1.6h-3.5zM762.3 445.2h3.5v1.6h-3.5zM762.3 447.7h3.5v1.5h-3.5zM762.3 450.3h3.5v1.5h-3.5zM762.3 452.8h3.5v1.5h-3.5zM762.3 455.3h3.5v1.5h-3.5zM762.3 457.8h3.5v1.5h-3.5zM762.3 460.3h3.5v1.5h-3.5zM762.3 462.8h3.5v1.5h-3.5zM762.3 465.3h3.5v1.5h-3.5zM766.8 440h1.8v3h-1.8zM769.6 440h1.8v3h-1.8zM772.4 440h1.7v3h-1.7zM775.1 440h1.6v3h-1.6zM777.7 440h1.6v3h-1.6zM780.2 440h1.5v3h-1.5zM782.8 440h1.5v3h-1.5zM785.3 440h1.5v3h-1.5zM787.8 440h1.5v3h-1.5zM766.8 444h1.4v3.1h-1.4zM769.3 444h1.4v3.1h-1.4zM771.7 444h1.4v3.1h-1.4zM774.1 444h1.4v3.1h-1.4zM776.5 444h1.3v3.1h-1.3zM778.8 444h1.3v3.1h-1.3zM781.1 444h1.3v3.1h-1.3zM783.4 444h1.3v3.1h-1.3zM785.7 444h1.3v3.1h-1.3zM788.1 444h1.2v3.1h-1.2zM766.8 448.1h2.6v1.5h-2.6zM766.8 450.6h2.6v1.5h-2.6zM766.8 453.1h2.6v1.5h-2.6zM766.8 455.6h2.6v1.5h-2.6zM766.8 458.1h2.6v1.4h-2.6zM766.8 460.5h2.6v1.4h-2.6zM766.8 463h2.6v1.4h-2.6zM766.8 465.4h2.6v1.4h-2.6zM770.5 448.1h2.8v1.3h-2.8zM770.5 450.4h2.8v1.3h-2.8zM770.5 452.7h2.8v1.2h-2.8zM770.5 454.9h2.8v1.2h-2.8zM770.5 457.2h2.8v1.2h-2.8zM770.5 459.3h2.8v1.1h-2.8zM770.5 461.5h2.8v1.1h-2.8zM770.5 463.6h2.8v1.1h-2.8zM770.5 465.7h2.8v1.1h-2.8zM774.3 448.1h1.4v2.3h-1.4zM776.7 448.1h1.4v2.3h-1.4zM779 448.1h1.3v2.3h-1.3zM781.3 448.1h1.3v2.3h-1.3zM783.6 448.1h1.3v2.3h-1.3zM785.9 448.1h1.2v2.3h-1.2zM788.1 448.1h1.2v2.3h-1.2zM774.3 451.4h1.1v2.4h-1.1zM776.4 451.4h1.1v2.4h-1.1zM778.5 451.4h1v2.4h-1zM780.5 451.4h1v2.4h-1zM782.5 451.4h1v2.4h-1zM784.4 451.4h1v2.4h-1zM786.4 451.4h1v2.4h-1zM788.4 451.4h0.9v2.4h-0.9zM774.3 454.8h2.3v0.9h-2.3zM774.3 456.7h2.3v0.9h-2.3zM774.3 458.6h2.3v0.9h-2.3zM774.3 460.6h2.3v0.9h-2.3zM774.3 462.4h2.3v0.8h-2.3zM774.3 464.2h2.3v0.8h-2.3zM774.3 466h2.3v0.8h-2.3zM777.5 454.8h0.9v2h-0.9zM779.5 454.8h0.9v2h-0.9zM781.4 454.8h0.8v2h-0.8zM783.2 454.8h0.8v2h-0.8zM785 454.8h0.8v2h-0.8zM786.8 454.8h0.8v2h-0.8zM788.6 454.8h0.7v2h-0.7zM777.5 457.8h1.9v0.8h-1.9zM777.5 459.5h1.9v0.7h-1.9zM777.5 461.3h1.9v0.7h-1.9zM777.5 462.9h1.9v0.7h-1.9zM777.5 464.6h1.9v0.7h-1.9zM777.5 466.2h1.9v0.6h-1.9zM780.4 457.8h0.7v1.7h-0.7zM782.1 457.8h0.7v1.7h-0.7zM783.8 457.8h0.7v1.7h-0.7zM785.4 457.8h0.7v1.7h-0.7zM787.1 457.8h0.7v1.7h-0.7zM788.7 457.8h0.6v1.7h-0.6zM780.4 460.5h1.6v0.6h-1.6zM780.4 462h1.6v0.6h-1.6zM780.4 463.5h1.6v0.6h-1.6zM780.4 464.9h1.6v0.6h-1.6zM780.4 466.3h1.6v0.6h-1.6zM783 460.5h0.6v1.3h-0.6zM784.5 460.5h0.6v1.3h-0.6zM786 460.5h0.6v1.3h-0.6zM787.5 460.5h0.6v1.3h-0.6zM788.9 460.5h0.5v1.3h-0.5zM783 462.7h1.4v0.5h-1.4zM783 464h1.4v0.5h-1.4zM783 465.2h1.4v0.5h-1.4zM783 466.4h1.4v0.5h-1.4zM785.3 462.8h0.5v1.2h-0.5zM786.6 462.8h0.5v1.2h-0.5zM787.8 462.8h0.5v1.2h-0.5zM789 462.8h0.5v1.2h-0.5zM785.5 465h0.9v0.6h-0.9zM785.5 466.3h0.9v0.5h-0.9zM787.3 465h0.6v0.6h-0.6zM787.3 466.4h0.6v0.5h-0.6zM788.8 465h0.5v0.6h-0.5zM788.8 466.4h0.5v0.5h-0.5z"/><path fill="#7f7f7f" d="M791.5 284.5h9.4v12.9h-9.4zM801.9 284.5h9.4v12.9h-9.4zM812.2 284.5h9v12.9h-9zM822.3 284.5h8.9v12.9h-8.9zM832.2 284.5h8v12.9h-8zM841.2 284.5h7.9v12.9h-7.9zM850.1 284.5h6.9v12.9h-6.9zM858 284.5h6.5v12.9h-6.5zM791.5 298.4h7.6v11h-7.6zM800.1 298.4h7.1v11h-7.1zM808.2 298.4h6.9v11h-6.9zM816.1 298.4h6.9v11h-6.9zM824 298.4h6.8v11h-6.8zM831.8 298.4h6.6v11h-6.6zM839.4 298.4h5.8v11h-5.8zM846.2 298.4h5.7v11h-5.7zM852.9 298.4h5.3v11h-5.3zM859.3 298.4h5.2v11h-5.2zM791.5 310.4h6v9.4h-6zM798.5 310.4h5.9v9.4h-5.9zM805.5 310.4h5.9v9.4h-5.9zM812.4 310.4h5.9v9.4h-5.9zM819.2 310.4h5.8v9.4h-5.8zM826 310.4h5.7v9.4h-5.7zM832.7 310.4h5.7v9.4h-5.7zM839.4 310.4h5.6v9.4h-5.6zM846 310.4h5.6v9.4h-5.6zM852.6 310.4h5.5v9.4h-5.5zM859.1 310.4h5.4v9.4h-5.4zM791.5 320.8h5.5v9.2h-5.5zM798 320.8h5.3v9.2h-5.3zM804.3 320.8h5.3v9.2h-5.3zM810.5 320.8h5.2v9.2h-5.2zM816.8 320.8h5.2v9.2h-5.2zM823 320.8h5.2v9.2h-5.2zM829.2 320.8h5.2v9.2h-5.2zM835.3 320.8h5.1v9.2h-5.1zM841.4 320.8h5.1v9.2h-5.1zM847.5 320.8h5.1v9.2h-5.1zM853.6 320.8h5v9.2h-5zM859.6 320.8h4.9v9.2h-4.9zM791.5 331h5.3v8.4h-5.3zM797.8 331h5.3v8.4h-5.3zM804 331h5.2v8.4h-5.2zM810.3 331h5.2v8.4h-5.2zM816.5 331h5.2v8.4h-5.2zM822.6 331h5.2v8.4h-5.2zM828.8 331h5.1v8.4h-5.1zM835 331h5.1v8.4h-5.1zM841.1 331h5.1v8.4h-5.1zM847.2 331h5.1v8.4h-5.1zM853.3 331h5.1v8.4h-5.1zM859.4 331h5.1v8.4h-5.1zM791.5 340.5h4.9v8.8h-4.9zM797.4 340.5h4.8v8.8h-4.8zM803.2 340.5h4.8v8.8h-4.8zM809 340.5h4.8v8.8h-4.8zM814.8 340.5h4.8v8.8h-4.8zM820.5 340.5h4.7v8.8h-4.7zM826.2 340.5h4.7v8.8h-4.7zM831.9 340.5h4.6v8.8h-4.6zM837.6 340.5h4.6v8.8h-4.6zM843.2 340.5h4.6v8.8h-4.6zM848.8 340.5h4.6v8.8h-4.6zM854.4 340.5h4.6v8.8h-4.6zM860 340.5h4.5v8.8h-4.5zM791.5 350.2h4.8v8.2h-4.8zM797.3 350.2h4.8v8.2h-4.8zM803.1 350.2h4.8v8.2h-4.8zM808.9 350.2h4.8v8.2h-4.8zM814.7 350.2h4.8v8.2h-4.8zM820.4 350.2h4.7v8.2h-4.7zM826.1 350.2h4.7v8.2h-4.7zM831.8 350.2h4.7v8.2h-4.7zM837.5 350.2h4.7v8.2h-4.7zM843.2 350.2h4.6v8.2h-4.6zM848.8 350.2h4.6v8.2h-4.6zM854.4 350.2h4.6v8.2h-4.6zM860 350.2h4.5v8.2h-4.5zM791.5 359.4h4.5v8.2h-4.5zM797 359.4h4.5v8.2h-4.5zM802.4 359.4h4.4v8.2h-4.4zM807.9 359.4h4.4v8.2h-4.4zM813.3 359.4h4.4v8.2h-4.4zM818.7 359.4h4.4v8.2h-4.4zM824.1 359.4h4.2v8.2h-4.2zM829.3 359.4h4.2v8.2h-4.2zM834.5 359.4h4.2v8.2h-4.2zM839.7 359.4h4.2v8.2h-4.2zM844.9 359.4h4.2v8.2h-4.2zM850.1 359.4h4.1v8.2h-4.1zM855.2 359.4h4.1v8.2h-4.1zM860.4 359.4h4.1v8.2h-4.1zM791.5 368.6h4.4v7.7h-4.4zM796.9 368.6h4.4v7.7h-4.4zM802.3 368.6h4.3v7.7h-4.3zM807.7 368.6h4.3v7.7h-4.3zM813 368.6h4.3v7.7h-4.3zM818.3 368.6h4.3v7.7h-4.3zM823.6 368.6h4.3v7.7h-4.3zM829 368.6h4.3v7.7h-4.3zM834.2 368.6h4.3v7.7h-4.3zM839.5 368.6h4.3v7.7h-4.3zM844.8 368.6h4.2v7.7h-4.2zM850 368.6h4.2v7.7h-4.2zM855.2 368.6h4.2v7.7h-4.2zM860.4 368.6h4.1v7.7h-4.1zM791.5 377.3h4.4v7.2h-4.4zM796.9 377.3h4.4v7.2h-4.4zM802.3 377.3h4.4v7.2h-4.4zM807.7 377.3h4.4v7.2h-4.4zM813 377.3h4.3v7.2h-4.3zM818.4 377.3h4.3v7.2h-4.3zM823.7 377.3h4.3v7.2h-4.3zM829 377.3h4.3v7.2h-4.3zM834.3 377.3h4.3v7.2h-4.3zM839.5 377.3h4.2v7.2h-4.2zM844.8 377.3h4.2v7.2h-4.2zM850 377.3h4.2v7.2h-4.2zM855.2 377.3h4.2v7.2h-4.2zM860.4 377.3h4.1v7.2h-4.1zM791.5 385.5h4.1v7.3h-4.1zM796.6 385.5h4v7.3h-4zM801.6 385.5h4v7.3h-4zM806.6 385.5h4v7.3h-4zM811.7 385.5h4v7.3h-4zM816.7 385.5h4v7.3h-4zM821.7 385.5h4v7.3h-4zM826.7 385.5h3.9v7.3h-3.9zM831.6 385.5h3.9v7.3h-3.9zM836.5 385.5h3.9v7.3h-3.9zM841.4 385.5h3.9v7.3h-3.9zM846.2 385.5h3.8v7.3h-3.8zM851.1 385.5h3.8v7.3h-3.8zM855.9 385.5h3.8v7.3h-3.8zM860.7 385.5h3.8v7.3h-3.8zM791.5 393.9h6.8v4.1h-6.8zM791.5 398.9h6.8v4.1h-6.8zM791.5 404h6.8v4h-6.8zM791.5 409h6.8v4h-6.8zM791.5 414.1h6.8v4h-6.8zM791.5 419.1h6.8v4h-6.8zM791.5 424.1h6.8v4h-6.8zM791.5 429.1h6.8v4h-6.8zM791.5 434.1h6.8v4h-6.8zM791.5 439h6.8v3.9h-6.8zM791.5 443.9h6.8v3.8h-6.8zM791.5 448.7h6.8v3.8h-6.8zM791.5 453.6h6.8v3.8h-6.8zM791.5 458.4h6.8v3.7h-6.8zM791.5 463.1h6.8v3.7h-6.8zM799.3 393.9h3.9v6.5h-3.9zM804.2 393.9h3.9v6.5h-3.9zM809.1 393.9h3.8v6.5h-3.8zM813.9 393.9h3.8v6.5h-3.8zM818.7 393.9h3.8v6.5h-3.8zM823.5 393.9h3.8v6.5h-3.8zM828.3 393.9h3.8v6.5h-3.8zM833 393.9h3.7v6.5h-3.7zM837.7 393.9h3.7v6.5h-3.7zM842.4 393.9h3.7v6.5h-3.7zM847.1 393.9h3.6v6.5h-3.6zM851.7 393.9h3.6v6.5h-3.6zM856.4 393.9h3.6v6.5h-3.6zM860.9 393.9h3.6v6.5h-3.6zM799.3 401.4h3.6v6.4h-3.6zM803.9 401.4h3.6v6.4h-3.6zM808.5 401.4h3.5v6.4h-3.5zM813 401.4h3.5v6.4h-3.5zM817.5 401.4h3.5v6.4h-3.5zM822 401.4h3.5v6.4h-3.5zM826.5 401.4h3.4v6.4h-3.4zM830.9 401.4h3.4v6.4h-3.4zM835.3 401.4h3.4v6.4h-3.4zM839.7 401.4h3.4v6.4h-3.4zM844.1 401.4h3.3v6.4h-3.3zM848.4 401.4h3.3v6.4h-3.3zM852.7 401.4h3.3v6.4h-3.3zM857 401.4h3.3v6.4h-3.3zM861.3 401.4h3.2v6.4h-3.2zM799.3 408.8h6.3v3.3h-6.3zM799.3 413.1h6.3v3.3h-6.3zM799.3 417.4h6.3v3.3h-6.3zM799.3 421.7h6.3v3.3h-6.3zM799.3 425.9h6.3v3.2h-6.3zM799.3 430.2h6.3v3.2h-6.3zM799.3 434.4h6.3v3.2h-6.3zM799.3 438.6h6.3v3.2h-6.3zM799.3 442.8h6.3v3.2h-6.3zM799.3 447h6.3v3.2h-6.3zM799.3 451.1h6.3v3.2h-6.3zM799.3 455.3h6.3v3.2h-6.3zM799.3 459.5h6.3v3.2h-6.3zM799.3 463.6h6.3v3.2h-6.3zM806.6 408.8h3.4v5.7h-3.4zM811 408.8h3.3v5.7h-3.3zM815.3 408.8h3.3v5.7h-3.3zM819.6 408.8h3.3v5.7h-3.3zM824 408.8h3.3v5.7h-3.3zM828.2 408.8h3.3v5.7h-3.3zM832.5 408.8h3.2v5.7h-3.2zM836.7 408.8h3.2v5.7h-3.2zM841 408.8h3.2v5.7h-3.2zM845.1 408.8h3.1v5.7h-3.1zM849.3 408.8h3.1v5.7h-3.1zM853.4 408.8h3.1v5.7h-3.1zM857.4 408.8h3v5.7h-3zM861.5 408.8h3v5.7h-3zM806.6 415.5h5.5v3.1h-5.5zM806.6 419.7h5.5v3.1h-5.5zM806.6 423.8h5.5v3.1h-5.5zM806.6 427.9h5.5v3.1h-5.5zM806.6 432h5.5v3.1h-5.5zM806.6 436.1h5.5v3.1h-5.5zM806.6 440.2h5.5v3h-5.5zM806.6 444.2h5.5v3h-5.5zM806.6 448.2h5.5v3h-5.5zM806.6 452.2h5.5v2.9h-5.5zM806.6 456.1h5.5v2.9h-5.5zM806.6 460h5.5v2.9h-5.5zM806.6 463.9h5.5v2.9h-5.5zM813.1 415.5h5.5v2.8h-5.5zM813.1 419.4h5.5v2.8h-5.5zM813.1 423.2h5.5v2.8h-5.5zM813.1 427h5.5v2.8h-5.5zM813.1 430.8h5.5v2.8h-5.5zM813.1 434.5h5.5v2.8h-5.5zM813.1 438.3h5.5v2.8h-5.5zM813.1 442.1h5.5v2.7h-5.5zM813.1 445.8h5.5v2.7h-5.5zM813.1 449.5h5.5v2.7h-5.5zM813.1 453.2h5.5v2.7h-5.5zM813.1 456.8h5.5v2.7h-5.5zM813.1 460.5h5.5v2.7h-5.5zM813.1 464.1h5.5v2.7h-5.5zM819.5 415.5h2.9v5h-2.9zM823.5 415.5h2.9v5h-2.9zM827.4 415.5h2.9v5h-2.9zM831.2 415.5h2.8v5h-2.8zM835.1 415.5h2.8v5h-2.8zM838.9 415.5h2.8v5h-2.8zM842.7 415.5h2.8v5h-2.8zM846.6 415.5h2.8v5h-2.8zM850.4 415.5h2.8v5h-2.8zM854.1 415.5h2.8v5h-2.8zM857.9 415.5h2.8v5h-2.8zM861.7 415.5h2.8v5h-2.8zM819.5 421.5h2.9v4.7h-2.9zM823.4 421.5h2.9v4.7h-2.9zM827.3 421.5h2.9v4.7h-2.9zM831.2 421.5h2.9v4.7h-2.9zM835.1 421.5h2.9v4.7h-2.9zM838.9 421.5h2.9v4.7h-2.9zM842.8 421.5h2.8v4.7h-2.8zM846.6 421.5h2.8v4.7h-2.8zM850.5 421.5h2.8v4.7h-2.8zM854.2 421.5h2.8v4.7h-2.8zM858 421.5h2.8v4.7h-2.8zM861.8 421.5h2.7v4.7h-2.7zM819.5 427.2h4.6v2.8h-4.6zM819.5 431.1h4.6v2.8h-4.6zM819.5 434.9h4.6v2.7h-4.6zM819.5 438.6h4.6v2.7h-4.6zM819.5 442.3h4.6v2.7h-4.6zM819.5 446h4.6v2.7h-4.6zM819.5 449.6h4.6v2.7h-4.6zM819.5 453.3h4.6v2.6h-4.6zM819.5 456.9h4.6v2.6h-4.6zM819.5 460.6h4.6v2.6h-4.6zM819.5 464.2h4.6v2.6h-4.6zM825.2 427.2h2.5v4.7h-2.5zM828.7 427.2h2.5v4.7h-2.5zM832.2 427.2h2.5v4.7h-2.5zM835.7 427.2h2.5v4.7h-2.5zM839.1 427.2h2.5v4.7h-2.5zM842.6 427.2h2.4v4.7h-2.4zM846 427.2h2.4v4.7h-2.4zM849.4 427.2h2.3v4.7h-2.3zM852.7 427.2h2.3v4.7h-2.3zM856 427.2h2.2v4.7h-2.2zM859.2 427.2h2.2v4.7h-2.2zM862.3 427.2h2.2v4.7h-2.2zM825.2 432.9h4.4v2.3h-4.4zM825.2 436.2h4.4v2.2h-4.4zM825.2 439.4h4.4v2.2h-4.4zM825.2 442.7h4.4v2.2h-4.4zM825.2 445.9h4.4v2.2h-4.4zM825.2 449.1h4.4v2.2h-4.4zM825.2 452.3h4.4v2.2h-4.4zM825.2 455.5h4.4v2.1h-4.4zM825.2 458.6h4.4v2.1h-4.4zM825.2 461.7h4.4v2.1h-4.4zM825.2 464.7h4.4v2.1h-4.4zM830.6 432.9h4.1v2.2h-4.1zM830.6 436.2h4.1v2.2h-4.1zM830.6 439.4h4.1v2.2h-4.1zM830.6 442.6h4.1v2.2h-4.1zM830.6 445.8h4.1v2.2h-4.1zM830.6 449.1h4.1v2.2h-4.1zM830.6 452.3h4.1v2.2h-4.1zM830.6 455.4h4.1v2.1h-4.1zM830.6 458.6h4.1v2.1h-4.1zM830.6 461.7h4.1v2.1h-4.1zM830.6 464.8h4.1v2h-4.1zM835.7 432.9h2.1v4h-2.1zM838.7 432.9h2.1v4h-2.1zM841.8 432.9h2v4h-2zM844.8 432.9h2v4h-2zM847.8 432.9h2v4h-2zM850.8 432.9h2v4h-2zM853.8 432.9h2v4h-2zM856.7 432.9h1.9v4h-1.9zM859.7 432.9h1.9v4h-1.9zM862.6 432.9h1.9v4h-1.9zM835.7 437.9h2.1v3.7h-2.1zM838.7 437.9h2v3.7h-2zM841.7 437.9h2v3.7h-2zM844.8 437.9h2v3.7h-2zM847.8 437.9h2v3.7h-2zM850.8 437.9h2v3.7h-2zM853.7 437.9h2v3.7h-2zM856.7 437.9h1.9v3.7h-1.9zM859.6 437.9h1.9v3.7h-1.9zM862.6 437.9h1.9v3.7h-1.9zM835.7 442.6h3.7v1.9h-3.7zM835.7 445.4h3.7v1.9h-3.7zM835.7 448.3h3.7v1.9h-3.7zM835.7 451.2h3.7v1.8h-3.7zM835.7 454h3.7v1.8h-3.7zM835.7 456.8h3.7v1.8h-3.7zM835.7 459.6h3.7v1.7h-3.7zM835.7 462.3h3.7v1.7h-3.7zM835.7 465.1h3.7v1.7h-3.7zM840.4 442.6h1.9v3.4h-1.9zM843.3 442.6h1.8v3.4h-1.8zM846.1 442.6h1.8v3.4h-1.8zM848.9 442.6h1.8v3.4h-1.8zM851.8 442.6h1.8v3.4h-1.8zM854.6 442.6h1.8v3.4h-1.8zM857.4 442.6h1.7v3.4h-1.7zM860.1 442.6h1.7v3.4h-1.7zM862.8 442.6h1.7v3.4h-1.7zM840.4 446.9h3.2v1.7h-3.2zM840.4 449.6h3.2v1.6h-3.2zM840.4 452.3h3.2v1.6h-3.2zM840.4 454.9h3.2v1.6h-3.2zM840.4 457.5h3.2v1.6h-3.2zM840.4 460.1h3.2v1.6h-3.2zM840.4 462.7h3.2v1.6h-3.2zM840.4 465.2h3.2v1.6h-3.2zM844.6 446.9h3v1.7h-3zM844.6 449.6h3v1.7h-3zM844.6 452.3h3v1.6h-3zM844.6 454.9h3v1.6h-3zM844.6 457.5h3v1.6h-3zM844.6 460.2h3v1.6h-3zM844.6 462.8h3v1.5h-3zM844.6 465.3h3v1.5h-3zM848.6 446.9h1.6v2.8h-1.6zM851.2 446.9h1.5v2.8h-1.5zM853.7 446.9h1.4v2.8h-1.4zM856.1 446.9h1.4v2.8h-1.4zM858.5 446.9h1.3v2.8h-1.3zM860.9 446.9h1.3v2.8h-1.3zM863.2 446.9h1.3v2.8h-1.3zM848.6 450.8h1.5v2.4h-1.5zM851.1 450.8h1.5v2.4h-1.5zM853.6 450.8h1.5v2.4h-1.5zM856 450.8h1.4v2.4h-1.4zM858.5 450.8h1.4v2.4h-1.4zM860.9 450.8h1.3v2.4h-1.3zM863.2 450.8h1.3v2.4h-1.3zM848.6 454.2h2.3v1.4h-2.3zM848.6 456.6h2.3v1.3h-2.3zM848.6 458.9h2.3v1.3h-2.3zM848.6 461.2h2.3v1.2h-2.3zM848.6 463.4h2.3v1.2h-2.3zM848.6 465.6h2.3v1.2h-2.3zM851.9 454.2h1v2.4h-1zM854 454.2h1v2.4h-1zM856 454.2h1v2.4h-1zM857.9 454.2h0.9v2.4h-0.9zM859.9 454.2h0.9v2.4h-0.9zM861.8 454.2h0.9v2.4h-0.9zM863.7 454.2h0.8v2.4h-0.8zM851.9 457.6h2v1.1h-2zM851.9 459.8h2v1.1h-2zM851.9 461.8h2v1.1h-2zM851.9 463.9h2v1h-2zM851.9 465.9h2v0.9h-2zM854.9 457.6h2.1v0.8h-2.1zM854.9 459.4h2.1v0.7h-2.1zM854.9 461.2h2.1v0.7h-2.1zM854.9 462.9h2.1v0.7h-2.1zM854.9 464.6h2.1v0.6h-2.1zM854.9 466.2h2.1v0.6h-2.1zM857.9 457.6h0.6v2h-0.6zM859.5 457.6h0.6v2h-0.6zM861.1 457.6h0.6v2h-0.6zM862.6 457.6h0.6v2h-0.6zM864 457.6h0.6v2h-0.6zM857.9 460.6h1.8v0.6h-1.8zM857.9 462.1h1.8v0.6h-1.8zM857.9 463.6h1.8v0.6h-1.8zM857.9 465h1.8v0.5h-1.8zM857.9 466.3h1.8v0.5h-1.8zM860.8 460.7h0.6v1.2h-0.6zM862.4 460.7h0.6v1.2h-0.6zM863.9 460.7h0.6v1.2h-0.6zM860.8 462.9h0.7v1.1h-0.7zM862.4 462.9h0.6v1.1h-0.6zM863.9 462.9h0.6v1.1h-0.6zM860.8 464.9h1v0.6h-1zM860.8 466.3h1v0.6h-1zM862.7 464.9h0.5v1h-0.5zM864.1 464.9h0.5v1h-0.5zM862.8 466.7h1.7v0.4h-1.7z"/><path fill="#8c564b" d="M598.5 469h12.8v9.5h-12.8zM598.5 479.5h12.8v8.9h-12.8zM598.5 489.4h12.8v8.5h-12.8zM598.5 498.9h12.8v8.4h-12.8zM598.5 508.4h12.8v7.9h-12.8zM598.5 517.3h12.8v7.6h-12.8zM598.5 525.8h12.8v7.4h-12.8zM598.5 534.2h12.8v6.8h-12.8zM598.5 542h12.8v6.1h-12.8zM598.5 549.1h12.8v6h-12.8zM598.5 556.2h12.8v6h-12.8zM598.5 563.1h12.8v5.7h-12.8zM612.3 469h9.8v6.9h-9.8zM612.3 476.9h9.8v6.9h-9.8zM612.3 484.8h9.8v6.4h-9.8zM612.3 492.1h9.8v6.2h-9.8zM612.3 499.3h9.8v5.9h-9.8zM612.3 506.2h9.8v5.6h-9.8zM612.3 512.9h9.8v5.5h-9.8zM612.3 519.3h9.8v5.5h-9.8zM612.3 525.8h9.8v5.4h-9.8zM612.3 532.2h9.8v5.4h-9.8zM612.3 538.6h9.8v5.4h-9.8zM612.3 545h9.8v5.2h-9.8zM612.3 551.2h9.8v5.2h-9.8zM612.3 557.5h9.8v5.2h-9.8zM612.3 563.6h9.8v5.2h-9.8zM623.2 469h5.5v9.3h-5.5zM629.6 469h5.4v9.3h-5.4zM636.1 469h5.2v9.3h-5.2zM642.3 469h5.1v9.3h-5.1zM648.4 469h5.1v9.3h-5.1zM654.5 469h5v9.3h-5zM660.5 469h5v9.3h-5zM666.5 469h4.9v9.3h-4.9zM672.4 469h4.8v9.3h-4.8zM678.2 469h4.8v9.3h-4.8zM684 469h4.8v9.3h-4.8zM689.7 469h4.7v9.3h-4.7zM695.5 469h4.6v9.3h-4.6zM701.1 469h4.6v9.3h-4.6zM706.7 469h4.6v9.3h-4.6zM712.4 469h4.6v9.3h-4.6zM718 469h4.6v9.3h-4.6zM623.2 479.3h8.6v5h-8.6zM623.2 485.3h8.6v4.9h-8.6zM623.2 491.2h8.6v4.8h-8.6zM623.2 497h8.6v4.8h-8.6zM623.2 502.8h8.6v4.8h-8.6zM623.2 508.6h8.6v4.8h-8.6zM623.2 514.4h8.6v4.7h-8.6zM623.2 520.1h8.6v4.6h-8.6zM623.2 525.7h8.6v4.6h-8.6zM623.2 531.3h8.6v4.6h-8.6zM623.2 536.9h8.6v4.5h-8.6zM623.2 542.5h8.6v4.5h-8.6zM623.2 548h8.6v4.5h-8.6zM623.2 553.5h8.6v4.5h-8.6zM623.2 559h8.6v4.4h-8.6zM623.2 564.4h8.6v4.4h-8.6zM632.8 479.3h7.9v4.8h-7.9zM632.8 485.1h7.9v4.8h-7.9zM632.8 490.9h7.9v4.8h-7.9zM632.8 496.7h7.9v4.8h-7.9zM632.8 502.4h7.9v4.7h-7.9zM632.8 508.2h7.9v4.7h-7.9zM632.8 513.9h7.9v4.7h-7.9zM632.8 519.5h7.9v4.6h-7.9zM632.8 525.2h7.9v4.6h-7.9zM632.8 530.8h7.9v4.6h-7.9zM632.8 536.4h7.9v4.6h-7.9zM632.8 542h7.9v4.6h-7.9zM632.8 547.6h7.9v4.6h-7.9zM632.8 553.2h7.9v4.6h-7.9zM632.8 558.7h7.9v4.5h-7.9zM632.8 564.3h7.9v4.5h-7.9zM641.6 479.3h4.6v7.7h-4.6zM647.3 479.3h4.6v7.7h-4.6zM652.9 479.3h4.6v7.7h-4.6zM658.5 479.3h4.6v7.7h-4.6zM664.1 479.3h4.5v7.7h-4.5zM669.6 479.3h4.5v7.7h-4.5zM675.2 479.3h4.5v7.7h-4.5zM680.7 479.3h4.5v7.7h-4.5zM686.1 479.3h4.4v7.7h-4.4zM691.6 479.3h4.4v7.7h-4.4zM697 479.3h4.4v7.7h-4.4zM702.4 479.3h4.4v7.7h-4.4zM707.8 479.3h4.3v7.7h-4.3zM713.1 479.3h4.2v7.7h-4.2zM718.4 479.3h4.2v7.7h-4.2zM641.6 488h7.7v4.2h-7.7zM641.6 493.2h7.7v4.2h-7.7zM641.6 498.4h7.7v4.2h-7.7zM641.6 503.6h7.7v4.2h-7.7zM641.6 508.8h7.7v4.2h-7.7zM641.6 514h7.7v4.2h-7.7zM641.6 519.2h7.7v4.1h-7.7zM641.6 524.3h7.7v4.1h-7.7zM641.6 529.5h7.7v4.1h-7.7zM641.6 534.6h7.7v4.1h-7.7zM641.6 539.6h7.7v4.1h-7.7zM641.6 544.7h7.7v4.1h-7.7zM641.6 549.8h7.7v4h-7.7zM641.6 554.8h7.7v4h-7.7zM641.6 559.8h7.7v4h-7.7zM641.6 564.8h7.7v4h-7.7zM650.3 488h4.1v7.4h-4.1zM655.4 488h4.1v7.4h-4.1zM660.5 488h4v7.4h-4zM665.4 488h3.9v7.4h-3.9zM670.4 488h3.9v7.4h-3.9zM675.3 488h3.9v7.4h-3.9zM680.2 488h3.9v7.4h-3.9zM685.1 488h3.9v7.4h-3.9zM689.9 488h3.8v7.4h-3.8zM694.8 488h3.8v7.4h-3.8zM699.6 488h3.8v7.4h-3.8zM704.4 488h3.8v7.4h-3.8zM709.3 488h3.8v7.4h-3.8zM714.1 488h3.8v7.4h-3.8zM718.8 488h3.8v7.4h-3.8zM650.3 496.4h4v7h-4zM655.3 496.4h4v7h-4zM660.3 496.4h4v7h-4zM665.3 496.4h4v7h-4zM670.2 496.4h3.9v7h-3.9zM675.2 496.4h3.9v7h-3.9zM680.1 496.4h3.9v7h-3.9zM685 496.4h3.9v7h-3.9zM690 496.4h3.9v7h-3.9zM694.9 496.4h3.9v7h-3.9zM699.7 496.4h3.9v7h-3.9zM704.6 496.4h3.8v7h-3.8zM709.4 496.4h3.8v7h-3.8zM714.2 496.4h3.7v7h-3.7zM718.9 496.4h3.7v7h-3.7zM650.3 504.4h6.7v3.9h-6.7zM650.3 509.3h6.7v3.8h-6.7zM650.3 514.1h6.7v3.8h-6.7zM650.3 518.9h6.7v3.8h-6.7zM650.3 523.7h6.7v3.7h-6.7zM650.3 528.4h6.7v3.7h-6.7zM650.3 533.1h6.7v3.7h-6.7zM650.3 537.7h6.7v3.7h-6.7zM650.3 542.4h6.7v3.6h-6.7zM650.3 547h6.7v3.6h-6.7zM650.3 551.6h6.7v3.6h-6.7zM650.3 556.2h6.7v3.6h-6.7zM650.3 560.7h6.7v3.5h-6.7zM650.3 565.3h6.7v3.5h-6.7zM658 504.4h6.1v3.8h-6.1zM658 509.2h6.1v3.8h-6.1zM658 514h6.1v3.8h-6.1zM658 518.7h6.1v3.8h-6.1zM658 523.5h6.1v3.7h-6.1zM658 528.2h6.1v3.7h-6.1zM658 532.9h6.1v3.7h-6.1zM658 537.6h6.1v3.7h-6.1zM658 542.3h6.1v3.6h-6.1zM658 546.9h6.1v3.6h-6.1zM658 551.5h6.1v3.6h-6.1zM658 556.1h6.1v3.6h-6.1zM658 560.7h6.1v3.5h-6.1zM658 565.3h6.1v3.5h-6.1zM665.1 504.4h3.6v6h-3.6zM669.7 504.4h3.6v6h-3.6zM674.3 504.4h3.6v6h-3.6zM678.9 504.4h3.5v6h-3.5zM683.4 504.4h3.5v6h-3.5zM687.9 504.4h3.5v6h-3.5zM692.5 504.4h3.5v6h-3.5zM697 504.4h3.5v6h-3.5zM701.5 504.4h3.5v6h-3.5zM706 504.4h3.4v6h-3.4zM710.4 504.4h3.4v6h-3.4zM714.8 504.4h3.4v6h-3.4zM719.2 504.4h3.4v6h-3.4zM665.1 511.4h6v3.3h-6zM665.1 515.7h6v3.3h-6zM665.1 520h6v3.3h-6zM665.1 524.4h6v3.3h-6zM665.1 528.7h6v3.3h-6zM665.1 533h6v3.3h-6zM665.1 537.2h6v3.2h-6zM665.1 541.5h6v3.1h-6zM665.1 545.6h6v3.1h-6zM665.1 549.7h6v3.1h-6zM665.1 553.8h6v3.1h-6zM665.1 557.9h6v3h-6zM665.1 561.9h6v3h-6zM665.1 565.9h6v2.9h-6zM672.1 511.4h3.1v5.7h-3.1zM676.2 511.4h3.1v5.7h-3.1zM680.3 511.4h3.1v5.7h-3.1zM684.4 511.4h3v5.7h-3zM688.4 511.4h3v5.7h-3zM692.5 511.4h3v5.7h-3zM696.5 511.4h2.9v5.7h-2.9zM700.4 511.4h2.9v5.7h-2.9zM704.3 511.4h2.9v5.7h-2.9zM708.2 511.4h2.9v5.7h-2.9zM712.1 511.4h2.9v5.7h-2.9zM716 511.4h2.8v5.7h-2.8zM719.8 511.4h2.8v5.7h-2.8zM672.1 518.1h3.1v5.2h-3.1zM676.2 518.1h3.1v5.2h-3.1zM680.3 518.1h3v5.2h-3zM684.3 518.1h3v5.2h-3zM688.3 518.1h3v5.2h-3zM692.3 518.1h3v5.2h-3zM696.3 518.1h3v5.2h-3zM700.3 518.1h3v5.2h-3zM704.3 518.1h3v5.2h-3zM708.3 518.1h2.9v5.2h-2.9zM712.2 518.1h2.8v5.2h-2.8zM716 518.1h2.8v5.2h-2.8zM719.8 518.1h2.8v5.2h-2.8zM672.1 524.3h5v2.9h-5zM672.1 528.1h5v2.9h-5zM672.1 532h5v2.9h-5zM672.1 535.9h5v2.8h-5zM672.1 539.7h5v2.8h-5zM672.1 543.5h5v2.8h-5zM672.1 547.4h5v2.8h-5zM672.1 551.2h5v2.8h-5zM672.1 554.9h5v2.8h-5zM672.1 558.7h5v2.7h-5zM672.1 562.4h5v2.7h-5zM672.1 566.1h5v2.7h-5zM678.1 524.3h2.6v5h-2.6zM681.7 524.3h2.6v5h-2.6zM685.3 524.3h2.6v5h-2.6zM688.9 524.3h2.6v5h-2.6zM692.4 524.3h2.5v5h-2.5zM696 524.3h2.5v5h-2.5zM699.5 524.3h2.5v5h-2.5zM703 524.3h2.5v5h-2.5zM706.5 524.3h2.5v5h-2.5zM709.9 524.3h2.4v5h-2.4zM713.4 524.3h2.4v5h-2.4zM716.8 524.3h2.4v5h-2.4zM720.2 524.3h2.4v5h-2.4zM678.1 530.3h4.6v2.7h-4.6zM678.1 533.9h4.6v2.7h-4.6zM678.1 537.6h4.6v2.7h-4.6zM678.1 541.2h4.6v2.6h-4.6zM678.1 544.9h4.6v2.6h-4.6zM678.1 548.5h4.6v2.6h-4.6zM678.1 552.1h4.6v2.6h-4.6zM678.1 555.7h4.6v2.6h-4.6zM678.1 559.3h4.6v2.5h-4.6zM678.1 562.8h4.6v2.5h-4.6zM678.1 566.4h4.6v2.4h-4.6zM683.7 530.3h4.6v2.4h-4.6zM683.7 533.7h4.6v2.4h-4.6zM683.7 537.1h4.6v2.4h-4.6zM683.7 540.5h4.6v2.3h-4.6zM683.7 543.8h4.6v2.3h-4.6zM683.7 547.1h4.6v2.3h-4.6zM683.7 550.4h4.6v2.3h-4.6zM683.7 553.7h4.6v2.3h-4.6zM683.7 557h4.6v2.2h-4.6zM683.7 560.2h4.6v2.2h-4.6zM683.7 563.4h4.6v2.2h-4.6zM683.7 566.7h4.6v2.1h-4.6zM689.3 530.3h2.2v4.4h-2.2zM692.5 530.3h2.2v4.4h-2.2zM695.7 530.3h2.2v4.4h-2.2zM698.8 530.3h2.1v4.4h-2.1zM702 530.3h2.1v4.4h-2.1zM705.1 530.3h2.1v4.4h-2.1zM708.2 530.3h2.1v4.4h-2.1zM711.3 530.3h2.1v4.4h-2.1zM714.4 530.3h2.1v4.4h-2.1zM717.5 530.3h2.1v4.4h-2.1zM720.5 530.3h2.1v4.4h-2.1zM689.3 535.7h4.2v2.2h-4.2zM689.3 538.9h4.2v2.2h-4.2zM689.3 542.1h4.2v2.2h-4.2zM689.3 545.2h4.2v2.2h-4.2zM689.3 548.4h4.2v2.1h-4.2zM689.3 551.5h4.2v2.1h-4.2zM689.3 554.6h4.2v2.1h-4.2zM689.3 557.7h4.2v2.1h-4.2zM689.3 560.7h4.2v2h-4.2zM689.3 563.8h4.2v2h-4.2zM689.3 566.8h4.2v2h-4.2zM694.5 535.7h2v4.2h-2zM697.5 535.7h2v4.2h-2zM700.5 535.7h2v4.2h-2zM703.5 535.7h1.9v4.2h-1.9zM706.5 535.7h1.9v4.2h-1.9zM709.3 535.7h1.9v4.2h-1.9zM712.2 535.7h1.9v4.2h-1.9zM715.1 535.7h1.9v4.2h-1.9zM717.9 535.7h1.8v4.2h-1.8zM720.8 535.7h1.8v4.2h-1.8zM694.5 540.9h3.8v2h-3.8zM694.5 543.9h3.8v2h-3.8zM694.5 546.8h3.8v1.9h-3.8zM694.5 549.8h3.8v1.9h-3.8zM694.5 552.7h3.8v1.9h-3.8zM694.5 555.6h3.8v1.9h-3.8zM694.5 558.5h3.8v1.9h-3.8zM694.5 561.3h3.8v1.8h-3.8zM694.5 564.2h3.8v1.8h-3.8zM694.5 567h3.8v1.8h-3.8zM699.3 540.9h1.8v3.7h-1.8zM702.1 540.9h1.8v3.7h-1.8zM704.9 540.9h1.8v3.7h-1.8zM707.7 540.9h1.7v3.7h-1.7zM710.4 540.9h1.7v3.7h-1.7zM713.1 540.9h1.7v3.7h-1.7zM715.8 540.9h1.6v3.7h-1.6zM718.4 540.9h1.6v3.7h-1.6zM721 540.9h1.6v3.7h-1.6zM699.3 545.5h3.3v1.7h-3.3zM699.3 548.3h3.3v1.7h-3.3zM699.3 551h3.3v1.7h-3.3zM699.3 553.8h3.3v1.7h-3.3zM699.3 556.5h3.3v1.7h-3.3zM699.3 559.2h3.3v1.7h-3.3zM699.3 561.9h3.3v1.7h-3.3zM699.3 564.6h3.3v1.6h-3.3zM699.3 567.2h3.3v1.6h-3.3zM703.7 545.5h1.6v3.4h-1.6zM706.2 545.5h1.6v3.4h-1.6zM708.8 545.5h1.6v3.4h-1.6zM711.4 545.5h1.5v3.4h-1.5zM713.9 545.5h1.5v3.4h-1.5zM716.4 545.5h1.5v3.4h-1.5zM718.9 545.5h1.4v3.4h-1.4zM721.2 545.5h1.4v3.4h-1.4zM703.7 549.9h2.9v1.6h-2.9zM703.7 552.5h2.9v1.6h-2.9zM703.7 555.2h2.9v1.5h-2.9zM703.7 557.6h2.9v1.5h-2.9zM703.7 560.1h2.9v1.5h-2.9zM703.7 562.5h2.9v1.4h-2.9zM703.7 565h2.9v1.4h-2.9zM703.7 567.4h2.9v1.4h-2.9zM707.5 549.9h1.4v2.8h-1.4zM710 549.9h1.4v2.8h-1.4zM712.4 549.9h1.3v2.8h-1.3zM714.6 549.9h1.3v2.8h-1.3zM716.9 549.9h1.3v2.8h-1.3zM719.2 549.9h1.3v2.8h-1.3zM721.4 549.9h1.2v2.8h-1.2zM707.5 553.7h1.3v2.3h-1.3zM709.9 553.7h1.3v2.3h-1.3zM712.2 553.7h1.3v2.3h-1.3zM714.5 553.7h1.3v2.3h-1.3zM716.8 553.7h1.3v2.3h-1.3zM719.1 553.7h1.3v2.3h-1.3zM721.4 553.7h1.2v2.3h-1.2zM707.5 557h2.2v1.2h-2.2zM707.5 559.2h2.2v1.2h-2.2zM707.5 561.5h2.2v1.1h-2.2zM707.5 563.6h2.2v1.1h-2.2zM707.5 565.7h2.2v1.1h-2.2zM707.5 567.8h2.2v1h-2.2zM710.8 557h2.3v0.9h-2.3zM710.8 558.9h2.3v0.9h-2.3zM710.8 560.8h2.3v0.9h-2.3zM710.8 562.7h2.3v0.8h-2.3zM710.8 564.5h2.3v0.8h-2.3zM710.8 566.3h2.3v0.8h-2.3zM710.8 568h2.3v0.8h-2.3zM714.1 557h1v2h-1zM716 557h1v2h-1zM718 557h0.9v2h-0.9zM719.9 557h0.9v2h-0.9zM721.8 557h0.8v2h-0.8zM714.1 559.9h1v1.6h-1zM716.1 559.9h1v1.6h-1zM718.1 559.9h0.9v1.6h-0.9zM720 559.9h0.8v1.6h-0.8zM721.8 559.9h0.8v1.6h-0.8zM714.1 562.5h1.4v0.9h-1.4zM714.1 564.4h1.4v0.9h-1.4zM714.1 566.3h1.4v0.8h-1.4zM714.1 568.1h1.4v0.7h-1.4zM716.4 562.5h0.6v1.8h-0.6zM717.9 562.5h0.6v1.8h-0.6zM719.3 562.5h0.6v1.8h-0.6zM720.7 562.5h0.6v1.8h-0.6zM722.1 562.5h0.6v1.8h-0.6zM716.5 565.3h1.3v0.6h-1.3zM716.5 566.8h1.3v0.6h-1.3zM716.5 568.3h1.3v0.6h-1.3zM718.7 565.3h1.1v0.6h-1.1zM718.7 566.8h1.1v0.6h-1.1zM718.7 568.3h1.1v0.6h-1.1zM720.8 565.3h0.6v1h-0.6zM722.2 565.3h0.5v1h-0.5zM720.8 567.2h0.9v0.5h-0.9zM720.8 568.5h0.9v0.5h-0.9zM722.5 567.4h0.3v1.4h-0.3z"/><path fill="#aec7e8" d="M598.5 570.8h12.5v10.4h-12.5zM598.5 582.2h12.5v10.2h-12.5zM598.5 593.4h12.5v9h-12.5zM598.5 603.4h12.5v7.6h-12.5zM598.5 611.9h12.5v6.5h-12.5zM598.5 619.5h12.5v6.3h-12.5zM598.5 626.8h12.5v6.1h-12.5zM612 570.8h10.1v6.9h-10.1zM612 578.7h10.1v6.5h-10.1zM612 586.2h10.1v6.2h-10.1zM612 593.3h10.1v6.2h-10.1zM612 600.5h10.1v5.9h-10.1zM612 607.3h10.1v5.8h-10.1zM612 614.2h10.1v5.7h-10.1zM612 620.9h10.1v5.5h-10.1zM612 627.4h10.1v5.5h-10.1zM623.1 570.8h9.2v6.1h-9.2zM623.1 577.9h9.2v5.9h-9.2zM623.1 584.8h9.2v5.7h-9.2zM623.1 591.5h9.2v5.4h-9.2zM623.1 597.9h9.2v5.4h-9.2zM623.1 604.2h9.2v5h-9.2zM623.1 610.2h9.2v5h-9.2zM623.1 616.2h9.2v4.9h-9.2zM623.1 622.1h9.2v4.9h-9.2zM623.1 628h9.2v4.9h-9.2zM633.3 570.8h9v4.9h-9zM633.3 576.7h9v4.9h-9zM633.3 582.6h9v4.9h-9zM633.3 588.4h9v4.8h-9zM633.3 594.2h9v4.8h-9zM633.3 600h9v4.8h-9zM633.3 605.8h9v4.7h-9zM633.3 611.5h9v4.7h-9zM633.3 617.2h9v4.6h-9zM633.3 622.8h9v4.6h-9zM633.3 628.4h9v4.5h-9zM643.3 570.8h8.3v4.9h-8.3zM643.3 576.7h8.3v4.8h-8.3zM643.3 582.5h8.3v4.8h-8.3zM643.3 588.4h8.3v4.8h-8.3zM643.3 594.2h8.3v4.8h-8.3zM643.3 600h8.3v4.8h-8.3zM643.3 605.7h8.3v4.7h-8.3zM643.3 611.5h8.3v4.7h-8.3zM643.3 617.1h8.3v4.7h-8.3zM643.3 622.8h8.3v4.5h-8.3zM643.3 628.4h8.3v4.5h-8.3zM652.6 570.8h8.3v4.5h-8.3zM652.6 576.3h8.3v4.4h-8.3zM652.6 581.7h8.3v4.4h-8.3zM652.6 587.1h8.3v4.3h-8.3zM652.6 592.4h8.3v4.3h-8.3zM652.6 597.7h8.3v4.3h-8.3zM652.6 603h8.3v4.2h-8.3zM652.6 608.2h8.3v4.2h-8.3zM652.6 613.4h8.3v4.2h-8.3zM652.6 618.5h8.3v4.2h-8.3zM652.6 623.7h8.3v4.1h-8.3zM652.6 628.8h8.3v4.1h-8.3zM661.8 570.8h4.4v7.6h-4.4zM667.2 570.8h4.4v7.6h-4.4zM672.6 570.8h4.3v7.6h-4.3zM677.9 570.8h4.2v7.6h-4.2zM683.1 570.8h4.2v7.6h-4.2zM688.3 570.8h4.2v7.6h-4.2zM693.4 570.8h4.1v7.6h-4.1zM698.5 570.8h4v7.6h-4zM703.6 570.8h4v7.6h-4zM708.6 570.8h4v7.6h-4zM713.6 570.8h4v7.6h-4zM718.6 570.8h4v7.6h-4zM661.8 579.4h7.1v4.3h-7.1zM661.8 584.7h7.1v4.2h-7.1zM661.8 589.9h7.1v4.1h-7.1zM661.8 595h7.1v4.1h-7.1zM661.8 600.1h7.1v4.1h-7.1zM661.8 605.2h7.1v3.9h-7.1zM661.8 610.1h7.1v3.8h-7.1zM661.8 614.9h7.1v3.8h-7.1zM661.8 619.7h7.1v3.8h-7.1zM661.8 624.5h7.1v3.7h-7.1zM661.8 629.2h7.1v3.7h-7.1zM670 579.4h4.1v6.5h-4.1zM675.1 579.4h4v6.5h-4zM680.1 579.4h4v6.5h-4zM685.1 579.4h3.9v6.5h-3.9zM690 579.4h3.9v6.5h-3.9zM694.9 579.4h3.9v6.5h-3.9zM699.8 579.4h3.9v6.5h-3.9zM704.7 579.4h3.8v6.5h-3.8zM709.5 579.4h3.7v6.5h-3.7zM714.2 579.4h3.7v6.5h-3.7zM718.9 579.4h3.7v6.5h-3.7zM670 586.9h6.2v3.8h-6.2zM670 591.7h6.2v3.8h-6.2zM670 596.5h6.2v3.8h-6.2zM670 601.3h6.2v3.7h-6.2zM670 606.1h6.2v3.7h-6.2zM670 610.8h6.2v3.7h-6.2zM670 615.5h6.2v3.7h-6.2zM670 620.1h6.2v3.6h-6.2zM670 624.7h6.2v3.6h-6.2zM670 629.3h6.2v3.6h-6.2zM677.2 586.9h3.5v6.2h-3.5zM681.7 586.9h3.5v6.2h-3.5zM686.2 586.9h3.4v6.2h-3.4zM690.6 586.9h3.3v6.2h-3.3zM694.9 586.9h3.2v6.2h-3.2zM699.1 586.9h3.2v6.2h-3.2zM703.3 586.9h3.1v6.2h-3.1zM707.4 586.9h3.1v6.2h-3.1zM711.5 586.9h3.1v6.2h-3.1zM715.6 586.9h3v6.2h-3zM719.6 586.9h3v6.2h-3zM677.2 594.1h5.9v3.2h-5.9zM677.2 598.2h5.9v3.1h-5.9zM677.2 602.4h5.9v3.1h-5.9zM677.2 606.5h5.9v3h-5.9zM677.2 610.5h5.9v2.9h-5.9zM677.2 614.4h5.9v2.9h-5.9zM677.2 618.3h5.9v2.9h-5.9zM677.2 622.2h5.9v2.9h-5.9zM677.2 626.1h5.9v2.9h-5.9zM677.2 630h5.9v2.9h-5.9zM684.1 594.1h3.1v5.3h-3.1zM688.2 594.1h3.1v5.3h-3.1zM692.2 594.1h3v5.3h-3zM696.3 594.1h3v5.3h-3zM700.3 594.1h3v5.3h-3zM704.3 594.1h3v5.3h-3zM708.4 594.1h2.8v5.3h-2.8zM712.2 594.1h2.8v5.3h-2.8zM716 594.1h2.8v5.3h-2.8zM719.8 594.1h2.8v5.3h-2.8zM684.1 600.4h5.1v2.8h-5.1zM684.1 604.2h5.1v2.8h-5.1zM684.1 608h5.1v2.8h-5.1zM684.1 611.9h5.1v2.8h-5.1zM684.1 615.6h5.1v2.8h-5.1zM684.1 619.4h5.1v2.7h-5.1zM684.1 623.1h5.1v2.7h-5.1zM684.1 626.8h5.1v2.6h-5.1zM684.1 630.4h5.1v2.5h-5.1zM690.2 600.4h2.8v4.6h-2.8zM694.1 600.4h2.8v4.6h-2.8zM697.8 600.4h2.8v4.6h-2.8zM701.6 600.4h2.7v4.6h-2.7zM705.4 600.4h2.7v4.6h-2.7zM709 600.4h2.6v4.6h-2.6zM712.7 600.4h2.6v4.6h-2.6zM716.3 600.4h2.6v4.6h-2.6zM720 600.4h2.6v4.6h-2.6zM690.2 606h4.5v2.7h-4.5zM690.2 609.6h4.5v2.6h-4.5zM690.2 613.3h4.5v2.6h-4.5zM690.2 616.9h4.5v2.5h-4.5zM690.2 620.3h4.5v2.4h-4.5zM690.2 623.8h4.5v2.4h-4.5zM690.2 627.2h4.5v2.4h-4.5zM690.2 630.5h4.5v2.4h-4.5zM695.8 606h2.3v4.6h-2.3zM699.1 606h2.2v4.6h-2.2zM702.3 606h2.2v4.6h-2.2zM705.4 606h2.2v4.6h-2.2zM708.6 606h2.1v4.6h-2.1zM711.7 606h2.1v4.6h-2.1zM714.7 606h2v4.6h-2zM717.7 606h2v4.6h-2zM720.7 606h1.9v4.6h-1.9zM695.8 611.6h4v2.3h-4zM695.8 614.8h4v2.3h-4zM695.8 618.1h4v2.2h-4zM695.8 621.3h4v2.2h-4zM695.8 624.5h4v2.2h-4zM695.8 627.7h4v2.1h-4zM695.8 630.8h4v2.1h-4zM700.7 611.6h3.9v2h-3.9zM700.7 614.6h3.9v2h-3.9zM700.7 617.6h3.9v1.8h-3.9zM700.7 620.4h3.9v1.8h-3.9zM700.7 623.1h3.9v1.7h-3.9zM700.7 625.8h3.9v1.7h-3.9zM700.7 628.5h3.9v1.7h-3.9zM700.7 631.2h3.9v1.7h-3.9zM705.7 611.6h2.1v3.3h-2.1zM708.8 611.6h2.1v3.3h-2.1zM711.8 611.6h2v3.3h-2zM714.9 611.6h2v3.3h-2zM717.8 611.6h2v3.3h-2zM720.8 611.6h1.8v3.3h-1.8zM705.7 615.8h1.7v3.4h-1.7zM708.4 615.8h1.7v3.4h-1.7zM711 615.8h1.7v3.4h-1.7zM713.7 615.8h1.6v3.4h-1.6zM716.3 615.8h1.5v3.4h-1.5zM718.7 615.8h1.5v3.4h-1.5zM721.2 615.8h1.4v3.4h-1.4zM705.7 620.2h2.8v1.8h-2.8zM705.7 623.1h2.8v1.8h-2.8zM705.7 625.9h2.8v1.7h-2.8zM705.7 628.6h2.8v1.7h-2.8zM705.7 631.3h2.8v1.6h-2.8zM709.4 620.2h3v1.4h-3zM709.4 622.6h3v1.4h-3zM709.4 624.9h3v1.3h-3zM709.4 627.3h3v1.2h-3zM709.4 629.5h3v1.2h-3zM709.4 631.8h3v1.1h-3zM713.4 620.2h1.1v2.7h-1.1zM715.5 620.2h1.1v2.7h-1.1zM717.6 620.2h1v2.7h-1zM719.6 620.2h1v2.7h-1zM721.6 620.2h1v2.7h-1zM713.4 624h2.3v1.1h-2.3zM713.4 626.1h2.3v1.1h-2.3zM713.4 628.1h2.3v1h-2.3zM713.4 630.2h2.3v0.9h-2.3zM713.4 632.1h2.3v0.8h-2.3zM716.8 624h0.8v2.3h-0.8zM718.6 624h0.8v2.3h-0.8zM720.4 624h0.7v2.3h-0.7zM722 624h0.6v2.3h-0.6zM716.8 627.3h1.8v0.8h-1.8zM716.8 629h1.8v0.7h-1.8zM716.8 630.7h1.8v0.6h-1.8zM716.8 632.3h1.8v0.6h-1.8zM719.5 627.3h0.6v1.8h-0.6zM720.9 627.3h0.5v1.8h-0.5zM722.2 627.3h0.5v1.8h-0.5zM719.5 630h1.6v0.6h-1.6zM719.5 631.4h1.6v0.5h-1.6zM719.5 632.6h1.6v0.5h-1.6zM722.1 630.1h0.6v0.9h-0.6zM722.1 632h0.6v0.9h-0.6z"/><path fill="#ff9896" d="M724.6 469h12.1v10.6h-12.1zM724.6 480.6h12.1v10.2h-12.1zM724.6 491.9h12.1v8.4h-12.1zM724.6 501.3h12.1v8.1h-12.1zM724.6 510.5h12.1v6.9h-12.1zM724.6 518.4h12.1v6.7h-12.1zM724.6 526.1h12.1v5.2h-12.1zM724.6 532.3h12.1v5.2h-12.1zM724.6 538.5h12.1v5.1h-12.1zM724.6 544.6h12.1v5h-12.1zM737.7 469h6.1v9.9h-6.1zM744.8 469h6.1v9.9h-6.1zM751.8 469h5.6v9.9h-5.6zM758.4 469h5.4v9.9h-5.4zM764.8 469h5.3v9.9h-5.3zM771.1 469h5.3v9.9h-5.3zM777.4 469h5.3v9.9h-5.3zM783.7 469h5v9.9h-5zM789.7 469h4.6v9.9h-4.6zM795.3 469h4.5v9.9h-4.5zM800.8 469h4.5v9.9h-4.5zM737.7 479.9h5.4v8.2h-5.4zM744.1 479.9h5.4v8.2h-5.4zM750.5 479.9h5.3v8.2h-5.3zM756.8 479.9h5.3v8.2h-5.3zM763.1 479.9h5.2v8.2h-5.2zM769.4 479.9h5.2v8.2h-5.2zM775.6 479.9h5.2v8.2h-5.2zM781.8 479.9h5.2v8.2h-5.2zM788 479.9h5.1v8.2h-5.1zM794.1 479.9h5.1v8.2h-5.1zM800.2 479.9h5.1v8.2h-5.1zM737.7 489.1h8.1v5h-8.1zM737.7 495.1h8.1v4.9h-8.1zM737.7 501h8.1v4.7h-8.1zM737.7 506.7h8.1v4.6h-8.1zM737.7 512.3h8.1v4.6h-8.1zM737.7 518h8.1v4.5h-8.1zM737.7 523.5h8.1v4.5h-8.1zM737.7 529h8.1v4.5h-8.1zM737.7 534.5h8.1v4.5h-8.1zM737.7 539.9h8.1v4.4h-8.1zM737.7 545.3h8.1v4.3h-8.1zM746.7 489.1h4.6v7.5h-4.6zM752.3 489.1h4.6v7.5h-4.6zM757.9 489.1h4.6v7.5h-4.6zM763.4 489.1h4.5v7.5h-4.5zM768.9 489.1h4.5v7.5h-4.5zM774.4 489.1h4.4v7.5h-4.4zM779.8 489.1h4.4v7.5h-4.4zM785.2 489.1h4.4v7.5h-4.4zM790.5 489.1h4.3v7.5h-4.3zM795.9 489.1h4.2v7.5h-4.2zM801.1 489.1h4.2v7.5h-4.2zM746.7 497.6h7.2v4.4h-7.2zM746.7 503h7.2v4.4h-7.2zM746.7 508.4h7.2v4.4h-7.2zM746.7 513.8h7.2v4.4h-7.2zM746.7 519.2h7.2v4.4h-7.2zM746.7 524.6h7.2v4.3h-7.2zM746.7 529.9h7.2v4.3h-7.2zM746.7 535.2h7.2v4.2h-7.2zM746.7 540.5h7.2v4.1h-7.2zM746.7 545.6h7.2v4h-7.2zM754.9 497.6h3.9v7.2h-3.9zM759.8 497.6h3.9v7.2h-3.9zM764.7 497.6h3.9v7.2h-3.9zM769.6 497.6h3.8v7.2h-3.8zM774.4 497.6h3.7v7.2h-3.7zM779.1 497.6h3.6v7.2h-3.6zM783.8 497.6h3.6v7.2h-3.6zM788.4 497.6h3.5v7.2h-3.5zM792.9 497.6h3.5v7.2h-3.5zM797.4 497.6h3.4v7.2h-3.4zM801.9 497.6h3.4v7.2h-3.4zM754.9 505.8h6.8v3.6h-6.8zM754.9 510.4h6.8v3.6h-6.8zM754.9 515h6.8v3.6h-6.8zM754.9 519.6h6.8v3.6h-6.8zM754.9 524.1h6.8v3.5h-6.8zM754.9 528.7h6.8v3.5h-6.8zM754.9 533.2h6.8v3.4h-6.8zM754.9 537.6h6.8v3.4h-6.8zM754.9 542h6.8v3.3h-6.8zM754.9 546.4h6.8v3.2h-6.8zM762.7 505.8h3.7v6.1h-3.7zM767.4 505.8h3.6v6.1h-3.6zM772 505.8h3.5v6.1h-3.5zM776.5 505.8h3.5v6.1h-3.5zM781 505.8h3.4v6.1h-3.4zM785.4 505.8h3.4v6.1h-3.4zM789.8 505.8h3.2v6.1h-3.2zM793.9 505.8h3.2v6.1h-3.2zM798.1 505.8h3.1v6.1h-3.1zM802.2 505.8h3.1v6.1h-3.1zM762.7 512.9h5.6v3.4h-5.6zM762.7 517.3h5.6v3.3h-5.6zM762.7 521.6h5.6v3.3h-5.6zM762.7 525.9h5.6v3.2h-5.6zM762.7 530.1h5.6v3.1h-5.6zM762.7 534.3h5.6v3.1h-5.6zM762.7 538.4h5.6v3.1h-5.6zM762.7 542.5h5.6v3.1h-5.6zM762.7 546.6h5.6v3h-5.6zM769.3 512.9h3v5.6h-3zM773.3 512.9h2.8v5.6h-2.8zM777.1 512.9h2.8v5.6h-2.8zM780.9 512.9h2.8v5.6h-2.8zM784.7 512.9h2.8v5.6h-2.8zM788.4 512.9h2.7v5.6h-2.7zM792.2 512.9h2.6v5.6h-2.6zM795.8 512.9h2.5v5.6h-2.5zM799.3 512.9h2.5v5.6h-2.5zM802.8 512.9h2.5v5.6h-2.5zM769.3 519.5h4.8v3h-4.8zM769.3 523.5h4.8v3h-4.8zM769.3 527.5h4.8v3h-4.8zM769.3 531.4h4.8v2.9h-4.8zM769.3 535.3h4.8v2.8h-4.8zM769.3 539.2h4.8v2.8h-4.8zM769.3 543h4.8v2.8h-4.8zM769.3 546.8h4.8v2.8h-4.8zM775.1 519.5h5.1v2.6h-5.1zM775.1 523.1h5.1v2.5h-5.1zM775.1 526.6h5.1v2.5h-5.1zM775.1 530.1h5.1v2.5h-5.1zM775.1 533.6h5.1v2.5h-5.1zM775.1 537.1h5.1v2.4h-5.1zM775.1 540.5h5.1v2.4h-5.1zM775.1 543.9h5.1v2.4h-5.1zM775.1 547.3h5.1v2.3h-5.1zM781.2 519.5h2.7v4.2h-2.7zM784.9 519.5h2.6v4.2h-2.6zM788.6 519.5h2.6v4.2h-2.6zM792.2 519.5h2.6v4.2h-2.6zM795.8 519.5h2.6v4.2h-2.6zM799.3 519.5h2.5v4.2h-2.5zM802.8 519.5h2.5v4.2h-2.5zM781.2 524.7h2.3v4.4h-2.3zM784.5 524.7h2.3v4.4h-2.3zM787.8 524.7h2.3v4.4h-2.3zM791 524.7h2.2v4.4h-2.2zM794.2 524.7h2.1v4.4h-2.1zM797.4 524.7h2v4.4h-2zM800.4 524.7h2v4.4h-2zM803.4 524.7h1.9v4.4h-1.9zM781.2 530.2h4.1v2h-4.1zM781.2 533.2h4.1v2h-4.1zM781.2 536.1h4.1v2h-4.1zM781.2 539.1h4.1v1.9h-4.1zM781.2 542h4.1v1.9h-4.1zM781.2 544.9h4.1v1.9h-4.1zM781.2 547.7h4.1v1.9h-4.1zM786.3 530.2h2v3.9h-2zM789.3 530.2h1.9v3.9h-1.9zM792.3 530.2h1.9v3.9h-1.9zM795.2 530.2h1.9v3.9h-1.9zM798.1 530.2h1.8v3.9h-1.8zM800.9 530.2h1.7v3.9h-1.7zM803.6 530.2h1.7v3.9h-1.7zM786.3 535.1h3.6v1.8h-3.6zM786.3 537.9h3.6v1.7h-3.6zM786.3 540.6h3.6v1.6h-3.6zM786.3 543.2h3.6v1.5h-3.6zM786.3 545.7h3.6v1.5h-3.6zM786.3 548.1h3.6v1.5h-3.6zM791 535.1h1.7v3.1h-1.7zM793.6 535.1h1.6v3.1h-1.6zM796.3 535.1h1.6v3.1h-1.6zM798.8 535.1h1.5v3.1h-1.5zM801.4 535.1h1.5v3.1h-1.5zM803.9 535.1h1.4v3.1h-1.4zM791 539.2h3v1.4h-3zM791 541.7h3v1.4h-3zM791 544.1h3v1.3h-3zM791 546.3h3v1.2h-3zM791 548.5h3v1.1h-3zM795 539.2h1.4v2.4h-1.4zM797.4 539.2h1.4v2.4h-1.4zM799.7 539.2h1.3v2.4h-1.3zM802 539.2h1.2v2.4h-1.2zM804.2 539.2h1.1v2.4h-1.1zM795 542.7h2.5v1.1h-2.5zM795 544.7h2.5v1.1h-2.5zM795 546.8h2.5v1h-2.5zM795 548.8h2.5v0.8h-2.5zM798.5 542.7h1.2v1.8h-1.2zM800.7 542.7h1v1.8h-1zM802.7 542.7h0.8v1.8h-0.8zM804.5 542.7h0.8v1.8h-0.8zM798.5 545.5h1.7v0.8h-1.7zM798.5 547.3h1.7v0.7h-1.7zM798.5 549h1.7v0.6h-1.7zM801.2 545.5h0.8v1.2h-0.8zM803 545.5h0.7v1.2h-0.7zM804.7 545.5h0.6v1.2h-0.6zM801.2 547.6h1.3v0.6h-1.3zM801.2 549.1h1.3v0.6h-1.3zM803.4 547.6h0.6v1h-0.6zM804.8 547.6h0.6v1h-0.6zM803.4 549.5h1.9v0.4h-1.9z"/><path fill="#c49c94" d="M806.9 469h9.7v11.8h-9.7zM817.6 469h8.4v11.8h-8.4zM827 469h7.7v11.8h-7.7zM835.7 469h5.6v11.8h-5.6zM842.3 469h5.4v11.8h-5.4zM848.7 469h4.7v11.8h-4.7zM854.4 469h4.7v11.8h-4.7zM860 469h4.5v11.8h-4.5zM806.9 481.8h5.5v8.9h-5.5zM813.4 481.8h5.4v8.9h-5.4zM819.8 481.8h5.3v8.9h-5.3zM826.1 481.8h4.9v8.9h-4.9zM832.1 481.8h4.8v8.9h-4.8zM837.9 481.8h4.8v8.9h-4.8zM843.6 481.8h4.6v8.9h-4.6zM849.3 481.8h4.5v8.9h-4.5zM854.8 481.8h4.4v8.9h-4.4zM860.2 481.8h4.3v8.9h-4.3zM806.9 491.7h5.1v7.7h-5.1zM813 491.7h5v7.7h-5zM819 491.7h5v7.7h-5zM825 491.7h5v7.7h-5zM831 491.7h5v7.7h-5zM836.9 491.7h4.9v7.7h-4.9zM842.9 491.7h4.8v7.7h-4.8zM848.7 491.7h4.7v7.7h-4.7zM854.4 491.7h4.7v7.7h-4.7zM860 491.7h4.5v7.7h-4.5zM806.9 500.4h7.3v4.7h-7.3zM806.9 506.1h7.3v4.6h-7.3zM806.9 511.8h7.3v4.6h-7.3zM806.9 517.4h7.3v4.6h-7.3zM806.9 523h7.3v4.6h-7.3zM806.9 528.6h7.3v4.6h-7.3zM806.9 534.2h7.3v4.5h-7.3zM806.9 539.7h7.3v4.5h-7.3zM806.9 545.2h7.3v4.4h-7.3zM815.2 500.4h7.4v4.3h-7.4zM815.2 505.7h7.4v4.2h-7.4zM815.2 510.9h7.4v4.2h-7.4zM815.2 516.1h7.4v4.1h-7.4zM815.2 521.3h7.4v4.1h-7.4zM815.2 526.3h7.4v3.9h-7.4zM815.2 531.3h7.4v3.9h-7.4zM815.2 536.2h7.4v3.9h-7.4zM815.2 541.1h7.4v3.8h-7.4zM815.2 545.9h7.4v3.7h-7.4zM823.6 500.4h4v6.9h-4zM828.5 500.4h3.8v6.9h-3.8zM833.3 500.4h3.8v6.9h-3.8zM838.1 500.4h3.7v6.9h-3.7zM842.8 500.4h3.6v6.9h-3.6zM847.4 500.4h3.6v6.9h-3.6zM851.9 500.4h3.6v6.9h-3.6zM856.5 500.4h3.5v6.9h-3.5zM861 500.4h3.5v6.9h-3.5zM823.6 508.4h3.9v6.2h-3.9zM828.5 508.4h3.9v6.2h-3.9zM833.4 508.4h3.8v6.2h-3.8zM838.2 508.4h3.7v6.2h-3.7zM842.9 508.4h3.6v6.2h-3.6zM847.6 508.4h3.6v6.2h-3.6zM852.2 508.4h3.6v6.2h-3.6zM856.8 508.4h3.4v6.2h-3.4zM861.2 508.4h3.3v6.2h-3.3zM823.6 515.6h5.8v3.5h-5.8zM823.6 520.1h5.8v3.5h-5.8zM823.6 524.6h5.8v3.5h-5.8zM823.6 529.1h5.8v3.4h-5.8zM823.6 533.5h5.8v3.4h-5.8zM823.6 537.9h5.8v3.3h-5.8zM823.6 542.2h5.8v3.2h-5.8zM823.6 546.4h5.8v3.2h-5.8zM830.3 515.6h5.5v3.3h-5.5zM830.3 519.8h5.5v3.1h-5.5zM830.3 523.9h5.5v3h-5.5zM830.3 528h5.5v2.9h-5.5zM830.3 531.9h5.5v2.8h-5.5zM830.3 535.7h5.5v2.8h-5.5zM830.3 539.5h5.5v2.8h-5.5zM830.3 543.3h5.5v2.7h-5.5zM830.3 546.9h5.5v2.7h-5.5zM836.8 515.6h2.7v5.3h-2.7zM840.5 515.6h2.6v5.3h-2.6zM844.2 515.6h2.6v5.3h-2.6zM847.8 515.6h2.6v5.3h-2.6zM851.4 515.6h2.6v5.3h-2.6zM855 515.6h2.6v5.3h-2.6zM858.5 515.6h2.5v5.3h-2.5zM862 515.6h2.5v5.3h-2.5zM836.8 521.9h2.8v4.7h-2.8zM840.7 521.9h2.7v4.7h-2.7zM844.4 521.9h2.7v4.7h-2.7zM848.1 521.9h2.6v4.7h-2.6zM851.7 521.9h2.6v4.7h-2.6zM855.3 521.9h2.5v4.7h-2.5zM858.9 521.9h2.3v4.7h-2.3zM862.2 521.9h2.3v4.7h-2.3zM836.8 527.5h4.5v2.4h-4.5zM836.8 530.9h4.5v2.4h-4.5zM836.8 534.3h4.5v2.3h-4.5zM836.8 537.6h4.5v2.3h-4.5zM836.8 540.9h4.5v2.3h-4.5zM836.8 544.2h4.5v2.2h-4.5zM836.8 547.4h4.5v2.2h-4.5zM842.4 527.5h4.1v2.4h-4.1zM842.4 530.9h4.1v2.4h-4.1zM842.4 534.3h4.1v2.4h-4.1zM842.4 537.6h4.1v2.3h-4.1zM842.4 541h4.1v2.2h-4.1zM842.4 544.2h4.1v2.2h-4.1zM842.4 547.4h4.1v2.2h-4.1zM847.5 527.5h2.1v3.9h-2.1zM850.6 527.5h2v3.9h-2zM853.6 527.5h2v3.9h-2zM856.7 527.5h2v3.9h-2zM859.6 527.5h1.9v3.9h-1.9zM862.6 527.5h1.9v3.9h-1.9zM847.5 532.4h2.2v3.4h-2.2zM850.7 532.4h2.1v3.4h-2.1zM853.9 532.4h2v3.4h-2zM856.9 532.4h2v3.4h-2zM859.9 532.4h1.9v3.4h-1.9zM862.8 532.4h1.7v3.4h-1.7zM847.5 536.8h3.1v1.8h-3.1zM847.5 539.6h3.1v1.8h-3.1zM847.5 542.4h3.1v1.8h-3.1zM847.5 545.2h3.1v1.7h-3.1zM847.5 547.9h3.1v1.7h-3.1zM851.7 536.8h2.7v1.8h-2.7zM851.7 539.6h2.7v1.8h-2.7zM851.7 542.5h2.7v1.8h-2.7zM851.7 545.3h2.7v1.7h-2.7zM851.7 548h2.7v1.6h-2.7zM855.4 536.8h1.3v3.1h-1.3zM857.7 536.8h1v3.1h-1zM859.7 536.8h1v3.1h-1zM861.7 536.8h0.9v3.1h-0.9zM863.6 536.8h0.9v3.1h-0.9zM855.4 540.9h2.6v1.1h-2.6zM855.4 542.9h2.6v1h-2.6zM855.4 545h2.6v1h-2.6zM855.4 546.9h2.6v1h-2.6zM855.4 548.9h2.6v0.7h-2.6zM859 540.9h1.2v1.8h-1.2zM861.2 540.9h1.2v1.8h-1.2zM863.4 540.9h1.1v1.8h-1.1zM859 543.6h0.9v2h-0.9zM860.8 543.6h0.7v2h-0.7zM862.5 543.6h0.6v2h-0.6zM864 543.6h0.6v2h-0.6zM859 546.6h2v0.6h-2zM859 548h2v0.5h-2zM859 549.3h2v0.5h-2zM861.9 546.7h0.5v1.6h-0.5zM863.1 546.7h0.4v1.6h-0.4zM864.2 546.7h0.4v1.6h-0.4zM862 549.2h0.8v0.5h-0.8zM863.8 549.2h0.7v0.5h-0.7z"/><path fill="#c7c7c7" d="M724.6 552h12.9v8.7h-12.9zM724.6 561.7h12.9v8.6h-12.9zM724.6 571.3h12.9v6.8h-12.9zM724.6 579.1h12.9v6.7h-12.9zM724.6 586.8h12.9v5.2h-12.9zM738.5 552h9.6v6.2h-9.6zM738.5 559.2h9.6v6.2h-9.6zM738.5 566.4h9.6v6.1h-9.6zM738.5 573.5h9.6v5.6h-9.6zM738.5 580h9.6v5.5h-9.6zM738.5 586.6h9.6v5.4h-9.6zM749 552h9.4v5.4h-9.4zM749 558.4h9.4v4.9h-9.4zM749 564.3h9.4v4.9h-9.4zM749 570.2h9.4v4.8h-9.4zM749 576h9.4v4.8h-9.4zM749 581.8h9.4v4.7h-9.4zM749 587.5h9.4v4.5h-9.4zM759.5 552h8.3v5.1h-8.3zM759.5 558.1h8.3v5h-8.3zM759.5 564.1h8.3v4.9h-8.3zM759.5 570h8.3v4.9h-8.3zM759.5 575.9h8.3v4.8h-8.3zM759.5 581.7h8.3v4.6h-8.3zM759.5 587.4h8.3v4.6h-8.3zM768.8 552h7.6v5.1h-7.6zM768.8 558.1h7.6v5h-7.6zM768.8 564.1h7.6v5h-7.6zM768.8 570.1h7.6v4.8h-7.6zM768.8 575.8h7.6v4.8h-7.6zM768.8 581.6h7.6v4.7h-7.6zM768.8 587.3h7.6v4.7h-7.6zM777.4 552h8.1v4.3h-8.1zM777.4 557.3h8.1v4.2h-8.1zM777.4 562.5h8.1v4.1h-8.1zM777.4 567.7h8.1v4.1h-8.1zM777.4 572.8h8.1v4.1h-8.1zM777.4 577.9h8.1v4.1h-8.1zM777.4 583h8.1v4h-8.1zM777.4 588h8.1v4h-8.1zM786.5 552h7.2v4.4h-7.2zM786.5 557.4h7.2v4.3h-7.2zM786.5 562.7h7.2v4.2h-7.2zM786.5 567.9h7.2v4.1h-7.2zM786.5 573h7.2v4h-7.2zM786.5 578.1h7.2v4h-7.2zM786.5 583.1h7.2v4h-7.2zM786.5 588.1h7.2v3.9h-7.2zM794.7 552h7.2v3.9h-7.2zM794.7 556.9h7.2v3.7h-7.2zM794.7 561.5h7.2v3.6h-7.2zM794.7 566.2h7.2v3.6h-7.2zM794.7 570.7h7.2v3.5h-7.2zM794.7 575.3h7.2v3.5h-7.2zM794.7 579.8h7.2v3.5h-7.2zM794.7 584.2h7.2v3.5h-7.2zM794.7 588.7h7.2v3.3h-7.2zM802.9 552h3.7v6.4h-3.7zM807.6 552h3.6v6.4h-3.6zM812.1 552h3.6v6.4h-3.6zM816.7 552h3.5v6.4h-3.5zM821.2 552h3.4v6.4h-3.4zM825.5 552h3.4v6.4h-3.4zM829.9 552h3.3v6.4h-3.3zM834.2 552h3.3v6.4h-3.3zM802.9 559.4h6v3.5h-6zM802.9 563.9h6v3.4h-6zM802.9 568.3h6v3.3h-6zM802.9 572.6h6v3.2h-6zM802.9 576.8h6v3.1h-6zM802.9 580.9h6v3.1h-6zM802.9 585h6v3h-6zM802.9 589h6v3h-6zM809.9 559.4h3.5v5.2h-3.5zM814.3 559.4h3.2v5.2h-3.2zM818.5 559.4h3.1v5.2h-3.1zM822.6 559.4h3v5.2h-3zM826.7 559.4h3v5.2h-3zM830.6 559.4h3v5.2h-3zM834.6 559.4h2.9v5.2h-2.9zM809.9 565.6h4.9v3h-4.9zM809.9 569.6h4.9v3h-4.9zM809.9 573.6h4.9v3h-4.9zM809.9 577.6h4.9v2.9h-4.9zM809.9 581.5h4.9v2.9h-4.9zM809.9 585.4h4.9v2.9h-4.9zM809.9 589.2h4.9v2.8h-4.9zM815.7 565.6h3v4.4h-3zM819.7 565.6h2.8v4.4h-2.8zM823.6 565.6h2.8v4.4h-2.8zM827.4 565.6h2.8v4.4h-2.8zM831.1 565.6h2.7v4.4h-2.7zM834.8 565.6h2.7v4.4h-2.7zM815.7 570.9h4.7v2.4h-4.7zM815.7 574.3h4.7v2.2h-4.7zM815.7 577.6h4.7v2.2h-4.7zM815.7 580.7h4.7v2.1h-4.7zM815.7 583.9h4.7v2.1h-4.7zM815.7 587h4.7v2h-4.7zM815.7 590h4.7v2h-4.7zM821.4 570.9h2.6v3.7h-2.6zM825 570.9h2.5v3.7h-2.5zM828.5 570.9h2.4v3.7h-2.4zM831.9 570.9h2.4v3.7h-2.4zM835.3 570.9h2.2v3.7h-2.2zM821.4 575.6h2v3.8h-2zM824.4 575.6h1.9v3.8h-1.9zM827.2 575.6h1.9v3.8h-1.9zM830.1 575.6h1.8v3.8h-1.8zM832.9 575.6h1.8v3.8h-1.8zM835.7 575.6h1.8v3.8h-1.8zM821.4 580.4h3.7v1.6h-3.7zM821.4 583h3.7v1.5h-3.7zM821.4 585.6h3.7v1.5h-3.7zM821.4 588.1h3.7v1.5h-3.7zM821.4 590.6h3.7v1.4h-3.7zM826.1 580.4h1.8v3.1h-1.8zM828.9 580.4h1.5v3.1h-1.5zM831.5 580.4h1.5v3.1h-1.5zM834 580.4h1.3v3.1h-1.3zM836.2 580.4h1.3v3.1h-1.3zM826.1 584.5h2.9v1.3h-2.9zM826.1 586.8h2.9v1.1h-2.9zM826.1 588.9h2.9v1.1h-2.9zM826.1 591h2.9v1h-2.9zM830 584.5h2.3v1.3h-2.3zM830 586.8h2.3v1.2h-2.3zM830 589h2.3v1h-2.3zM830 591h2.3v1h-2.3zM833.3 584.5h0.9v2.4h-0.9zM835.1 584.5h0.7v2.4h-0.7zM836.9 584.5h0.7v2.4h-0.7zM833.3 587.9h1.8v0.9h-1.8zM833.3 589.8h1.8v0.7h-1.8zM833.3 591.5h1.8v0.6h-1.8zM835.9 587.9h0.5v1.9h-0.5zM837.2 587.9h0.4v1.9h-0.4zM836 590.7h1.5v0.4h-1.5zM836 591.8h1.5v0.4h-1.5z"/><path fill="#ff7f0e" d="M724.6 594.4h13.6v10.8h-13.6zM724.6 606.2h13.6v9.9h-13.6zM724.6 617.1h13.6v7.8h-13.6zM724.6 625.8h13.6v7.1h-13.6zM739.2 594.4h10.4v7.3h-10.4zM739.2 602.7h10.4v7.1h-10.4zM739.2 610.8h10.4v7.1h-10.4zM739.2 619h10.4v6.9h-10.4zM739.2 626.9h10.4v6h-10.4zM750.6 594.4h10.5v5.8h-10.5zM750.6 601.2h10.5v5.8h-10.5zM750.6 608h10.5v5.7h-10.5zM750.6 614.7h10.5v5.5h-10.5zM750.6 621.2h10.5v5.4h-10.5zM750.6 627.5h10.5v5.4h-10.5zM762.2 594.4h9.5v5.8h-9.5zM762.2 601.2h9.5v5.8h-9.5zM762.2 608h9.5v5.6h-9.5zM762.2 614.6h9.5v5.5h-9.5zM762.2 621h9.5v5.4h-9.5zM762.2 627.5h9.5v5.4h-9.5zM772.7 594.4h8.7v5.9h-8.7zM772.7 601.3h8.7v5.6h-8.7zM772.7 607.9h8.7v5.5h-8.7zM772.7 614.5h8.7v5.5h-8.7zM772.7 621h8.7v5.5h-8.7zM772.7 627.4h8.7v5.5h-8.7zM782.4 594.4h9v5.1h-9zM782.4 600.5h9v4.8h-9zM782.4 606.3h9v4.8h-9zM782.4 612.1h9v4.7h-9zM782.4 617.8h9v4.4h-9zM782.4 623.2h9v4.4h-9zM782.4 628.6h9v4.3h-9zM792.4 594.4h7.9v4.8h-7.9zM792.4 600.2h7.9v4.7h-7.9zM792.4 605.9h7.9v4.7h-7.9zM792.4 611.6h7.9v4.6h-7.9zM792.4 617.3h7.9v4.6h-7.9zM792.4 622.9h7.9v4.5h-7.9zM792.4 628.4h7.9v4.5h-7.9zM801.3 594.4h4.6v7h-4.6zM807 594.4h4.5v7h-4.5zM812.4 594.4h4.5v7h-4.5zM817.9 594.4h4.4v7h-4.4zM823.3 594.4h4.1v7h-4.1zM828.4 594.4h4.1v7h-4.1zM833.5 594.4h4v7h-4zM801.3 602.4h7.2v3.8h-7.2zM801.3 607.2h7.2v3.7h-7.2zM801.3 612h7.2v3.7h-7.2zM801.3 616.7h7.2v3.4h-7.2zM801.3 621.1h7.2v3.4h-7.2zM801.3 625.4h7.2v3.3h-7.2zM801.3 629.7h7.2v3.2h-7.2zM809.5 602.4h3.4v6.7h-3.4zM813.9 602.4h3.4v6.7h-3.4zM818.3 602.4h3.2v6.7h-3.2zM822.5 602.4h3.2v6.7h-3.2zM826.7 602.4h3v6.7h-3zM830.7 602.4h2.9v6.7h-2.9zM834.6 602.4h2.9v6.7h-2.9zM809.5 610.1h5.9v3.1h-5.9zM809.5 614.3h5.9v3.1h-5.9zM809.5 618.4h5.9v3h-5.9zM809.5 622.3h5.9v2.9h-5.9zM809.5 626.3h5.9v2.8h-5.9zM809.5 630.1h5.9v2.8h-5.9zM816.4 610.1h3v5.6h-3zM820.4 610.1h2.8v5.6h-2.8zM824.2 610.1h2.8v5.6h-2.8zM827.9 610.1h2.6v5.6h-2.6zM831.5 610.1h2.5v5.6h-2.5zM835.1 610.1h2.4v5.6h-2.4zM816.4 616.7h5.1v2.7h-5.1zM816.4 620.4h5.1v2.5h-5.1zM816.4 623.9h5.1v2.4h-5.1zM816.4 627.3h5.1v2.4h-5.1zM816.4 630.6h5.1v2.3h-5.1zM822.5 616.7h2.5v4.6h-2.5zM826 616.7h2.5v4.6h-2.5zM829.5 616.7h2.2v4.6h-2.2zM832.7 616.7h2.1v4.6h-2.1zM835.7 616.7h1.8v4.6h-1.8zM822.5 622.3h4.1v2h-4.1zM822.5 625.3h4.1v1.9h-4.1zM822.5 628.2h4.1v1.9h-4.1zM822.5 631.1h4.1v1.8h-4.1zM827.7 622.3h2v3.4h-2zM830.6 622.3h1.7v3.4h-1.7zM833.4 622.3h1.6v3.4h-1.6zM836 622.3h1.5v3.4h-1.5zM827.7 626.7h3.1v1.5h-3.1zM827.7 629.2h3.1v1.5h-3.1zM827.7 631.7h3.1v1.2h-3.1zM831.7 626.7h1.4v2.5h-1.4zM834.2 626.7h1.2v2.5h-1.2zM836.4 626.7h1.1v2.5h-1.1zM831.7 630.2h2.2v1h-2.2zM831.7 632.2h2.2v0.7h-2.2zM835 630.2h0.9v1.7h-0.9zM836.8 630.2h0.7v1.7h-0.7zM835 632.7h2.5v0.4h-2.5z"/><path fill="#e377c2" d="M839 552h10.7v11.7h-10.7zM850.7 552h7.1v11.7h-7.1zM858.8 552h5.7v11.7h-5.7zM839 564.7h5.8v9.5h-5.8zM845.8 564.7h5.7v9.5h-5.7zM852.5 564.7h5.7v9.5h-5.7zM859.2 564.7h5.3v9.5h-5.3zM839 575.3h5.7v7.9h-5.7zM845.7 575.3h5.7v7.9h-5.7zM852.4 575.3h5.7v7.9h-5.7zM859 575.3h5.5v7.9h-5.5zM839 584.2h4.6v9.2h-4.6zM844.6 584.2h4.5v9.2h-4.5zM850 584.2h4.3v9.2h-4.3zM855.3 584.2h4.2v9.2h-4.2zM860.5 584.2h4v9.2h-4zM839 594.4h4.9v7.5h-4.9zM844.9 594.4h4.6v7.5h-4.6zM850.5 594.4h4.1v7.5h-4.1zM855.6 594.4h4.1v7.5h-4.1zM860.7 594.4h3.8v7.5h-3.8zM839 602.9h4.4v6.5h-4.4zM844.4 602.9h4.4v6.5h-4.4zM849.8 602.9h4.4v6.5h-4.4zM855.2 602.9h4.3v6.5h-4.3zM860.5 602.9h4v6.5h-4zM839 610.4h5.9v4.3h-5.9zM839 615.7h5.9v3.9h-5.9zM839 620.5h5.9v3.6h-5.9zM839 625.1h5.9v3.5h-5.9zM839 629.6h5.9v3.3h-5.9zM845.9 610.4h3.2v5.8h-3.2zM850.1 610.4h3v5.8h-3zM854.1 610.4h2.9v5.8h-2.9zM858 610.4h2.9v5.8h-2.9zM861.9 610.4h2.6v5.8h-2.6zM845.9 617.2h4.7v3.3h-4.7zM845.9 621.5h4.7v3.2h-4.7zM845.9 625.7h4.7v3.1h-4.7zM845.9 629.8h4.7v3.1h-4.7zM851.6 617.2h2.9v4.5h-2.9zM855.5 617.2h2.5v4.5h-2.5zM859 617.2h2.4v4.5h-2.4zM862.4 617.2h2.1v4.5h-2.1zM851.6 622.8h4.4v1.9h-4.4zM851.6 625.6h4.4v1.8h-4.4zM851.6 628.5h4.4v1.8h-4.4zM851.6 631.3h4.4v1.6h-4.4zM857 622.8h2v3.2h-2zM859.9 622.8h1.9v3.2h-1.9zM862.8 622.8h1.7v3.2h-1.7zM857 627h3v1.5h-3zM857 629.4h3v1.4h-3zM857 631.8h3v1.1h-3zM861 627h1.3v2.2h-1.3zM863.3 627h1.2v2.2h-1.2zM861 630.2h1.6v1h-1.6zM861 632.2h1.6v0.7h-1.6zM863.6 630.2h0.9v1.1h-0.9zM863.6 632.3h0.9v0.6h-0.9z"/><rect x="459.3" y="214.8" width="7.6" height="4" fill="#222"/></svg><!-- legend -->
<div class="leg">
<svg class="a" style="left:140px;top:7px" width="16" height="18" viewBox="0 0 16 18"><path d="M4.1 1.9h8.7v8.1H4.1zM4.1 8.3h8.7M6.6 10v5.4l1.3.9 1.3-.9V10" fill="none" stroke="#222" stroke-width="1.1"/></svg>
<div class="t" style="left:0;width:163px;text-align:center;top:36px;font-size:13px;font-weight:bold;color:#15599e">Item_Type</div>
<div class="sw" style="top:55px;background:#1f77b4"></div><div class="ll" style="top:56px">Baking Goods</div>
<div class="sw" style="top:76px;background:#aec7e8"></div><div class="ll" style="top:77px">Breads</div>
<div class="sw" style="top:97px;background:#ff7f0e"></div><div class="ll" style="top:98px">Breakfast</div>
<div class="sw" style="top:118px;background:#ffbb78"></div><div class="ll" style="top:119px">Canned</div>
<div class="sw" style="top:139px;background:#2ca02c"></div><div class="ll" style="top:140px">Dairy</div>
<div class="sw" style="top:160px;background:#98df8a"></div><div class="ll" style="top:161px">Frozen Foods</div>
<div class="sw" style="top:181px;background:#d62728"></div><div class="ll" style="top:182px">Fruits and Vegeta...</div>
<div class="sw" style="top:202px;background:#ff9896"></div><div class="ll" style="top:203px">Hard Drinks</div>
<div class="sw" style="top:223px;background:#9467bd"></div><div class="ll" style="top:224px">Health and Hygiene</div>
<div class="sw" style="top:244px;background:#c5b0d5"></div><div class="ll" style="top:245px">Household</div>
<div class="sw" style="top:265px;background:#8c564b"></div><div class="ll" style="top:266px">Meat</div>
<div class="sw" style="top:286px;background:#c49c94"></div><div class="ll" style="top:287px">Others</div>
<div class="sw" style="top:307px;background:#e377c2"></div><div class="ll" style="top:308px">Seafood</div>
<div class="sw" style="top:328px;background:#f7b6d2"></div><div class="ll" style="top:329px">Snack Foods</div>
<div class="sw" style="top:349px;background:#7f7f7f"></div><div class="ll" style="top:350px">Soft Drinks</div>
<div class="sw" style="top:370px;background:#c7c7c7"></div><div class="ll" style="top:371px">Starchy Foods</div>
</div>
<!-- tooltip -->
<div id="tip" class="a">
<div class="tk" style="top:12px">Item_Identifier:</div><div class="tv" style="top:10px">FDZ19</div>
<div class="tk" style="top:29px">Item_Weight:</div><div class="tv" style="top:27px">6.425</div>
<div class="tk" style="top:46px">Item_Fat_Content:</div><div class="tv" style="top:44px" ><span style="letter-spacing:0.35px">Low Fat</span></div>
<div class="tk" style="top:63px">Item_Visibility:</div><div class="tv" style="top:61px">0.093454899</div>
<div class="a" style="left:-2px;top:75px;width:227px;height:33px;border:2px solid #c00000"></div>
<div class="tk" style="top:80px">Item_Type:</div><div class="tv" style="top:78px" ><span style="letter-spacing:0.35px">Fruits and<br>Vegetables</span></div>
<div class="tk" style="top:110px">Item_MRP:</div><div class="tv" style="top:108px">175.3712</div>
<div class="tk" style="top:127px">Outlet_Identifier:</div><div class="tv" style="top:125px">OUT046</div>
<div class="tk" style="top:144px">Outlet_Establishment_Year:</div><div class="tv" style="top:142px">1997</div>
<div class="tk" style="top:161px">Outlet_Size:</div><div class="tv" style="top:159px" ><span style="letter-spacing:0.35px">Small</span></div>
<div class="tk" style="top:178px">Outlet_Location_Type:</div><div class="tv" style="top:176px">978287400000</div>
<div class="tk" style="top:195px">Outlet_Type:</div><div class="tv" style="top:193px" ><span style="letter-spacing:0.35px">Supermarket<br>Type1</span></div>
<div class="tk" style="top:225px">Item_Outlet_Sales:</div><div class="tv" style="top:223px">2988.1104</div>
</div>

</body></html>
